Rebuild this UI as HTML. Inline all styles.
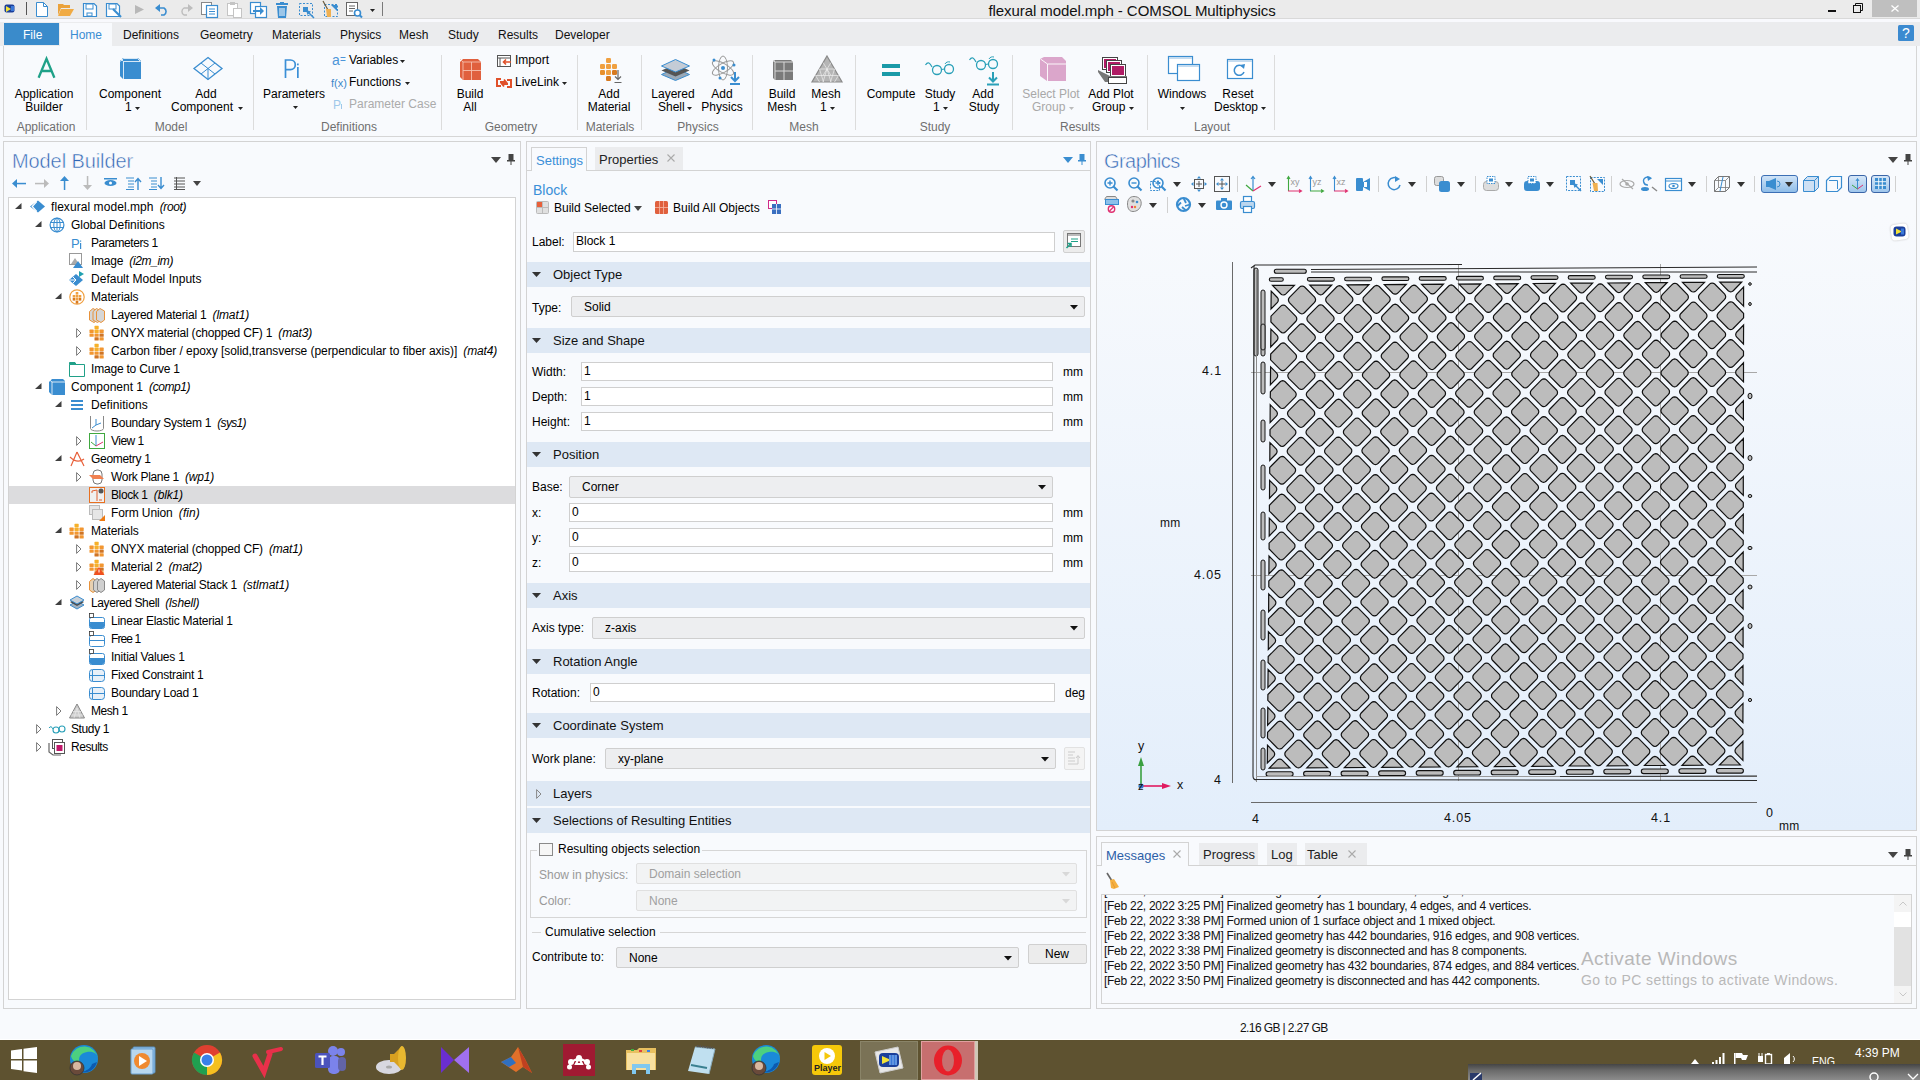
<!DOCTYPE html>
<html><head><meta charset="utf-8">
<style>
*{box-sizing:border-box;margin:0;padding:0}
html,body{width:1920px;height:1080px;overflow:hidden;background:#f8fafd;font-family:"Liberation Sans",sans-serif;font-size:12px;color:#000}
.a{position:absolute}
.t{position:absolute;white-space:nowrap}
.i{font-style:italic}
svg{position:absolute;overflow:visible}
</style></head><body>
<div class="a" style="left:0px;top:0px;width:1920px;height:18px;background:#ebebeb;"></div>
<div class="a" style="left:0px;top:18px;width:1920px;height:1px;background:#d9d9d9;"></div>
<div class="a" style="left:0px;top:19px;width:1920px;height:3px;background:#f8f9fd;"></div>
<div class="a" style="left:0px;top:22px;width:1920px;height:24px;background:#ebecee;"></div>
<div class="a" style="left:3px;top:46px;width:1914px;height:91px;background:#f8fafd;border-left:1px solid #d6d6d6;border-bottom:1px solid #d6d6d6;border-right:1px solid #d6d6d6"></div>
<div class="a" style="left:3px;top:141px;width:518px;height:868px;background:none;border:1px solid #d3d3d3"></div>
<div class="a" style="left:8px;top:197px;width:508px;height:803px;background:#fff;border:1px solid #d3d3d3"></div>
<div class="a" style="left:526px;top:141px;width:565px;height:868px;background:none;border:1px solid #d3d3d3"></div>
<div class="a" style="left:1096px;top:141px;width:821px;height:690px;background:none;border:1px solid #d3d3d3"></div>
<div class="a" style="left:1097px;top:215px;width:819px;height:615px;background:linear-gradient(#f8fafd,#e3eefb);"></div>
<div class="a" style="left:1096px;top:836px;width:821px;height:173px;background:none;border:1px solid #d3d3d3"></div>
<div class="a" style="left:0px;top:1039px;width:1920px;height:1px;background:#ffffff;"></div>
<div class="a" style="left:0px;top:1040px;width:1920px;height:40px;background:#5e5230;"></div>
<svg style="left:4px;top:3px" width="12" height="12" viewBox="0 0 12 12"><rect x="0.5" y="1.5" width="10" height="8" rx="2" fill="#1b3f9a"/><path d="M2 3 L7 6 L2 9Z" fill="#f2e23a"/><rect x="7" y="3" width="3" height="5" fill="#3a78d8"/></svg>
<div class="a" style="left:26px;top:2px;width:1px;height:13px;background:#555;"></div>
<svg style="left:36px;top:2px" width="12" height="15" viewBox="0 0 12 15"><path d="M0.5 0.5H7.5L11.5 4.5V14.5H0.5Z" fill="#fff" stroke="#3a8dd0"/><path d="M7.5 0.5V4.5H11.5" fill="none" stroke="#3a8dd0"/></svg>
<svg style="left:58px;top:4px" width="16" height="12" viewBox="0 0 16 12"><path d="M0 0H5L6 1H12V4H3L0 11Z" fill="#eba23a"/><path d="M3 5H16L12 12H0Z" fill="#f0ab44"/></svg>
<svg style="left:83px;top:3px" width="14" height="14" viewBox="0 0 14 14"><path d="M0.5 0.5H11L13.5 3V13.5H0.5Z" fill="#fff" stroke="#3a8dd0" stroke-width="1.2"/><rect x="3" y="1" width="7" height="5" fill="none" stroke="#3a8dd0"/><rect x="4" y="10" width="5" height="3" fill="none" stroke="#3a8dd0"/></svg>
<svg style="left:106px;top:3px" width="16" height="15" viewBox="0 0 16 15"><path d="M0.5 0.5H11L13.5 3V13.5H0.5Z" fill="#fff" stroke="#3a8dd0" stroke-width="1.2"/><rect x="3" y="1" width="7" height="5" fill="none" stroke="#3a8dd0"/><path d="M7 6L15 14" stroke="#3a8dd0" stroke-width="2.2"/></svg>
<svg style="left:135px;top:5px" width="9" height="9" viewBox="0 0 9 9"><path d="M0 0L9 4.5L0 9Z" fill="#b8b8b8"/></svg>
<svg style="left:155px;top:3px" width="14" height="13" viewBox="0 0 14 13"><path d="M3 5H9A4 4 0 0 1 9 12H6" fill="none" stroke="#3a8dd0" stroke-width="1.6"/><path d="M0 5L5 1V9Z" fill="#3a8dd0"/></svg>
<svg style="left:179px;top:3px" width="14" height="13" viewBox="0 0 14 13"><path d="M11 5H5A4 4 0 0 0 5 12H8" fill="none" stroke="#bdbdbd" stroke-width="1.4"/><path d="M14 5L9 1V9Z" fill="#bdbdbd"/></svg>
<svg style="left:201px;top:2px" width="17" height="16" viewBox="0 0 17 16"><rect x="0.5" y="0.5" width="10" height="12" fill="#fff" stroke="#888"/><rect x="5.5" y="3.5" width="11" height="12" fill="#fff" stroke="#3a8dd0" stroke-width="1.2"/><path d="M8 7H14M8 9.5H14M8 12H14" stroke="#3a8dd0"/></svg>
<svg style="left:227px;top:2px" width="15" height="16" viewBox="0 0 15 16"><rect x="0.5" y="1.5" width="10" height="12" fill="#fff" stroke="#c4c4c4"/><rect x="3" y="0" width="5" height="3" fill="#c4c4c4"/><rect x="6.5" y="6.5" width="8" height="9" fill="#fff" stroke="#c4c4c4"/></svg>
<svg style="left:250px;top:2px" width="17" height="16" viewBox="0 0 17 16"><rect x="0.5" y="0.5" width="10" height="11" fill="#fff" stroke="#3a8dd0" stroke-width="1.2"/><rect x="5.5" y="4.5" width="11" height="11" fill="#fff" stroke="#3a8dd0" stroke-width="1.2"/><path d="M3 8H10V5L14 9L10 13V10H3Z" fill="#3a8dd0"/></svg>
<svg style="left:276px;top:2px" width="12" height="16" viewBox="0 0 12 16"><rect x="0" y="1" width="12" height="2" fill="#3a8dd0"/><rect x="4" y="0" width="4" height="2" fill="#3a8dd0"/><path d="M1 4H11L10 16H2Z" fill="#3a8dd0"/><path d="M4 6V14M6 6V14M8 6V14" stroke="#fff" stroke-width="1"/></svg>
<svg style="left:299px;top:3px" width="16" height="15" viewBox="0 0 16 15"><rect x="0.5" y="0.5" width="13" height="12" fill="none" stroke="#3a8dd0" stroke-dasharray="2 1.5"/><rect x="4" y="4" width="5" height="5" fill="#3a8dd0"/><path d="M8 8L15 15" stroke="#3a8dd0" stroke-width="1.5"/><path d="M7 7L12 8.5L8.5 12Z" fill="#3a8dd0"/></svg>
<svg style="left:322px;top:1px" width="16" height="17" viewBox="0 0 16 17"><rect x="2.5" y="3.5" width="13" height="12" fill="none" stroke="#3a8dd0" stroke-dasharray="2 1.5"/><path d="M9 4L15 4L15 10Z" fill="#3a8dd0"/><path d="M1 0L6 9" stroke="#6b5a3a" stroke-width="1.2"/><path d="M4 8L9 8L9 16L5 16Z" fill="#f0b050"/></svg>
<svg style="left:346px;top:2px" width="17" height="17" viewBox="0 0 17 17"><rect x="0.5" y="0.5" width="11" height="13" fill="#fff" stroke="#666"/><path d="M3 4H9M3 6.5H9M3 9H7" stroke="#666"/><circle cx="11.5" cy="11" r="3" fill="#fff" stroke="#3a8dd0" stroke-width="1.6"/><path d="M13.5 13L16 15.5" stroke="#3a8dd0" stroke-width="2"/></svg>
<svg style="left:370px;top:9px" width="5" height="3" viewBox="0 0 5 3"><path d="M0 0H5L2.5 3Z" fill="#222"/></svg>
<div class="a" style="left:382px;top:2px;width:1px;height:14px;background:#7a7a7a;"></div>
<div class="t" style="left:988.5px;top:3.30px;font-size:15px;line-height:15px;color:#111;letter-spacing:-0.08px">flexural model.mph - COMSOL Multiphysics</div>
<div class="a" style="left:1828px;top:10px;width:8px;height:2px;background:#111;"></div>
<svg style="left:1853px;top:3px" width="10" height="11" viewBox="0 0 10 11"><rect x="0.5" y="2.5" width="7" height="7" fill="none" stroke="#111"/><path d="M2.5 2.5V0.5H9.5V7.5H7.5" fill="none" stroke="#111"/></svg>
<div class="a" style="left:1872px;top:0px;width:45px;height:17px;background:#bfbfbf;"></div>
<svg style="left:1891px;top:5px" width="8" height="7" viewBox="0 0 8 7"><path d="M0.5 0.5L7.5 6.5M7.5 0.5L0.5 6.5" stroke="#fff" stroke-width="1.3"/></svg>
<div class="a" style="left:4px;top:23px;width:55px;height:22px;background:#3a8bcb;"></div>
<div class="t" style="left:23px;top:28.84px;font-size:12px;line-height:12px;color:#fff;">File</div>
<div class="a" style="left:60px;top:23px;width:52px;height:23px;background:#f8fafd;"></div>
<div class="t" style="left:70px;top:28.84px;font-size:12px;line-height:12px;color:#3a8dd3;">Home</div>
<div class="t" style="left:123px;top:28.84px;font-size:12px;line-height:12px;color:#111;">Definitions</div>
<div class="t" style="left:200px;top:28.84px;font-size:12px;line-height:12px;color:#111;">Geometry</div>
<div class="t" style="left:272px;top:28.84px;font-size:12px;line-height:12px;color:#111;">Materials</div>
<div class="t" style="left:340px;top:28.84px;font-size:12px;line-height:12px;color:#111;">Physics</div>
<div class="t" style="left:399px;top:28.84px;font-size:12px;line-height:12px;color:#111;">Mesh</div>
<div class="t" style="left:448px;top:28.84px;font-size:12px;line-height:12px;color:#111;">Study</div>
<div class="t" style="left:498px;top:28.84px;font-size:12px;line-height:12px;color:#111;">Results</div>
<div class="t" style="left:555px;top:28.84px;font-size:12px;line-height:12px;color:#111;">Developer</div>
<div class="a" style="left:1898px;top:25px;width:16px;height:16px;background:#3b8ad0;border-radius:1.5px"></div>
<div class="t" style="left:1902px;top:26.15px;font-size:14px;line-height:14px;color:#fff;">?</div>
<div class="a" style="left:86px;top:55px;width:1px;height:75px;background:#dcdcdc;"></div>
<div class="a" style="left:253px;top:55px;width:1px;height:75px;background:#dcdcdc;"></div>
<div class="a" style="left:441px;top:55px;width:1px;height:75px;background:#dcdcdc;"></div>
<div class="a" style="left:577px;top:55px;width:1px;height:75px;background:#dcdcdc;"></div>
<div class="a" style="left:641px;top:55px;width:1px;height:75px;background:#dcdcdc;"></div>
<div class="a" style="left:752px;top:55px;width:1px;height:75px;background:#dcdcdc;"></div>
<div class="a" style="left:855px;top:55px;width:1px;height:75px;background:#dcdcdc;"></div>
<div class="a" style="left:1012px;top:55px;width:1px;height:75px;background:#dcdcdc;"></div>
<div class="a" style="left:1147px;top:55px;width:1px;height:75px;background:#dcdcdc;"></div>
<div class="a" style="left:1274px;top:55px;width:1px;height:75px;background:#dcdcdc;"></div>
<div class="t" style="left:-54.0px;width:200px;text-align:center;top:120.84px;font-size:12px;line-height:12px;color:#6f6f6f;">Application</div>
<div class="t" style="left:71.0px;width:200px;text-align:center;top:120.84px;font-size:12px;line-height:12px;color:#6f6f6f;">Model</div>
<div class="t" style="left:249.0px;width:200px;text-align:center;top:120.84px;font-size:12px;line-height:12px;color:#6f6f6f;">Definitions</div>
<div class="t" style="left:411.0px;width:200px;text-align:center;top:120.84px;font-size:12px;line-height:12px;color:#6f6f6f;">Geometry</div>
<div class="t" style="left:510.0px;width:200px;text-align:center;top:120.84px;font-size:12px;line-height:12px;color:#6f6f6f;">Materials</div>
<div class="t" style="left:598.0px;width:200px;text-align:center;top:120.84px;font-size:12px;line-height:12px;color:#6f6f6f;">Physics</div>
<div class="t" style="left:704.0px;width:200px;text-align:center;top:120.84px;font-size:12px;line-height:12px;color:#6f6f6f;">Mesh</div>
<div class="t" style="left:835.0px;width:200px;text-align:center;top:120.84px;font-size:12px;line-height:12px;color:#6f6f6f;">Study</div>
<div class="t" style="left:980.0px;width:200px;text-align:center;top:120.84px;font-size:12px;line-height:12px;color:#6f6f6f;">Results</div>
<div class="t" style="left:1112.0px;width:200px;text-align:center;top:120.84px;font-size:12px;line-height:12px;color:#6f6f6f;">Layout</div>
<svg style="left:36.5px;top:58px" width="20" height="21" viewBox="0 0 20 21"><path d="M1.6 19.8L9.5 0.8L17.4 19.8M4.6 13H14.4" fill="none" stroke="#1fa188" stroke-width="2.3"/></svg>
<div class="t" style="left:-56.0px;width:200px;text-align:center;top:87.84px;font-size:12px;line-height:12px;color:#000;">Application</div>
<div class="t" style="left:-56.0px;width:200px;text-align:center;top:100.84px;font-size:12px;line-height:12px;color:#000;">Builder</div>
<svg style="left:120px;top:58px" width="22" height="22" viewBox="0 0 22 22"><path d="M0 3L3 0H18L21 3V21H3L0 18Z" fill="#3a8dd0"/><path d="M0.5 3.5L3.5 0.5H17.5L20.5 3.5H3.5V21M3.5 3.5L0.5 0.5" fill="none" stroke="#fff" stroke-width="0.8"/></svg>
<div class="t" style="left:30.0px;width:200px;text-align:center;top:87.84px;font-size:12px;line-height:12px;color:#000;">Component</div>
<div class="t" style="left:125px;top:100.84px;font-size:12px;line-height:12px;color:#000;">1</div>
<svg style="left:135px;top:107px" width="5" height="3" viewBox="0 0 5 3"><path d="M0 0H5L2.5 3Z" fill="#222"/></svg>
<svg style="left:193px;top:57px" width="30" height="23" viewBox="0 0 30 23"><path d="M15 0.5L29 11.5L15 22.5L1 11.5Z" fill="none" stroke="#3a8dd0" stroke-width="1.3"/><path d="M8 6L15 11.5L22 6M15 11.5V22.5M8 17L15 11.5L22 17" fill="none" stroke="#3a8dd0" stroke-width="1"/></svg>
<div class="t" style="left:106.0px;width:200px;text-align:center;top:87.84px;font-size:12px;line-height:12px;color:#000;">Add</div>
<div class="t" style="left:171px;top:100.84px;font-size:12px;line-height:12px;color:#000;">Component</div>
<svg style="left:238px;top:107px" width="5" height="3" viewBox="0 0 5 3"><path d="M0 0H5L2.5 3Z" fill="#222"/></svg>
<svg style="left:284px;top:59px" width="18" height="19" viewBox="0 0 18 19"><path d="M1.5 19V1H6.5A4.8 4.8 0 0 1 6.5 10.6H1.5" fill="none" stroke="#3b8fd6" stroke-width="1.7"/><rect x="13" y="8" width="1.7" height="11" fill="#3b8fd6"/><rect x="13" y="4.5" width="1.7" height="1.8" fill="#3b8fd6"/></svg>
<div class="t" style="left:194.0px;width:200px;text-align:center;top:87.84px;font-size:12px;line-height:12px;color:#000;">Parameters</div>
<svg style="left:293px;top:106px" width="5" height="3" viewBox="0 0 5 3"><path d="M0 0H5L2.5 3Z" fill="#222"/></svg>
<div class="t" style="left:332px;top:53.15px;font-size:14px;line-height:14px;color:#4d96d9;">a</div>
<div class="t" style="left:340px;top:54.53px;font-size:10px;line-height:10px;color:#4d96d9;">=</div>
<div class="t" style="left:349px;top:53.84px;font-size:12px;line-height:12px;color:#000;">Variables</div>
<svg style="left:400px;top:60px" width="5" height="3" viewBox="0 0 5 3"><path d="M0 0H5L2.5 3Z" fill="#222"/></svg>
<div class="t" style="left:331px;top:77.69px;font-size:11px;line-height:11px;color:#3c86c9;">f(x)</div>
<div class="t" style="left:349px;top:75.84px;font-size:12px;line-height:12px;color:#000;">Functions</div>
<svg style="left:405px;top:82px" width="5" height="3" viewBox="0 0 5 3"><path d="M0 0H5L2.5 3Z" fill="#222"/></svg>
<div class="t" style="left:333px;top:98.84px;font-size:12px;line-height:12px;color:#9ec8ea;">P</div>
<div class="a" style="left:341px;top:104px;width:1px;height:5px;background:#9ec8ea;"></div>
<div class="t" style="left:349px;top:97.84px;font-size:12px;line-height:12px;color:#ababab;">Parameter Case</div>
<svg style="left:460px;top:59px" width="21" height="21" viewBox="0 0 21 21"><path d="M0 3L3 0H18L21 3V21H3L0 18Z" fill="#e0603e"/><path d="M3 3H21M3 11.5H21M11.5 3V21M3 3V21M3 3L0 0" stroke="#f6c0ae" stroke-width="0.9" fill="none"/></svg>
<div class="t" style="left:370.0px;width:200px;text-align:center;top:87.84px;font-size:12px;line-height:12px;color:#000;">Build</div>
<div class="t" style="left:370.0px;width:200px;text-align:center;top:100.84px;font-size:12px;line-height:12px;color:#000;">All</div>
<svg style="left:497px;top:55px" width="15" height="12" viewBox="0 0 15 12"><rect x="0.5" y="0.5" width="13" height="11" fill="#fff" stroke="#555"/><path d="M0.5 3H13.5M3 3V11.5" stroke="#555"/><path d="M14 7H7M9 4.5L6.5 7L9 9.5" fill="none" stroke="#e0502a" stroke-width="1.6"/></svg>
<div class="t" style="left:515px;top:53.84px;font-size:12px;line-height:12px;color:#000;">Import</div>
<svg style="left:496px;top:77px" width="16" height="12" viewBox="0 0 16 12"><path d="M5 2H1V9H5M11 3H15V10H11" fill="none" stroke="#e0502a" stroke-width="2"/><path d="M4 5L10 5L8 2.5M12 7L6 7L8 9.5" fill="none" stroke="#e0502a" stroke-width="1.8"/></svg>
<div class="t" style="left:515px;top:75.84px;font-size:12px;line-height:12px;color:#000;">LiveLink</div>
<svg style="left:562px;top:82px" width="5" height="3" viewBox="0 0 5 3"><path d="M0 0H5L2.5 3Z" fill="#222"/></svg>
<svg style="left:600px;top:58px" width="23" height="26" viewBox="0 0 23 26"><rect x="6" y="0" width="5" height="5" rx="1.2" fill="#f0a040"/><rect x="0" y="6" width="5" height="5" rx="1.2" fill="#f0a040"/><rect x="6" y="6" width="5" height="5" rx="1.2" fill="#f0a040"/><rect x="12" y="6" width="5" height="5" rx="1.2" fill="#f0a040"/><rect x="0" y="12" width="5" height="5" rx="1.2" fill="#e8902c"/><rect x="6" y="12" width="5" height="5" rx="1.2" fill="#f0a040"/><rect x="12" y="12" width="5" height="5" rx="1.2" fill="#d77a20"/><rect x="6" y="18" width="5" height="5" rx="1.2" fill="#d77a20"/><path d="M18 12V21M15 18.5L18 21.5L21 18.5M14.5 24.5H21.5" fill="none" stroke="#666" stroke-width="1.2"/></svg>
<div class="t" style="left:509.0px;width:200px;text-align:center;top:87.84px;font-size:12px;line-height:12px;color:#000;">Add</div>
<div class="t" style="left:509.0px;width:200px;text-align:center;top:100.84px;font-size:12px;line-height:12px;color:#000;">Material</div>
<svg style="left:661px;top:59px" width="29" height="22" viewBox="0 0 29 22"><path d="M14.5 9L28.5 15.5L14.5 21.5L0.5 15.5Z" fill="#9aa9b8" stroke="#3a8dd0"/><path d="M14.5 5L28.5 11.5L14.5 17.5L0.5 11.5Z" fill="#555"/><path d="M14.5 0.5L28.5 7L14.5 13L0.5 7Z" fill="#c4ccd6" stroke="#3a8dd0"/></svg>
<div class="t" style="left:573.0px;width:200px;text-align:center;top:87.84px;font-size:12px;line-height:12px;color:#000;">Layered</div>
<div class="t" style="left:658px;top:100.84px;font-size:12px;line-height:12px;color:#000;">Shell</div>
<svg style="left:687px;top:107px" width="5" height="3" viewBox="0 0 5 3"><path d="M0 0H5L2.5 3Z" fill="#222"/></svg>
<svg style="left:710px;top:54px" width="31" height="32" viewBox="0 0 31 32"><ellipse cx="13" cy="14" rx="12" ry="4.5" fill="none" stroke="#999" transform="rotate(30 13 14)"/><ellipse cx="13" cy="14" rx="12" ry="4.5" fill="none" stroke="#999" transform="rotate(-30 13 14)"/><ellipse cx="13" cy="14" rx="4.5" ry="12" fill="none" stroke="#999"/><circle cx="13" cy="14" r="2" fill="#3a8dd0"/><circle cx="4" cy="6" r="1.5" fill="#3a8dd0"/><circle cx="24" cy="11" r="1.5" fill="#3a8dd0"/><circle cx="10" cy="24" r="1.5" fill="#3a8dd0"/><path d="M25 18V26M21 23L25 27L29 23M20 30H30" fill="none" stroke="#3a8dd0" stroke-width="2"/></svg>
<div class="t" style="left:622.0px;width:200px;text-align:center;top:87.84px;font-size:12px;line-height:12px;color:#000;">Add</div>
<div class="t" style="left:622.0px;width:200px;text-align:center;top:100.84px;font-size:12px;line-height:12px;color:#000;">Physics</div>
<svg style="left:773px;top:60px" width="20" height="20" viewBox="0 0 20 20"><path d="M0 2L2 0H18L20 2V20H2L0 18Z" fill="#7a7a7a"/><path d="M2 2H20M2 11H20M11 2V20M2 2V20M2 2L0 0" stroke="#d8d8d8" stroke-width="1" fill="none"/></svg>
<div class="t" style="left:682.0px;width:200px;text-align:center;top:87.84px;font-size:12px;line-height:12px;color:#000;">Build</div>
<div class="t" style="left:682.0px;width:200px;text-align:center;top:100.84px;font-size:12px;line-height:12px;color:#000;">Mesh</div>
<svg style="left:811px;top:55px" width="32" height="28" viewBox="0 0 32 28"><path d="M16 1L31 27H1Z" fill="#b5b5b5" stroke="#8a8a8a" stroke-width="1.2"/><path d="M8.5 14H23.5M4.5 20.5H27.5M12 7.5L20 20.5M20 7.5L12 20.5M8.5 14L12.5 27M23.5 14L19.5 27M4.5 20.5L8.5 27M27.5 20.5L23.5 27M16 14L12 27M16 14L20 27" stroke="#eee" stroke-width="0.7"/></svg>
<div class="t" style="left:726.0px;width:200px;text-align:center;top:87.84px;font-size:12px;line-height:12px;color:#000;">Mesh</div>
<div class="t" style="left:820px;top:100.84px;font-size:12px;line-height:12px;color:#000;">1</div>
<svg style="left:830px;top:107px" width="5" height="3" viewBox="0 0 5 3"><path d="M0 0H5L2.5 3Z" fill="#222"/></svg>
<div class="a" style="left:882px;top:64px;width:18px;height:4px;background:#1a9aa8;"></div>
<div class="a" style="left:882px;top:72px;width:18px;height:4px;background:#1a9aa8;"></div>
<div class="t" style="left:791.0px;width:200px;text-align:center;top:87.84px;font-size:12px;line-height:12px;color:#000;">Compute</div>
<svg style="left:925px;top:61px" width="30" height="15" viewBox="0 0 30 15"><path d="M0.5 4C3 0 5 2 7 6" fill="none" stroke="#2aa0b8" stroke-width="1.2"/><circle cx="12" cy="9" r="4.5" fill="none" stroke="#2aa0b8" stroke-width="1.3"/><circle cx="24" cy="8" r="4.5" fill="none" stroke="#2aa0b8" stroke-width="1.3"/><path d="M16.5 8.5L19.5 8" stroke="#2aa0b8" stroke-width="1.2"/><path d="M20 3C21 1 23 0.5 25 1" fill="none" stroke="#2aa0b8"/></svg>
<div class="t" style="left:840.0px;width:200px;text-align:center;top:87.84px;font-size:12px;line-height:12px;color:#000;">Study</div>
<div class="t" style="left:933px;top:100.84px;font-size:12px;line-height:12px;color:#000;">1</div>
<svg style="left:943px;top:107px" width="5" height="3" viewBox="0 0 5 3"><path d="M0 0H5L2.5 3Z" fill="#222"/></svg>
<svg style="left:969px;top:56px" width="30" height="15" viewBox="0 0 30 15"><path d="M0.5 4C3 0 5 2 7 6" fill="none" stroke="#2aa0b8" stroke-width="1.2"/><circle cx="12" cy="9" r="4.5" fill="none" stroke="#2aa0b8" stroke-width="1.3"/><circle cx="24" cy="8" r="4.5" fill="none" stroke="#2aa0b8" stroke-width="1.3"/><path d="M16.5 8.5L19.5 8" stroke="#2aa0b8" stroke-width="1.2"/><path d="M20 3C21 1 23 0.5 25 1" fill="none" stroke="#2aa0b8"/></svg>
<svg style="left:985px;top:72px" width="16" height="14" viewBox="0 0 16 14"><path d="M8 0V9M4 5.5L8 9.5L12 5.5M2 12.5H14" fill="none" stroke="#2aa0b8" stroke-width="2"/></svg>
<div class="t" style="left:883.0px;width:200px;text-align:center;top:87.84px;font-size:12px;line-height:12px;color:#000;">Add</div>
<div class="t" style="left:884.0px;width:200px;text-align:center;top:100.84px;font-size:12px;line-height:12px;color:#000;">Study</div>
<svg style="left:1040px;top:57px" width="26" height="24" viewBox="0 0 26 24"><path d="M0 2L4 0H22L26 4V24H7L0 19Z" fill="#dba6cb"/><path d="M0.5 2L7.5 7V24M7.5 7H26" fill="none" stroke="#fff" stroke-width="0.9"/></svg>
<div class="t" style="left:951.0px;width:200px;text-align:center;top:87.84px;font-size:12px;line-height:12px;color:#a8a8a8;">Select Plot</div>
<div class="t" style="left:1032px;top:100.84px;font-size:12px;line-height:12px;color:#a8a8a8;">Group</div>
<svg style="left:1069px;top:107px" width="5" height="3" viewBox="0 0 5 3"><path d="M0 0H5L2.5 3Z" fill="#bbb"/></svg>
<svg style="left:1098px;top:57px" width="30" height="27" viewBox="0 0 30 27"><rect x="4.5" y="0.5" width="15" height="12" fill="#fff" stroke="#444"/><rect x="6" y="2" width="12" height="9" fill="#b01c65"/><rect x="8.5" y="3.5" width="15" height="12" fill="#fff" stroke="#444"/><rect x="10" y="5" width="12" height="9" fill="#b01c65"/><rect x="12.5" y="7.5" width="15" height="14" fill="#fff" stroke="#444"/><rect x="14" y="9" width="12" height="9" fill="#b01c65"/><path d="M0 15L7 25H29V19H12L0 13Z" fill="#777"/><rect x="10.5" y="20.5" width="18" height="6" fill="#fff" stroke="#444"/></svg>
<div class="t" style="left:1011.0px;width:200px;text-align:center;top:87.84px;font-size:12px;line-height:12px;color:#000;">Add Plot</div>
<div class="t" style="left:1092px;top:100.84px;font-size:12px;line-height:12px;color:#000;">Group</div>
<svg style="left:1129px;top:107px" width="5" height="3" viewBox="0 0 5 3"><path d="M0 0H5L2.5 3Z" fill="#222"/></svg>
<svg style="left:1168px;top:56px" width="32" height="25" viewBox="0 0 32 25"><rect x="0.5" y="0.5" width="24" height="17" fill="#fff" stroke="#3a8dd0" stroke-width="1.2"/><rect x="1" y="1" width="23" height="2" fill="#c5dcf0"/><rect x="9.5" y="8.5" width="22" height="16" fill="#fff" stroke="#3a8dd0" stroke-width="1.2"/><rect x="10" y="9" width="21" height="2" fill="#c5dcf0"/></svg>
<div class="t" style="left:1082.0px;width:200px;text-align:center;top:87.84px;font-size:12px;line-height:12px;color:#000;">Windows</div>
<svg style="left:1180px;top:107px" width="5" height="3" viewBox="0 0 5 3"><path d="M0 0H5L2.5 3Z" fill="#222"/></svg>
<svg style="left:1227px;top:59px" width="26" height="20" viewBox="0 0 26 20"><rect x="0.5" y="0.5" width="25" height="19" fill="#fff" stroke="#3a8dd0" stroke-width="1.2"/><rect x="1" y="1" width="24" height="2" fill="#c5dcf0"/><path d="M16 8A5 5 0 1 0 17 13" fill="none" stroke="#3a8dd0" stroke-width="1.5"/><path d="M13 6L18 5L17 10Z" fill="#3a8dd0"/></svg>
<div class="t" style="left:1138.0px;width:200px;text-align:center;top:87.84px;font-size:12px;line-height:12px;color:#000;">Reset</div>
<div class="t" style="left:1214px;top:100.84px;font-size:12px;line-height:12px;color:#000;">Desktop</div>
<svg style="left:1261px;top:107px" width="5" height="3" viewBox="0 0 5 3"><path d="M0 0H5L2.5 3Z" fill="#222"/></svg>
<div class="t" style="left:12px;top:151.07px;font-size:20px;line-height:20px;color:#3166b4;letter-spacing:-0.1px;-webkit-text-stroke:0.5px #f8fafd">Model Builder</div>
<svg style="left:491px;top:157px" width="10" height="6" viewBox="0 0 10 6"><path d="M0 0H10L5 6Z" fill="#444"/></svg>
<svg style="left:507px;top:154px" width="8" height="11" viewBox="0 0 8 11"><rect x="1.5" y="0" width="5" height="6" fill="#444"/><rect x="0" y="6" width="8" height="1.5" fill="#444"/><rect x="3.5" y="7" width="1" height="4" fill="#444"/></svg>
<svg style="left:12px;top:179px" width="14" height="9" viewBox="0 0 14 9"><path d="M0 4.5L5 0V9Z" fill="#3a8dd0"/><rect x="4" y="3.8" width="10" height="1.5" fill="#3a8dd0"/></svg>
<svg style="left:35px;top:179px" width="14" height="9" viewBox="0 0 14 9"><path d="M14 4.5L9 0V9Z" fill="#bbb"/><rect x="0" y="3.8" width="10" height="1.5" fill="#bbb"/></svg>
<svg style="left:60px;top:176px" width="9" height="14" viewBox="0 0 9 14"><path d="M4.5 0L0 5H9Z" fill="#3a8dd0"/><rect x="3.8" y="4" width="1.5" height="10" fill="#3a8dd0"/></svg>
<svg style="left:83px;top:176px" width="9" height="14" viewBox="0 0 9 14"><path d="M4.5 14L0 9H9Z" fill="#bbb"/><rect x="3.8" y="0" width="1.5" height="10" fill="#bbb"/></svg>
<svg style="left:104px;top:178px" width="13" height="9" viewBox="0 0 13 9"><rect x="0" y="0" width="13" height="1.5" fill="#3a8dd0"/><ellipse cx="6.5" cy="5" rx="6" ry="3" fill="#3a8dd0"/><circle cx="6.5" cy="5" r="1.5" fill="#fff"/></svg>
<svg style="left:126px;top:177px" width="15" height="13" viewBox="0 0 15 13"><path d="M0 1H8M2 4H8M2 7H8M2 10H8M0 12.5H8" stroke="#3a8dd0" stroke-width="1.2"/><path d="M12 13V2M9 5L12 1.5L15 5" fill="none" stroke="#3a8dd0" stroke-width="1.4"/></svg>
<svg style="left:149px;top:177px" width="15" height="13" viewBox="0 0 15 13"><path d="M0 1H8M2 4H8M2 7H8M2 10H8M0 12.5H8" stroke="#3a8dd0" stroke-width="1.2"/><path d="M12 0V11M9 8L12 11.5L15 8" fill="none" stroke="#3a8dd0" stroke-width="1.4"/></svg>
<svg style="left:174px;top:177px" width="11" height="13" viewBox="0 0 11 13"><path d="M0 1H11M0 4H11M0 7H11M0 10H11M0 12.5H11" stroke="#555" stroke-width="1.2"/><rect x="2" y="0" width="1" height="13" fill="#555"/></svg>
<svg style="left:193px;top:181px" width="8" height="5" viewBox="0 0 8 5"><path d="M0 0H8L4 5Z" fill="#444"/></svg>
<div class="a" style="left:9px;top:486px;width:506px;height:18px;background:#dcdcde;"></div>
<svg style="left:15px;top:203px" width="7" height="6" viewBox="0 0 7 6"><path d="M6.5 0V6H0Z" fill="#404040"/></svg>
<svg style="left:29px;top:199px" width="16" height="16" viewBox="0 0 16 16"><path d="M9 1.5L16 7.5L9 13.5L1 7.5Z" fill="#3a8dd0"/><path d="M7.8 2.5L3.2 7.5L7.8 12.5" stroke="#fff" stroke-width="1.2" fill="none"/></svg>
<div class="t" style="left:51px;top:200.84px;font-size:12px;line-height:12px;color:#000;letter-spacing:0.067px">flexural model.mph</div>
<div class="t" style="left:159.7px;top:200.84px;font-size:12px;line-height:12px;color:#000;font-style:italic;letter-spacing:-0.367px">(root)</div>
<svg style="left:35px;top:221px" width="7" height="6" viewBox="0 0 7 6"><path d="M6.5 0V6H0Z" fill="#404040"/></svg>
<svg style="left:49px;top:217px" width="16" height="16" viewBox="0 0 16 16"><circle cx="8" cy="8" r="6.9" fill="#fff" stroke="#3a8dd0" stroke-width="1.2"/><ellipse cx="8" cy="8" rx="3.2" ry="6.9" fill="none" stroke="#3a8dd0" stroke-width="1"/><path d="M1.2 5.5H14.8M1.2 10.5H14.8M8 1V15" stroke="#3a8dd0" stroke-width="1"/></svg>
<div class="t" style="left:71px;top:218.84px;font-size:12px;line-height:12px;color:#000;letter-spacing:-0.022px">Global Definitions</div>
<svg style="left:69px;top:235px" width="16" height="16" viewBox="0 0 16 16"><text x="2" y="13" font-size="13" fill="#3a8dd0" font-family="Liberation Sans">P</text><rect x="11" y="8" width="1.2" height="6" fill="#3a8dd0"/><rect x="11" y="5.5" width="1.2" height="1.2" fill="#3a8dd0"/></svg>
<div class="t" style="left:91px;top:236.84px;font-size:12px;line-height:12px;color:#000;letter-spacing:-0.450px">Parameters 1</div>
<svg style="left:69px;top:253px" width="16" height="16" viewBox="0 0 16 16"><rect x="0.5" y="0.5" width="12" height="11" fill="#fff" stroke="#999"/><path d="M2 11L6 5L10 11Z" fill="#aaa"/><path d="M4 15L9 8L14 15Z" fill="#3a8dd0"/></svg>
<div class="t" style="left:91px;top:254.84px;font-size:12px;line-height:12px;color:#000;letter-spacing:-0.240px">Image</div>
<div class="t" style="left:129.3px;top:254.84px;font-size:12px;line-height:12px;color:#000;font-style:italic;letter-spacing:-0.363px">(i2m_im)</div>
<svg style="left:69px;top:271px" width="16" height="16" viewBox="0 0 16 16"><path d="M7 3L14 9L7 15L0 9Z" fill="#3a8dd0"/><path d="M0.5 9H7L4 6M7 9L4 12" stroke="#fff" stroke-width="1" fill="none"/><path d="M10 0L15 3L10 6Z" fill="#20a0b0"/></svg>
<div class="t" style="left:91px;top:272.84px;font-size:12px;line-height:12px;color:#000;letter-spacing:0.020px">Default Model Inputs</div>
<svg style="left:55px;top:293px" width="7" height="6" viewBox="0 0 7 6"><path d="M6.5 0V6H0Z" fill="#404040"/></svg>
<svg style="left:69px;top:289px" width="16" height="16" viewBox="0 0 16 16"><circle cx="8" cy="8" r="7.2" fill="#fff" stroke="#f0a040" stroke-width="1.2"/><rect x="6.7" y="3" width="2.6" height="2.6" fill="#f0a040"/><rect x="3.7" y="6" width="2.6" height="2.6" fill="#f0a040"/><rect x="6.7" y="6" width="2.6" height="2.6" fill="#f0a040"/><rect x="9.7" y="6" width="2.6" height="2.6" fill="#f0a040"/><rect x="3.7" y="9" width="2.6" height="2.6" fill="#d97a20"/><rect x="6.7" y="9" width="2.6" height="2.6" fill="#f0a040"/><rect x="9.7" y="9" width="2.6" height="2.6" fill="#d97a20"/><rect x="6.7" y="12" width="2.6" height="2.6" fill="#d97a20"/></svg>
<div class="t" style="left:91px;top:290.84px;font-size:12px;line-height:12px;color:#000;letter-spacing:-0.144px">Materials</div>
<svg style="left:89px;top:307px" width="16" height="16" viewBox="0 0 16 16"><path d="M0.5 4.5L4 1.5L8.5 4V13L5 15.5L0.5 13Z" fill="#d6d6d6" stroke="#e8923a" stroke-width="1"/><path d="M4.0 4.5L7.5 1.5L12.0 4V13L8.5 15.5L4.0 13Z" fill="#d6d6d6" stroke="#e8923a" stroke-width="1"/><path d="M7.5 4.5L11 1.5L15.5 4V13L12 15.5L7.5 13Z" fill="#d6d6d6" stroke="#e8923a" stroke-width="1"/></svg>
<div class="t" style="left:111px;top:308.84px;font-size:12px;line-height:12px;color:#000;letter-spacing:-0.222px">Layered Material 1</div>
<div class="t" style="left:212.5px;top:308.84px;font-size:12px;line-height:12px;color:#000;font-style:italic;letter-spacing:-0.100px">(lmat1)</div>
<svg style="left:76px;top:328px" width="6" height="10" viewBox="0 0 6 10"><path d="M0.6 0.6L5 5L0.6 9.4Z" fill="#fff" stroke="#7a7a7a" stroke-width="1"/></svg>
<svg style="left:89px;top:325px" width="16" height="16" viewBox="0 0 16 16"><rect x="5.5" y="0.8" width="4.2" height="3.4" rx="0.6" fill="#f6b02a"/><rect x="0.5" y="4.6" width="4.2" height="3.4" rx="0.6" fill="#f29630"/><rect x="5.5" y="4.6" width="4.2" height="3.4" rx="0.6" fill="#f6b02a"/><rect x="10.5" y="4.6" width="4.2" height="3.4" rx="0.6" fill="#f29630"/><rect x="0.5" y="8.4" width="4.2" height="3.4" rx="0.6" fill="#f29630"/><rect x="5.5" y="8.4" width="4.2" height="3.4" rx="0.6" fill="#f29630"/><rect x="10.5" y="8.4" width="4.2" height="3.4" rx="0.6" fill="#cf7424"/><rect x="5.5" y="12.2" width="4.2" height="3.4" rx="0.6" fill="#cf7424"/><rect x="10.5" y="12.2" width="4.2" height="3.4" rx="0.6" fill="#f29630"/></svg>
<div class="t" style="left:111px;top:326.84px;font-size:12px;line-height:12px;color:#000;letter-spacing:-0.196px">ONYX material (chopped CF) 1</div>
<div class="t" style="left:278.3px;top:326.84px;font-size:12px;line-height:12px;color:#000;font-style:italic;letter-spacing:-0.133px">(mat3)</div>
<svg style="left:76px;top:346px" width="6" height="10" viewBox="0 0 6 10"><path d="M0.6 0.6L5 5L0.6 9.4Z" fill="#fff" stroke="#7a7a7a" stroke-width="1"/></svg>
<svg style="left:89px;top:343px" width="16" height="16" viewBox="0 0 16 16"><rect x="5.5" y="0.8" width="4.2" height="3.4" rx="0.6" fill="#f6b02a"/><rect x="0.5" y="4.6" width="4.2" height="3.4" rx="0.6" fill="#f29630"/><rect x="5.5" y="4.6" width="4.2" height="3.4" rx="0.6" fill="#f6b02a"/><rect x="10.5" y="4.6" width="4.2" height="3.4" rx="0.6" fill="#f29630"/><rect x="0.5" y="8.4" width="4.2" height="3.4" rx="0.6" fill="#f29630"/><rect x="5.5" y="8.4" width="4.2" height="3.4" rx="0.6" fill="#f29630"/><rect x="10.5" y="8.4" width="4.2" height="3.4" rx="0.6" fill="#cf7424"/><rect x="5.5" y="12.2" width="4.2" height="3.4" rx="0.6" fill="#cf7424"/><rect x="10.5" y="12.2" width="4.2" height="3.4" rx="0.6" fill="#f29630"/></svg>
<div class="t" style="left:111px;top:344.84px;font-size:12px;line-height:12px;color:#000;letter-spacing:-0.067px">Carbon fiber / epoxy [solid,transverse (perpendicular to fiber axis)]</div>
<div class="t" style="left:463.3px;top:344.84px;font-size:12px;line-height:12px;color:#000;font-style:italic;letter-spacing:-0.133px">(mat4)</div>
<svg style="left:69px;top:361px" width="16" height="16" viewBox="0 0 16 16"><path d="M0.5 3.5H15.5V15.5H0.5Z" fill="#fff" stroke="#20a088"/><path d="M0.5 3.5V1.5H6L7 3.5" fill="#20a088" stroke="#20a088"/></svg>
<div class="t" style="left:91px;top:362.84px;font-size:12px;line-height:12px;color:#000;letter-spacing:-0.200px">Image to Curve 1</div>
<svg style="left:35px;top:383px" width="7" height="6" viewBox="0 0 7 6"><path d="M6.5 0V6H0Z" fill="#404040"/></svg>
<svg style="left:49px;top:379px" width="16" height="16" viewBox="0 0 16 16"><path d="M0 3L3 0H14L16 2V16H3L0 13Z" fill="#3a8dd0"/><path d="M3 3H16M3 3V16M3 3L0 0.5" stroke="#fff" stroke-width="0.8" fill="none"/></svg>
<div class="t" style="left:71px;top:380.84px;font-size:12px;line-height:12px;color:#000;letter-spacing:0.000px">Component 1</div>
<div class="t" style="left:149.1px;top:380.84px;font-size:12px;line-height:12px;color:#000;font-style:italic;letter-spacing:-0.414px">(comp1)</div>
<svg style="left:55px;top:401px" width="7" height="6" viewBox="0 0 7 6"><path d="M6.5 0V6H0Z" fill="#404040"/></svg>
<svg style="left:69px;top:397px" width="16" height="16" viewBox="0 0 16 16"><rect x="2" y="3" width="12" height="2" fill="#3a8dd0"/><rect x="2" y="7" width="12" height="2" fill="#3a8dd0"/><rect x="2" y="11" width="12" height="2" fill="#3a8dd0"/></svg>
<div class="t" style="left:91px;top:398.84px;font-size:12px;line-height:12px;color:#000;letter-spacing:0.082px">Definitions</div>
<svg style="left:89px;top:415px" width="16" height="16" viewBox="0 0 16 16"><path d="M1.5 1V13.5A6.5 2.5 0 0 0 14.5 13.5V1" fill="#fff" stroke="#888"/><path d="M7 4V10L3 13M7 10L12 8" stroke="#3a8dd0" stroke-width="1" fill="none"/></svg>
<div class="t" style="left:111px;top:416.84px;font-size:12px;line-height:12px;color:#000;letter-spacing:-0.271px">Boundary System 1</div>
<div class="t" style="left:217.2px;top:416.84px;font-size:12px;line-height:12px;color:#000;font-style:italic;letter-spacing:-0.650px">(sys1)</div>
<svg style="left:76px;top:436px" width="6" height="10" viewBox="0 0 6 10"><path d="M0.6 0.6L5 5L0.6 9.4Z" fill="#fff" stroke="#7a7a7a" stroke-width="1"/></svg>
<svg style="left:89px;top:433px" width="16" height="16" viewBox="0 0 16 16"><rect x="0.5" y="0.5" width="15" height="15" fill="#fff" stroke="#40a840"/><path d="M7 2V13" stroke="#3a8dd0"/><path d="M7 13L2 9" stroke="#40a840"/><path d="M7 13L14 9" stroke="#e03070"/></svg>
<div class="t" style="left:111px;top:434.84px;font-size:12px;line-height:12px;color:#000;letter-spacing:-0.533px">View 1</div>
<svg style="left:55px;top:455px" width="7" height="6" viewBox="0 0 7 6"><path d="M6.5 0V6H0Z" fill="#404040"/></svg>
<svg style="left:69px;top:451px" width="16" height="16" viewBox="0 0 16 16"><path d="M8 1L2 15M8 1L15 15M1 6Q8 13 15 8" fill="none" stroke="#e8603a" stroke-width="1.2"/></svg>
<div class="t" style="left:91px;top:452.84px;font-size:12px;line-height:12px;color:#000;letter-spacing:-0.310px">Geometry 1</div>
<svg style="left:76px;top:472px" width="6" height="10" viewBox="0 0 6 10"><path d="M0.6 0.6L5 5L0.6 9.4Z" fill="#fff" stroke="#7a7a7a" stroke-width="1"/></svg>
<svg style="left:89px;top:469px" width="16" height="16" viewBox="0 0 16 16"><rect x="4" y="1" width="9" height="14" rx="4" fill="#fff" stroke="#777"/><path d="M0 6H11L15 10H4Z" fill="#f08050"/></svg>
<div class="t" style="left:111px;top:470.84px;font-size:12px;line-height:12px;color:#000;letter-spacing:-0.325px">Work Plane 1</div>
<div class="t" style="left:185.0px;top:470.84px;font-size:12px;line-height:12px;color:#000;font-style:italic;letter-spacing:-0.180px">(wp1)</div>
<svg style="left:89px;top:487px" width="16" height="16" viewBox="0 0 16 16"><rect x="0.5" y="0.5" width="15" height="15" fill="#f0f0f0" stroke="#e87020"/><path d="M3 4L8 3V14M3 4V6M13 13H10" stroke="#e06030" fill="none"/><circle cx="12" cy="4" r="2.5" fill="#555"/></svg>
<div class="t" style="left:111px;top:488.84px;font-size:12px;line-height:12px;color:#000;letter-spacing:-0.386px">Block 1</div>
<div class="t" style="left:153.79999999999998px;top:488.84px;font-size:12px;line-height:12px;color:#000;font-style:italic;letter-spacing:-0.150px">(blk1)</div>
<svg style="left:89px;top:505px" width="16" height="16" viewBox="0 0 16 16"><rect x="0.5" y="0.5" width="10" height="9" fill="#e6e6e6" stroke="#bbb"/><rect x="3.5" y="4.5" width="10" height="10" fill="#e6e6e6" stroke="#bbb"/><path d="M16 10V16H10Z" fill="#f07a10"/></svg>
<div class="t" style="left:111px;top:506.84px;font-size:12px;line-height:12px;color:#000;letter-spacing:-0.100px">Form Union</div>
<div class="t" style="left:178.79999999999998px;top:506.84px;font-size:12px;line-height:12px;color:#000;font-style:italic;letter-spacing:0.100px">(fin)</div>
<svg style="left:55px;top:527px" width="7" height="6" viewBox="0 0 7 6"><path d="M6.5 0V6H0Z" fill="#404040"/></svg>
<svg style="left:69px;top:523px" width="16" height="16" viewBox="0 0 16 16"><rect x="5.5" y="0.8" width="4.2" height="3.4" rx="0.6" fill="#f6b02a"/><rect x="0.5" y="4.6" width="4.2" height="3.4" rx="0.6" fill="#f29630"/><rect x="5.5" y="4.6" width="4.2" height="3.4" rx="0.6" fill="#f6b02a"/><rect x="10.5" y="4.6" width="4.2" height="3.4" rx="0.6" fill="#f29630"/><rect x="0.5" y="8.4" width="4.2" height="3.4" rx="0.6" fill="#f29630"/><rect x="5.5" y="8.4" width="4.2" height="3.4" rx="0.6" fill="#f29630"/><rect x="10.5" y="8.4" width="4.2" height="3.4" rx="0.6" fill="#cf7424"/><rect x="5.5" y="12.2" width="4.2" height="3.4" rx="0.6" fill="#cf7424"/><rect x="10.5" y="12.2" width="4.2" height="3.4" rx="0.6" fill="#f29630"/></svg>
<div class="t" style="left:91px;top:524.84px;font-size:12px;line-height:12px;color:#000;letter-spacing:-0.122px">Materials</div>
<svg style="left:76px;top:544px" width="6" height="10" viewBox="0 0 6 10"><path d="M0.6 0.6L5 5L0.6 9.4Z" fill="#fff" stroke="#7a7a7a" stroke-width="1"/></svg>
<svg style="left:89px;top:541px" width="16" height="16" viewBox="0 0 16 16"><rect x="5.5" y="0.8" width="4.2" height="3.4" rx="0.6" fill="#f6b02a"/><rect x="0.5" y="4.6" width="4.2" height="3.4" rx="0.6" fill="#f29630"/><rect x="5.5" y="4.6" width="4.2" height="3.4" rx="0.6" fill="#f6b02a"/><rect x="10.5" y="4.6" width="4.2" height="3.4" rx="0.6" fill="#f29630"/><rect x="0.5" y="8.4" width="4.2" height="3.4" rx="0.6" fill="#f29630"/><rect x="5.5" y="8.4" width="4.2" height="3.4" rx="0.6" fill="#f29630"/><rect x="10.5" y="8.4" width="4.2" height="3.4" rx="0.6" fill="#cf7424"/><rect x="5.5" y="12.2" width="4.2" height="3.4" rx="0.6" fill="#cf7424"/><rect x="10.5" y="12.2" width="4.2" height="3.4" rx="0.6" fill="#f29630"/></svg>
<div class="t" style="left:111px;top:542.84px;font-size:12px;line-height:12px;color:#000;letter-spacing:-0.188px">ONYX material (chopped CF)</div>
<div class="t" style="left:268.90000000000003px;top:542.84px;font-size:12px;line-height:12px;color:#000;font-style:italic;letter-spacing:-0.183px">(mat1)</div>
<svg style="left:76px;top:562px" width="6" height="10" viewBox="0 0 6 10"><path d="M0.6 0.6L5 5L0.6 9.4Z" fill="#fff" stroke="#7a7a7a" stroke-width="1"/></svg>
<svg style="left:89px;top:559px" width="16" height="16" viewBox="0 0 16 16"><rect x="5.5" y="0.8" width="4.2" height="3.4" rx="0.6" fill="#f6b02a"/><rect x="0.5" y="4.6" width="4.2" height="3.4" rx="0.6" fill="#f29630"/><rect x="5.5" y="4.6" width="4.2" height="3.4" rx="0.6" fill="#f6b02a"/><rect x="10.5" y="4.6" width="4.2" height="3.4" rx="0.6" fill="#f29630"/><rect x="0.5" y="8.4" width="4.2" height="3.4" rx="0.6" fill="#f29630"/><rect x="5.5" y="8.4" width="4.2" height="3.4" rx="0.6" fill="#f29630"/><rect x="10.5" y="8.4" width="4.2" height="3.4" rx="0.6" fill="#cf7424"/><rect x="5.5" y="12.2" width="4.2" height="3.4" rx="0.6" fill="#cf7424"/><rect x="10.5" y="12.2" width="4.2" height="3.4" rx="0.6" fill="#f29630"/><path d="M10 8L15.5 16H4.5Z" fill="#f05020"/><rect x="9.5" y="10.5" width="1" height="3" fill="#fff"/></svg>
<div class="t" style="left:111px;top:560.84px;font-size:12px;line-height:12px;color:#000;letter-spacing:-0.130px">Material 2</div>
<div class="t" style="left:168.5px;top:560.84px;font-size:12px;line-height:12px;color:#000;font-style:italic;letter-spacing:-0.183px">(mat2)</div>
<svg style="left:76px;top:580px" width="6" height="10" viewBox="0 0 6 10"><path d="M0.6 0.6L5 5L0.6 9.4Z" fill="#fff" stroke="#7a7a7a" stroke-width="1"/></svg>
<svg style="left:89px;top:577px" width="16" height="16" viewBox="0 0 16 16"><path d="M0.5 4.5L4 1.5L7.5 4V13L4 15.5L0.5 13Z" fill="#e8d0b0" stroke="#e8923a"/><path d="M4.5 4.5L8 1.5L11.5 4V13L8 15.5L4.5 13Z" fill="#d0d0d0" stroke="#8a8a8a"/><path d="M8.5 4.5L12 1.5L15.5 4V13L12 15.5L8.5 13Z" fill="#d0d0d0" stroke="#8a8a8a"/></svg>
<div class="t" style="left:111px;top:578.84px;font-size:12px;line-height:12px;color:#000;letter-spacing:-0.287px">Layered Material Stack 1</div>
<div class="t" style="left:242.9px;top:578.84px;font-size:12px;line-height:12px;color:#000;font-style:italic;letter-spacing:-0.044px">(stlmat1)</div>
<svg style="left:55px;top:599px" width="7" height="6" viewBox="0 0 7 6"><path d="M6.5 0V6H0Z" fill="#404040"/></svg>
<svg style="left:69px;top:595px" width="16" height="16" viewBox="0 0 16 16"><path d="M8 6L15 10L8 14L1 10Z" fill="#a0b0c0" stroke="#3a8dd0"/><path d="M8 3L15 7L8 11L1 7Z" fill="#4a4a4a"/><path d="M8 1L15 5L8 9L1 5Z" fill="#c8d0d8" stroke="#3a8dd0"/></svg>
<div class="t" style="left:91px;top:596.84px;font-size:12px;line-height:12px;color:#000;letter-spacing:-0.400px">Layered Shell</div>
<div class="t" style="left:165.29999999999998px;top:596.84px;font-size:12px;line-height:12px;color:#000;font-style:italic;letter-spacing:-0.175px">(lshell)</div>
<svg style="left:89px;top:613px" width="16" height="16" viewBox="0 0 16 16"><rect x="0.5" y="4.5" width="15" height="11" rx="2" fill="#fff" stroke="#3a8dd0"/><rect x="1" y="9" width="14" height="6" rx="1.5" fill="#3a8dd0"/><path d="M1 9.5H15" stroke="#3a8dd0"/><rect x="0.5" y="0.5" width="4" height="4" fill="#fff" stroke="#333" stroke-width="0.8"/></svg>
<div class="t" style="left:111px;top:614.84px;font-size:12px;line-height:12px;color:#000;letter-spacing:-0.256px">Linear Elastic Material 1</div>
<svg style="left:89px;top:631px" width="16" height="16" viewBox="0 0 16 16"><rect x="0.5" y="4.5" width="15" height="11" rx="2" fill="#fff" stroke="#3a8dd0"/><rect x="1" y="9" width="14" height="6" rx="1.5" fill="#fff"/><path d="M1 9.5H15" stroke="#3a8dd0"/><rect x="0.5" y="0.5" width="4" height="4" fill="#fff" stroke="#333" stroke-width="0.8"/></svg>
<div class="t" style="left:111px;top:632.84px;font-size:12px;line-height:12px;color:#000;letter-spacing:-0.917px">Free 1</div>
<svg style="left:89px;top:649px" width="16" height="16" viewBox="0 0 16 16"><rect x="0.5" y="4.5" width="15" height="11" rx="2" fill="#fff" stroke="#3a8dd0"/><rect x="1" y="9" width="14" height="6" rx="1.5" fill="#3a8dd0"/><path d="M1 9.5H15" stroke="#3a8dd0"/><rect x="0.5" y="0.5" width="4" height="4" fill="#fff" stroke="#333" stroke-width="0.8"/></svg>
<div class="t" style="left:111px;top:650.84px;font-size:12px;line-height:12px;color:#000;letter-spacing:-0.219px">Initial Values 1</div>
<svg style="left:89px;top:667px" width="16" height="16" viewBox="0 0 16 16"><rect x="0.5" y="2.5" width="15" height="12" rx="3" fill="#e8f0f8" stroke="#3a8dd0"/><path d="M1 8.5H15M3.5 3V14" stroke="#3a8dd0"/></svg>
<div class="t" style="left:111px;top:668.84px;font-size:12px;line-height:12px;color:#000;letter-spacing:-0.272px">Fixed Constraint 1</div>
<svg style="left:89px;top:685px" width="16" height="16" viewBox="0 0 16 16"><rect x="0.5" y="2.5" width="15" height="12" rx="3" fill="#e8f0f8" stroke="#3a8dd0"/><path d="M1 8.5H15M3.5 3V14" stroke="#3a8dd0"/></svg>
<div class="t" style="left:111px;top:686.84px;font-size:12px;line-height:12px;color:#000;letter-spacing:-0.267px">Boundary Load 1</div>
<svg style="left:56px;top:706px" width="6" height="10" viewBox="0 0 6 10"><path d="M0.6 0.6L5 5L0.6 9.4Z" fill="#fff" stroke="#7a7a7a" stroke-width="1"/></svg>
<svg style="left:69px;top:703px" width="16" height="16" viewBox="0 0 16 16"><path d="M8 1L15.5 15H0.5Z" fill="#ccc" stroke="#888"/><path d="M4 8.5H12M2 12H14M8 5L5 15M8 5L11 15" stroke="#eee" stroke-width="0.6"/></svg>
<div class="t" style="left:91px;top:704.84px;font-size:12px;line-height:12px;color:#000;letter-spacing:-0.450px">Mesh 1</div>
<svg style="left:36px;top:724px" width="6" height="10" viewBox="0 0 6 10"><path d="M0.6 0.6L5 5L0.6 9.4Z" fill="#fff" stroke="#7a7a7a" stroke-width="1"/></svg>
<svg style="left:49px;top:721px" width="16" height="16" viewBox="0 0 16 16"><path d="M0 7Q2 4 4 8" fill="none" stroke="#2aa0b8" stroke-width="1"/><circle cx="7" cy="9" r="3" fill="none" stroke="#2aa0b8" stroke-width="1.1"/><circle cx="13" cy="8" r="3" fill="none" stroke="#2aa0b8" stroke-width="1.1"/></svg>
<div class="t" style="left:71px;top:722.84px;font-size:12px;line-height:12px;color:#000;letter-spacing:-0.386px">Study 1</div>
<svg style="left:36px;top:742px" width="6" height="10" viewBox="0 0 6 10"><path d="M0.6 0.6L5 5L0.6 9.4Z" fill="#fff" stroke="#7a7a7a" stroke-width="1"/></svg>
<svg style="left:49px;top:739px" width="16" height="16" viewBox="0 0 16 16"><rect x="3.5" y="0.5" width="10" height="9" fill="#fff" stroke="#555"/><rect x="5.5" y="3.5" width="10" height="11" fill="#fff" stroke="#555"/><rect x="7.5" y="6" width="6" height="6" fill="#c0186a"/><path d="M0 4V13L4 16H12" fill="none" stroke="#666" stroke-width="1.2"/></svg>
<div class="t" style="left:71px;top:740.84px;font-size:12px;line-height:12px;color:#000;letter-spacing:-0.471px">Results</div>
<div class="a" style="left:527px;top:170px;width:563px;height:1px;background:#d3d3d3;"></div>
<div class="a" style="left:531px;top:147px;width:56px;height:24px;background:#f8fafd;border:1px solid #d3d3d3;border-bottom:none"></div>
<div class="t" style="left:536px;top:154.00px;font-size:13px;line-height:13px;color:#3a8fd8;">Settings</div>
<div class="a" style="left:595px;top:147px;width:88px;height:23px;background:#ebecee;"></div>
<div class="t" style="left:599px;top:153.00px;font-size:13px;line-height:13px;color:#222;">Properties</div>
<svg style="left:667px;top:154px" width="8" height="8" viewBox="0 0 8 8"><path d="M0.5 0.5L7.5 7.5M7.5 0.5L0.5 7.5" stroke="#aaa" stroke-width="1.1"/></svg>
<svg style="left:1063px;top:157px" width="10" height="6" viewBox="0 0 10 6"><path d="M0 0H10L5 6Z" fill="#3a8dd0"/></svg>
<svg style="left:1078px;top:154px" width="8" height="11" viewBox="0 0 8 11"><rect x="1.5" y="0" width="5" height="6" fill="#3a8dd0"/><rect x="0" y="6" width="8" height="1.5" fill="#3a8dd0"/><rect x="3.5" y="7" width="1" height="4" fill="#3a8dd0"/></svg>
<div class="t" style="left:533px;top:183.15px;font-size:14px;line-height:14px;color:#3a8fd8;">Block</div>
<svg style="left:536px;top:201px" width="13" height="13" viewBox="0 0 13 13"><rect x="0.5" y="0.5" width="12" height="12" rx="1" fill="#e0e0e0" stroke="#bbb"/><rect x="1" y="1" width="6" height="6" fill="#e8603a"/><path d="M6.5 1V12M1 6.5H12" stroke="#bbb"/></svg>
<div class="t" style="left:554px;top:201.84px;font-size:12px;line-height:12px;color:#000;">Build Selected</div>
<svg style="left:634px;top:206px" width="8" height="5" viewBox="0 0 8 5"><path d="M0 0H8L4 5Z" fill="#444"/></svg>
<svg style="left:655px;top:201px" width="13" height="13" viewBox="0 0 13 13"><rect x="0" y="0" width="13" height="13" rx="1.5" fill="#e0603e"/><path d="M4.5 0V13M8.5 0V13M0 6.5H13" stroke="#f6b8a4" stroke-width="0.8"/></svg>
<div class="t" style="left:673px;top:201.84px;font-size:12px;line-height:12px;color:#000;">Build All Objects</div>
<svg style="left:768px;top:200px" width="13" height="14" viewBox="0 0 13 14"><rect x="0.5" y="0.5" width="8" height="8" fill="#fff" stroke="#d02a8a"/><rect x="4" y="4" width="9" height="10" fill="#3a6fc0"/><path d="M8.5 4V14M4 9H13" stroke="#fff" stroke-width="0.8"/></svg>
<div class="t" style="left:532px;top:235.84px;font-size:12px;line-height:12px;color:#000;">Label:</div>
<div class="a" style="left:573px;top:232px;width:482px;height:20px;background:#fff;border:1px solid #cfcfcf"></div>
<div class="t" style="left:576px;top:234.84px;font-size:12px;line-height:12px;color:#000;">Block 1</div>
<div class="a" style="left:1063px;top:230px;width:22px;height:23px;background:#ececec;border:1px solid #d0d0d0;border-radius:2px"></div>
<svg style="left:1066px;top:233px" width="16" height="16" viewBox="0 0 16 16"><rect x="1.5" y="0.5" width="13" height="13" fill="#fff" stroke="#777"/><rect x="2" y="1" width="12" height="2" fill="#bbb"/><path d="M5 6H12M5 8.5H12" stroke="#1fa188" stroke-width="1"/><path d="M0.5 15L4.5 11M1.5 10.5H5V14" stroke="#1fa188" stroke-width="1.5" fill="none"/></svg>
<div class="a" style="left:527px;top:262px;width:563px;height:25px;background:#dee8f4;"></div><svg style="left:532px;top:272px" width="9" height="5" viewBox="0 0 9 5"><path d="M0 0H9L4.5 5Z" fill="#333"/></svg><div class="t" style="left:553px;top:268.00px;font-size:13px;line-height:13px;color:#111;">Object Type</div>
<div class="t" style="left:532px;top:301.84px;font-size:12px;line-height:12px;color:#000;">Type:</div>
<div class="a" style="left:571px;top:296px;width:514px;height:21px;background:#edeef0;border:1px solid #cfcfcf;border-radius:2px"></div><div class="t" style="left:584px;top:300.84px;font-size:12px;line-height:12px;color:#000;">Solid</div><svg style="left:1070px;top:305px" width="8" height="4" viewBox="0 0 8 4"><path d="M0 0H8L4 4.5Z" fill="#111"/></svg>
<div class="a" style="left:527px;top:328px;width:563px;height:25px;background:#dee8f4;"></div><svg style="left:532px;top:338px" width="9" height="5" viewBox="0 0 9 5"><path d="M0 0H9L4.5 5Z" fill="#333"/></svg><div class="t" style="left:553px;top:334.00px;font-size:13px;line-height:13px;color:#111;">Size and Shape</div>
<div class="t" style="left:532px;top:365.84px;font-size:12px;line-height:12px;color:#000;">Width:</div>
<div class="a" style="left:581px;top:362px;width:472px;height:19px;background:#fff;border:1px solid #cfcfcf"></div><div class="t" style="left:584px;top:364.84px;font-size:12px;line-height:12px;color:#000;">1</div>
<div class="t" style="left:1063px;top:365.84px;font-size:12px;line-height:12px;color:#000;">mm</div>
<div class="t" style="left:532px;top:390.84px;font-size:12px;line-height:12px;color:#000;">Depth:</div>
<div class="a" style="left:581px;top:387px;width:472px;height:19px;background:#fff;border:1px solid #cfcfcf"></div><div class="t" style="left:584px;top:389.84px;font-size:12px;line-height:12px;color:#000;">1</div>
<div class="t" style="left:1063px;top:390.84px;font-size:12px;line-height:12px;color:#000;">mm</div>
<div class="t" style="left:532px;top:415.84px;font-size:12px;line-height:12px;color:#000;">Height:</div>
<div class="a" style="left:581px;top:412px;width:472px;height:19px;background:#fff;border:1px solid #cfcfcf"></div><div class="t" style="left:584px;top:414.84px;font-size:12px;line-height:12px;color:#000;">1</div>
<div class="t" style="left:1063px;top:415.84px;font-size:12px;line-height:12px;color:#000;">mm</div>
<div class="a" style="left:527px;top:442px;width:563px;height:25px;background:#dee8f4;"></div><svg style="left:532px;top:452px" width="9" height="5" viewBox="0 0 9 5"><path d="M0 0H9L4.5 5Z" fill="#333"/></svg><div class="t" style="left:553px;top:448.00px;font-size:13px;line-height:13px;color:#111;">Position</div>
<div class="t" style="left:532px;top:480.84px;font-size:12px;line-height:12px;color:#000;">Base:</div>
<div class="a" style="left:569px;top:476px;width:484px;height:22px;background:#edeef0;border:1px solid #cfcfcf;border-radius:2px"></div><div class="t" style="left:582px;top:480.84px;font-size:12px;line-height:12px;color:#000;">Corner</div><svg style="left:1038px;top:485px" width="8" height="4" viewBox="0 0 8 4"><path d="M0 0H8L4 4.5Z" fill="#111"/></svg>
<div class="t" style="left:532px;top:506.84px;font-size:12px;line-height:12px;color:#000;">x:</div>
<div class="a" style="left:569px;top:503px;width:484px;height:19px;background:#fff;border:1px solid #cfcfcf"></div><div class="t" style="left:572px;top:505.84px;font-size:12px;line-height:12px;color:#000;">0</div>
<div class="t" style="left:1063px;top:506.84px;font-size:12px;line-height:12px;color:#000;">mm</div>
<div class="t" style="left:532px;top:531.84px;font-size:12px;line-height:12px;color:#000;">y:</div>
<div class="a" style="left:569px;top:528px;width:484px;height:19px;background:#fff;border:1px solid #cfcfcf"></div><div class="t" style="left:572px;top:530.84px;font-size:12px;line-height:12px;color:#000;">0</div>
<div class="t" style="left:1063px;top:531.84px;font-size:12px;line-height:12px;color:#000;">mm</div>
<div class="t" style="left:532px;top:556.84px;font-size:12px;line-height:12px;color:#000;">z:</div>
<div class="a" style="left:569px;top:553px;width:484px;height:19px;background:#fff;border:1px solid #cfcfcf"></div><div class="t" style="left:572px;top:555.84px;font-size:12px;line-height:12px;color:#000;">0</div>
<div class="t" style="left:1063px;top:556.84px;font-size:12px;line-height:12px;color:#000;">mm</div>
<div class="a" style="left:527px;top:583px;width:563px;height:25px;background:#dee8f4;"></div><svg style="left:532px;top:593px" width="9" height="5" viewBox="0 0 9 5"><path d="M0 0H9L4.5 5Z" fill="#333"/></svg><div class="t" style="left:553px;top:589.00px;font-size:13px;line-height:13px;color:#111;">Axis</div>
<div class="t" style="left:532px;top:621.84px;font-size:12px;line-height:12px;color:#000;">Axis type:</div>
<div class="a" style="left:592px;top:617px;width:493px;height:22px;background:#edeef0;border:1px solid #cfcfcf;border-radius:2px"></div><div class="t" style="left:605px;top:621.84px;font-size:12px;line-height:12px;color:#000;">z-axis</div><svg style="left:1070px;top:626px" width="8" height="4" viewBox="0 0 8 4"><path d="M0 0H8L4 4.5Z" fill="#111"/></svg>
<div class="a" style="left:527px;top:649px;width:563px;height:25px;background:#dee8f4;"></div><svg style="left:532px;top:659px" width="9" height="5" viewBox="0 0 9 5"><path d="M0 0H9L4.5 5Z" fill="#333"/></svg><div class="t" style="left:553px;top:655.00px;font-size:13px;line-height:13px;color:#111;">Rotation Angle</div>
<div class="t" style="left:532px;top:686.84px;font-size:12px;line-height:12px;color:#000;">Rotation:</div>
<div class="a" style="left:590px;top:683px;width:465px;height:19px;background:#fff;border:1px solid #cfcfcf"></div><div class="t" style="left:593px;top:685.84px;font-size:12px;line-height:12px;color:#000;">0</div>
<div class="t" style="left:1065px;top:686.84px;font-size:12px;line-height:12px;color:#000;">deg</div>
<div class="a" style="left:527px;top:713px;width:563px;height:25px;background:#dee8f4;"></div><svg style="left:532px;top:723px" width="9" height="5" viewBox="0 0 9 5"><path d="M0 0H9L4.5 5Z" fill="#333"/></svg><div class="t" style="left:553px;top:719.00px;font-size:13px;line-height:13px;color:#111;">Coordinate System</div>
<div class="t" style="left:532px;top:752.84px;font-size:12px;line-height:12px;color:#000;">Work plane:</div>
<div class="a" style="left:605px;top:748px;width:451px;height:21px;background:#edeef0;border:1px solid #cfcfcf;border-radius:2px"></div><div class="t" style="left:618px;top:752.84px;font-size:12px;line-height:12px;color:#000;">xy-plane</div><svg style="left:1041px;top:757px" width="8" height="4" viewBox="0 0 8 4"><path d="M0 0H8L4 4.5Z" fill="#111"/></svg>
<div class="a" style="left:1064px;top:747px;width:21px;height:23px;background:#f4f4f4;border:1px solid #e2e2e2;border-radius:2px"></div>
<svg style="left:1068px;top:751px" width="13" height="14" viewBox="0 0 13 14"><path d="M0 1H7M0 4H5M0 7H7M0 10H7M0 13H10M10 13V5M8 7L10 4.5L12 7" stroke="#ccc" fill="none"/></svg>
<div class="a" style="left:527px;top:781px;width:563px;height:25px;background:#dee8f4;"></div><svg style="left:536px;top:789px" width="6" height="10" viewBox="0 0 6 10"><path d="M0.6 0.6L5 5L0.6 9.4Z" fill="none" stroke="#888" stroke-width="1"/></svg><div class="t" style="left:553px;top:787.00px;font-size:13px;line-height:13px;color:#111;">Layers</div>
<div class="a" style="left:527px;top:808px;width:563px;height:25px;background:#dee8f4;"></div><svg style="left:532px;top:818px" width="9" height="5" viewBox="0 0 9 5"><path d="M0 0H9L4.5 5Z" fill="#333"/></svg><div class="t" style="left:553px;top:814.00px;font-size:13px;line-height:13px;color:#111;">Selections of Resulting Entities</div>
<div class="a" style="left:530px;top:850px;width:557px;height:68px;background:none;border:1px solid #d6d6d6"></div>
<div class="a" style="left:537px;top:842px;width:165px;height:14px;background:#f8fafd;"></div>
<div class="a" style="left:539px;top:843px;width:14px;height:13px;background:#f6f6f6;border:1px solid #8a8a8a"></div>
<div class="t" style="left:558px;top:842.84px;font-size:12px;line-height:12px;color:#000;">Resulting objects selection</div>
<div class="t" style="left:539px;top:868.84px;font-size:12px;line-height:12px;color:#999;">Show in physics:</div>
<div class="a" style="left:636px;top:863px;width:441px;height:21px;background:#f2f3f4;border:1px solid #e0e0e0;border-radius:2px"></div><div class="t" style="left:649px;top:867.84px;font-size:12px;line-height:12px;color:#a0a0a0;">Domain selection</div><svg style="left:1062px;top:872px" width="8" height="4" viewBox="0 0 8 4"><path d="M0 0H8L4 4.5Z" fill="#d8d8d8"/></svg>
<div class="t" style="left:539px;top:894.84px;font-size:12px;line-height:12px;color:#999;">Color:</div>
<div class="a" style="left:636px;top:890px;width:441px;height:21px;background:#f2f3f4;border:1px solid #e0e0e0;border-radius:2px"></div><div class="t" style="left:649px;top:894.84px;font-size:12px;line-height:12px;color:#a0a0a0;">None</div><svg style="left:1062px;top:899px" width="8" height="4" viewBox="0 0 8 4"><path d="M0 0H8L4 4.5Z" fill="#d8d8d8"/></svg>
<div class="a" style="left:532px;top:932px;width:9px;height:1px;background:#d6d6d6;"></div>
<div class="t" style="left:545px;top:925.84px;font-size:12px;line-height:12px;color:#000;">Cumulative selection</div>
<div class="a" style="left:660px;top:932px;width:426px;height:1px;background:#d6d6d6;"></div>
<div class="t" style="left:532px;top:950.84px;font-size:12px;line-height:12px;color:#000;">Contribute to:</div>
<div class="a" style="left:616px;top:947px;width:403px;height:21px;background:#edeef0;border:1px solid #cfcfcf;border-radius:2px"></div><div class="t" style="left:629px;top:951.84px;font-size:12px;line-height:12px;color:#000;">None</div><svg style="left:1004px;top:956px" width="8" height="4" viewBox="0 0 8 4"><path d="M0 0H8L4 4.5Z" fill="#111"/></svg>
<div class="a" style="left:1028px;top:944px;width:59px;height:20px;background:#ececec;border:1px solid #d0d0d0;border-radius:2px"></div>
<div class="t" style="left:1045px;top:947.84px;font-size:12px;line-height:12px;color:#000;">New</div>
<div class="t" style="left:1104px;top:151.07px;font-size:20px;line-height:20px;color:#3166b4;letter-spacing:-0.55px;-webkit-text-stroke:0.5px #f8fafd">Graphics</div>
<svg style="left:1888px;top:157px" width="10" height="6" viewBox="0 0 10 6"><path d="M0 0H10L5 6Z" fill="#444"/></svg>
<svg style="left:1904px;top:154px" width="8" height="11" viewBox="0 0 8 11"><rect x="1.5" y="0" width="5" height="6" fill="#444"/><rect x="0" y="6" width="8" height="1.5" fill="#444"/><rect x="3.5" y="7" width="1" height="4" fill="#444"/></svg>
<svg style="left:1104px;top:177px" width="14" height="14" viewBox="0 0 14 14"><circle cx="6" cy="6" r="5" fill="none" stroke="#3a8dd0" stroke-width="1.6"/><path d="M9.5 9.5L13.5 13.5" stroke="#3a8dd0" stroke-width="2.2"/><path d="M3.5 6H8.5M6 3.5V8.5" stroke="#3a8dd0" stroke-width="1.4"/></svg>
<svg style="left:1128px;top:177px" width="14" height="14" viewBox="0 0 14 14"><circle cx="6" cy="6" r="5" fill="none" stroke="#3a8dd0" stroke-width="1.6"/><path d="M9.5 9.5L13.5 13.5" stroke="#3a8dd0" stroke-width="2.2"/><path d="M3.5 6H8.5" stroke="#3a8dd0" stroke-width="1.4"/></svg>
<svg style="left:1150px;top:177px" width="16" height="14" viewBox="0 0 16 14"><rect x="0.5" y="4.5" width="9" height="9" fill="none" stroke="#3a8dd0" stroke-dasharray="2 1.2"/><g transform="translate(2,0)"><circle cx="6" cy="6" r="5" fill="none" stroke="#3a8dd0" stroke-width="1.6"/><path d="M9.5 9.5L13.5 13.5" stroke="#3a8dd0" stroke-width="2.2"/><path d="M3.5 6H8.5M6 3.5V8.5" stroke="#3a8dd0" stroke-width="1.4"/></g></svg>
<svg style="left:1173px;top:182px" width="8" height="5" viewBox="0 0 8 5"><path d="M0 0H8L4 5Z" fill="#333"/></svg>
<svg style="left:1191px;top:176px" width="16" height="16" viewBox="0 0 16 16"><rect x="3.5" y="3.5" width="9" height="9" fill="none" stroke="#555"/><path d="M8 5V11M5 8H11" stroke="#555"/><path d="M8 0L6 2.5H10ZM8 16L6 13.5H10ZM0 8L2.5 6V10ZM16 8L13.5 6V10Z" fill="#3a8dd0"/></svg>
<svg style="left:1214px;top:176px" width="16" height="16" viewBox="0 0 16 16"><rect x="0.5" y="0.5" width="15" height="15" fill="none" stroke="#555"/><path d="M8 4.5V11.5M4.5 8H11.5" stroke="#555"/><path d="M8 2L6 4.5H10ZM8 14L6 11.5H10ZM2 8L4.5 6V10ZM14 8L11.5 6V10Z" fill="#3a8dd0"/></svg>
<div class="a" style="left:1237px;top:176px;width:1px;height:16px;background:#d0d0d0;"></div>
<svg style="left:1245px;top:176px" width="17" height="16" viewBox="0 0 17 16"><path d="M8 15V1M6 3L8 0.5L10 3" fill="none" stroke="#3a8dd0" stroke-width="1.2"/><path d="M8 15L1 9" stroke="#40a840" stroke-width="1.2"/><path d="M8 15L16 10" stroke="#e03070" stroke-width="1.2"/></svg>
<svg style="left:1268px;top:182px" width="8" height="5" viewBox="0 0 8 5"><path d="M0 0H8L4 5Z" fill="#333"/></svg>
<svg style="left:1287px;top:176px" width="15" height="16" viewBox="0 0 15 16"><path d="M1.5 15V1M0 3L1.5 0.5L3 3" fill="none" stroke="#40a840" stroke-width="1.1"/><path d="M1 15H14M12 13.5L14.5 15L12 16.5" fill="none" stroke="#e03070" stroke-width="1.1"/><text x="3.5" y="9" font-size="9" fill="#999" font-family="Liberation Sans">xy</text></svg>
<svg style="left:1309px;top:176px" width="15" height="16" viewBox="0 0 15 16"><path d="M1.5 15V1M0 3L1.5 0.5L3 3" fill="none" stroke="#3a8dd0" stroke-width="1.1"/><path d="M1 15H14M12 13.5L14.5 15L12 16.5" fill="none" stroke="#40a840" stroke-width="1.1"/><text x="3.5" y="9" font-size="9" fill="#999" font-family="Liberation Sans">yz</text></svg>
<svg style="left:1333px;top:176px" width="15" height="16" viewBox="0 0 15 16"><path d="M1.5 15V1M0 3L1.5 0.5L3 3" fill="none" stroke="#3a8dd0" stroke-width="1.1"/><path d="M1 15H14M12 13.5L14.5 15L12 16.5" fill="none" stroke="#e03070" stroke-width="1.1"/><text x="3.5" y="9" font-size="9" fill="#999" font-family="Liberation Sans">xz</text></svg>
<svg style="left:1356px;top:178px" width="15" height="13" viewBox="0 0 15 13"><rect x="0" y="0" width="7" height="13" rx="1" fill="#3a8dd0"/><path d="M7 4L14 0V13L7 9Z" fill="#3a8dd0"/><rect x="8" y="4" width="3" height="5" fill="#fff"/></svg>
<div class="a" style="left:1378px;top:176px;width:1px;height:16px;background:#d0d0d0;"></div>
<svg style="left:1387px;top:176px" width="15" height="15" viewBox="0 0 15 15"><path d="M11 3A6 6 0 1 0 13 9" fill="none" stroke="#3a8dd0" stroke-width="1.5"/><path d="M8 0L13 3L8 6Z" fill="#3a8dd0"/></svg>
<svg style="left:1408px;top:182px" width="8" height="5" viewBox="0 0 8 5"><path d="M0 0H8L4 5Z" fill="#333"/></svg>
<div class="a" style="left:1426px;top:176px;width:1px;height:16px;background:#d0d0d0;"></div>
<svg style="left:1434px;top:176px" width="16" height="16" viewBox="0 0 16 16"><rect x="0.5" y="0.5" width="9" height="9" rx="2" fill="#ddd" stroke="#999"/><rect x="5" y="5" width="11" height="11" rx="2.5" fill="#3a8dd0"/></svg>
<svg style="left:1457px;top:182px" width="8" height="5" viewBox="0 0 8 5"><path d="M0 0H8L4 5Z" fill="#333"/></svg>
<div class="a" style="left:1475px;top:176px;width:1px;height:16px;background:#d0d0d0;"></div>
<svg style="left:1483px;top:176px" width="16" height="15" viewBox="0 0 16 15"><rect x="0.5" y="5.5" width="15" height="9" rx="3" fill="#ddd" stroke="#aaa"/><rect x="4" y="0.5" width="8" height="7" fill="#fff" stroke="#3a8dd0" stroke-dasharray="1.5 1"/><rect x="6" y="2.5" width="4" height="3" fill="#3a8dd0"/></svg>
<svg style="left:1505px;top:182px" width="8" height="5" viewBox="0 0 8 5"><path d="M0 0H8L4 5Z" fill="#333"/></svg>
<svg style="left:1524px;top:176px" width="16" height="15" viewBox="0 0 16 15"><rect x="0" y="5" width="16" height="10" rx="3" fill="#3a8dd0"/><rect x="4" y="0.5" width="8" height="7" fill="#fff" stroke="#3a8dd0" stroke-dasharray="1.5 1"/><rect x="6" y="2.5" width="4" height="3" fill="#3a8dd0"/></svg>
<svg style="left:1546px;top:182px" width="8" height="5" viewBox="0 0 8 5"><path d="M0 0H8L4 5Z" fill="#333"/></svg>
<svg style="left:1566px;top:176px" width="16" height="16" viewBox="0 0 16 16"><rect x="0.5" y="0.5" width="14" height="14" fill="none" stroke="#3a8dd0" stroke-dasharray="2 1.2"/><rect x="4" y="4" width="5" height="5" fill="#3a8dd0"/><path d="M8 8L15 15" stroke="#3a8dd0" stroke-width="1.4"/><path d="M7 7L12 8.5L8.5 12Z" fill="#3a8dd0"/></svg>
<svg style="left:1589px;top:176px" width="16" height="16" viewBox="0 0 16 16"><rect x="1.5" y="1.5" width="14" height="14" fill="none" stroke="#3a8dd0" stroke-dasharray="2 1.2"/><path d="M8 3H14V9Z" fill="#3a8dd0"/><path d="M1 0L6 8" stroke="#6b5a3a" stroke-width="1.2"/><path d="M3.5 7L8.5 7L9 15L5 15Z" fill="#f0b050"/></svg>
<div class="a" style="left:1611px;top:176px;width:1px;height:16px;background:#d0d0d0;"></div>
<svg style="left:1620px;top:179px" width="15" height="10" viewBox="0 0 15 10"><ellipse cx="7" cy="5" rx="7" ry="3.5" fill="none" stroke="#aaa" stroke-width="1.2"/><circle cx="7" cy="5" r="1.8" fill="#aaa"/><path d="M2 0L13 10" stroke="#aaa" stroke-width="1.2"/></svg>
<svg style="left:1641px;top:176px" width="17" height="16" viewBox="0 0 17 16"><path d="M10 3A4 4 0 1 0 7 9" fill="none" stroke="#3a8dd0" stroke-width="1.4"/><path d="M6 0L11 2L7 5Z" fill="#3a8dd0"/><ellipse cx="4" cy="13" rx="4" ry="2" fill="#3a8dd0"/><path d="M11 11L16 15" stroke="#888" stroke-width="1.5"/></svg>
<svg style="left:1665px;top:178px" width="17" height="13" viewBox="0 0 17 13"><rect x="0.5" y="0.5" width="16" height="12" fill="#fff" stroke="#3a8dd0" stroke-width="1.2"/><path d="M0.5 3H16.5" stroke="#3a8dd0"/><ellipse cx="8.5" cy="8" rx="4.5" ry="2.5" fill="none" stroke="#3a8dd0" stroke-width="1.2"/><circle cx="8.5" cy="8" r="1.3" fill="#3a8dd0"/></svg>
<svg style="left:1688px;top:182px" width="8" height="5" viewBox="0 0 8 5"><path d="M0 0H8L4 5Z" fill="#333"/></svg>
<div class="a" style="left:1706px;top:176px;width:1px;height:16px;background:#d0d0d0;"></div>
<svg style="left:1714px;top:176px" width="16" height="16" viewBox="0 0 16 16"><path d="M0.5 4.5L4.5 0.5H15.5V11.5L11.5 15.5H0.5Z" fill="none" stroke="#777"/><path d="M0.5 4.5H11.5V15.5M11.5 4.5L15.5 0.5M4.5 0.5V11.5H15.5M4.5 11.5L0.5 15.5" fill="none" stroke="#777" stroke-width="0.8"/><path d="M9 1L6 15" stroke="#3a8dd0"/></svg>
<svg style="left:1737px;top:182px" width="8" height="5" viewBox="0 0 8 5"><path d="M0 0H8L4 5Z" fill="#333"/></svg>
<div class="a" style="left:1754px;top:176px;width:1px;height:16px;background:#d0d0d0;"></div>
<div class="a" style="left:1761px;top:175px;width:37px;height:18px;background:linear-gradient(#cfe3f7,#8fbde8);border:1px solid #3c6fb5;border-radius:3px"></div>
<svg style="left:1766px;top:178px" width="13" height="12" viewBox="0 0 13 12"><rect x="0" y="3" width="4" height="6" fill="#3a8dd0"/><path d="M3 3L10 0V12L3 9Z" fill="#3a8dd0"/><path d="M11 3A3 3 0 0 1 11 9" fill="none" stroke="#3a8dd0"/></svg>
<svg style="left:1785px;top:182px" width="8" height="5" viewBox="0 0 8 5"><path d="M0 0H8L4 5Z" fill="#333"/></svg>
<svg style="left:1803px;top:176px" width="16" height="16" viewBox="0 0 16 16"><path d="M0.5 4.5L4.5 0.5H15.5V11.5L11.5 15.5H0.5Z" fill="#cde0f4" stroke="#3a8dd0"/><path d="M0.5 4.5H11.5V15.5M11.5 4.5L15.5 0.5" fill="none" stroke="#3a8dd0"/></svg>
<svg style="left:1826px;top:176px" width="16" height="16" viewBox="0 0 16 16"><path d="M0.5 4.5L4.5 0.5H15.5V11.5L11.5 15.5H0.5Z" fill="none" stroke="#3a8dd0" stroke-width="1.2"/><path d="M3 4.5H11.5V13" fill="none" stroke="#3a8dd0"/></svg>
<div class="a" style="left:1848px;top:175px;width:19px;height:18px;background:linear-gradient(#d5e6f7,#9fc6ec);border:1.5px solid #3a65a8;border-radius:3px"></div>
<svg style="left:1851px;top:178px" width="13" height="12" viewBox="0 0 13 12"><path d="M6.5 11V1M5 3L6.5 0.5L8 3" fill="none" stroke="#3a8dd0"/><path d="M6.5 11L1 7" stroke="#40a840"/><path d="M6.5 11L12 7" stroke="#e03070"/></svg>
<div class="a" style="left:1871px;top:175px;width:19px;height:18px;background:linear-gradient(#d5e6f7,#9fc6ec);border:1.5px solid #3a65a8;border-radius:3px"></div>
<svg style="left:1875px;top:178px" width="11" height="11" viewBox="0 0 11 11"><rect x="0" y="0" width="11" height="11" fill="#3a8dd0"/><path d="M3.7 0V11M7.3 0V11M0 3.7H11M0 7.3H11" stroke="#fff" stroke-width="0.9"/></svg>
<div class="a" style="left:1895px;top:176px;width:1px;height:16px;background:#d0d0d0;"></div>
<svg style="left:1104px;top:196px" width="15" height="17" viewBox="0 0 15 17"><path d="M0.5 3.5L2.5 0.5H11.5L13.5 3.5" fill="#ddd" stroke="#888"/><rect x="1.5" y="3.5" width="13" height="5" fill="#8bc0ea" stroke="#3a8dd0"/><circle cx="7.5" cy="13" r="3.2" fill="none" stroke="#e03070" stroke-width="1.4"/><path d="M5.5 15L9.5 11" stroke="#e03070" stroke-width="1.3"/></svg>
<svg style="left:1127px;top:196px" width="15" height="16" viewBox="0 0 15 16"><path d="M7 0.5C12 0.5 15 4 14 9C13 13 10 15.5 6 15.5C2 15.5 0.5 12 0.5 8C0.5 3 3 0.5 7 0.5Z" fill="#e0e0e0" stroke="#888"/><circle cx="6" cy="5" r="1.6" fill="#888"/><circle cx="10" cy="6" r="1.3" fill="#3a8dd0"/><circle cx="5" cy="11" r="1.2" fill="#e03070"/><circle cx="8" cy="11" r="1.2" fill="#f08030"/></svg>
<svg style="left:1149px;top:203px" width="8" height="5" viewBox="0 0 8 5"><path d="M0 0H8L4 5Z" fill="#333"/></svg>
<div class="a" style="left:1167px;top:197px;width:1px;height:16px;background:#d0d0d0;"></div>
<svg style="left:1176px;top:197px" width="15" height="15" viewBox="0 0 15 15"><circle cx="7.5" cy="7.5" r="6.5" fill="none" stroke="#3a8dd0" stroke-width="2.2"/><path d="M7.5 1L10 6M14 7.5L9 9M10 13.5L6 10M1.5 9L5 5.5" stroke="#3a8dd0" stroke-width="1.8"/></svg>
<svg style="left:1198px;top:203px" width="8" height="5" viewBox="0 0 8 5"><path d="M0 0H8L4 5Z" fill="#333"/></svg>
<svg style="left:1216px;top:198px" width="16" height="12" viewBox="0 0 16 12"><rect x="0" y="2.5" width="16" height="9.5" rx="1" fill="#3a8dd0"/><rect x="5" y="0" width="6" height="3" fill="#3a8dd0"/><circle cx="8" cy="7" r="3" fill="none" stroke="#fff" stroke-width="1.4"/></svg>
<svg style="left:1240px;top:196px" width="15" height="17" viewBox="0 0 15 17"><rect x="3.5" y="0.5" width="8" height="5" fill="#fff" stroke="#3a8dd0" stroke-width="1.2"/><rect x="0.5" y="5.5" width="14" height="7" rx="1.5" fill="#bcd6ee" stroke="#3a8dd0" stroke-width="1.2"/><rect x="3.5" y="10.5" width="8" height="6" fill="#fff" stroke="#3a8dd0" stroke-width="1.2"/></svg>
<div class="a" style="left:1891px;top:224px;width:17px;height:16px;background:#fff;border-radius:4px;box-shadow:0 0 2px #bbb;transform:rotate(-8deg)"></div>
<svg style="left:1893px;top:226px" width="13" height="11" viewBox="0 0 13 11"><rect x="0.5" y="0.5" width="12" height="10" rx="3" fill="#1b3f9a"/><path d="M3 2.5L9 5.5L3 8.5Z" fill="#f2e23a"/><rect x="8" y="2.5" width="3" height="6" fill="#3a78d8"/></svg>
<svg style="left:1097px;top:215px" width="819" height="615" viewBox="0 0 819 615"><path d="M361.5 49V566" stroke="#a8a8a8" stroke-width="1"/><path d="M563.5 49V566" stroke="#a8a8a8" stroke-width="1"/><path d="M154 157.5H660" stroke="#a8a8a8" stroke-width="1"/><path d="M154 360.5H660" stroke="#a8a8a8" stroke-width="1"/><path d="M197.4 70.3L188.9 78.9L187.8 79.7L186.4 80.0L185.0 79.8L183.9 79.0L175.5 70.4ZM234.7 70.0L226.2 78.7L225.1 79.5L223.7 79.8L222.3 79.5L221.1 78.7L212.8 70.1ZM272.0 69.7L263.5 78.4L262.3 79.2L261.0 79.5L259.6 79.2L258.4 78.4L250.1 69.9ZM309.3 69.4L300.8 78.1L299.6 78.9L298.2 79.2L296.9 78.9L295.7 78.2L287.3 69.6ZM346.5 69.2L338.1 77.8L336.9 78.7L335.5 78.9L334.1 78.7L333.0 77.9L324.6 69.3ZM383.8 68.9L375.3 77.6L374.2 78.4L372.8 78.7L371.4 78.4L370.3 77.6L361.9 69.1ZM421.1 68.6L412.6 77.3L411.4 78.1L410.1 78.4L408.7 78.1L407.5 77.3L399.2 68.8ZM458.4 68.3L449.9 77.0L448.7 77.8L447.4 78.1L446.0 77.9L444.8 77.1L436.4 68.5ZM495.6 68.1L487.2 76.8L486.0 77.6L484.6 77.8L483.3 77.6L482.1 76.8L473.7 68.2ZM532.9 67.8L524.5 76.5L523.3 77.3L521.9 77.6L520.5 77.3L519.4 76.5L511.0 68.0ZM570.2 67.5L561.7 76.2L560.6 77.0L559.2 77.3L557.8 77.0L556.7 76.2L548.3 67.7ZM607.5 67.3L599.0 75.9L597.8 76.7L596.5 77.0L595.1 76.8L593.9 76.0L585.5 67.4ZM644.7 67.0L636.3 75.7L635.1 76.5L633.7 76.8L632.4 76.5L631.2 75.7L622.8 67.1ZM174.0 94.0L174.2 76.2L180.3 82.5L181.1 83.7L181.3 85.1L181.0 86.5L180.2 87.7ZM207.4 97.7L206.3 98.5L204.9 98.8L203.5 98.5L202.4 97.8L192.4 87.6L191.7 86.4L191.4 85.0L191.7 83.6L192.5 82.4L202.6 72.1L203.7 71.3L205.1 71.0L206.5 71.3L207.6 72.0L217.6 82.2L218.3 83.4L218.6 84.8L218.3 86.2L217.5 87.4ZM188.6 116.8L187.5 117.6L186.1 117.9L184.7 117.6L183.6 116.8L173.9 106.9L174.0 101.2L183.8 91.1L184.9 90.3L186.3 90.0L187.7 90.3L188.8 91.1L198.8 101.3L199.5 102.5L199.8 103.9L199.5 105.3L198.7 106.5ZM244.7 97.4L243.6 98.3L242.2 98.5L240.8 98.3L239.7 97.5L229.7 87.3L228.9 86.1L228.7 84.7L229.0 83.3L229.8 82.1L239.8 71.8L241.0 71.0L242.4 70.7L243.8 71.0L244.9 71.8L254.8 81.9L255.6 83.1L255.9 84.5L255.6 85.9L254.8 87.1ZM225.9 116.5L224.8 117.3L223.4 117.6L222.0 117.3L220.9 116.5L210.9 106.4L210.2 105.2L209.9 103.8L210.2 102.4L211.0 101.2L221.1 90.9L222.2 90.1L223.6 89.8L225.0 90.0L226.1 90.8L236.1 101.0L236.8 102.2L237.1 103.6L236.8 105.0L236.0 106.2ZM282.0 97.2L280.8 98.0L279.5 98.3L278.1 98.0L276.9 97.2L267.0 87.0L266.2 85.9L266.0 84.5L266.2 83.0L267.0 81.9L277.1 71.5L278.3 70.7L279.7 70.4L281.0 70.7L282.2 71.5L292.1 81.7L292.9 82.9L293.2 84.3L292.9 85.7L292.1 86.9ZM263.2 116.2L262.1 117.0L260.7 117.3L259.3 117.1L258.2 116.3L248.2 106.1L247.5 104.9L247.2 103.5L247.5 102.1L248.3 100.9L258.3 90.6L259.5 89.8L260.9 89.5L262.3 89.8L263.4 90.6L273.4 100.7L274.1 101.9L274.4 103.3L274.1 104.7L273.3 105.9ZM319.3 96.9L318.1 97.7L316.8 98.0L315.4 97.7L314.2 96.9L304.3 86.8L303.5 85.6L303.2 84.2L303.5 82.8L304.3 81.6L314.4 71.3L315.6 70.5L316.9 70.2L318.3 70.4L319.5 71.2L329.4 81.4L330.2 82.6L330.4 84.0L330.2 85.4L329.4 86.6ZM300.5 116.0L299.4 116.8L298.0 117.0L296.6 116.8L295.5 116.0L285.5 105.8L284.7 104.6L284.5 103.2L284.8 101.8L285.6 100.6L295.6 90.3L296.8 89.5L298.2 89.2L299.5 89.5L300.7 90.3L310.6 100.4L311.4 101.6L311.7 103.0L311.4 104.4L310.6 105.6ZM356.6 96.6L355.4 97.4L354.0 97.7L352.7 97.5L351.5 96.7L341.6 86.5L340.8 85.3L340.5 83.9L340.8 82.5L341.6 81.3L351.7 71.0L352.8 70.2L354.2 69.9L355.6 70.2L356.7 71.0L366.7 81.1L367.5 82.3L367.7 83.7L367.4 85.1L366.7 86.3ZM337.8 115.7L336.7 116.5L335.3 116.8L333.9 116.5L332.8 115.7L322.8 105.6L322.0 104.4L321.8 103.0L322.1 101.6L322.8 100.4L332.9 90.0L334.1 89.2L335.5 89.0L336.8 89.2L338.0 90.0L347.9 100.2L348.7 101.4L349.0 102.8L348.7 104.2L347.9 105.4ZM393.9 96.4L392.7 97.2L391.3 97.4L390.0 97.2L388.8 96.4L378.8 86.2L378.1 85.0L377.8 83.6L378.1 82.2L378.9 81.0L388.9 70.7L390.1 69.9L391.5 69.6L392.9 69.9L394.0 70.7L404.0 80.8L404.7 82.0L405.0 83.4L404.7 84.8L403.9 86.0ZM375.1 115.4L374.0 116.2L372.6 116.5L371.2 116.2L370.1 115.4L360.1 105.3L359.3 104.1L359.1 102.7L359.3 101.3L360.1 100.1L370.2 89.8L371.4 89.0L372.7 88.7L374.1 88.9L375.3 89.7L385.2 99.9L386.0 101.1L386.3 102.5L386.0 103.9L385.2 105.1ZM431.2 96.1L430.0 96.9L428.6 97.2L427.3 96.9L426.1 96.1L416.1 86.0L415.4 84.8L415.1 83.4L415.4 82.0L416.2 80.8L426.2 70.4L427.4 69.6L428.8 69.3L430.1 69.6L431.3 70.4L441.2 80.6L442.0 81.8L442.3 83.2L442.0 84.6L441.2 85.8ZM412.4 115.1L411.3 115.9L409.9 116.2L408.5 116.0L407.4 115.2L397.4 105.0L396.6 103.8L396.4 102.4L396.6 101.0L397.4 99.8L407.5 89.5L408.7 88.7L410.0 88.4L411.4 88.7L412.6 89.5L422.5 99.6L423.3 100.8L423.6 102.2L423.3 103.6L422.5 104.8ZM468.5 95.8L467.3 96.6L465.9 96.9L464.5 96.6L463.4 95.8L453.4 85.7L452.6 84.5L452.4 83.1L452.7 81.7L453.4 80.5L463.5 70.2L464.7 69.4L466.0 69.1L467.4 69.3L468.6 70.1L478.5 80.3L479.3 81.5L479.6 82.9L479.3 84.3L478.5 85.5ZM449.7 114.9L448.6 115.7L447.2 116.0L445.8 115.7L444.7 114.9L434.7 104.7L433.9 103.5L433.6 102.1L433.9 100.7L434.7 99.5L444.8 89.2L445.9 88.4L447.3 88.1L448.7 88.4L449.8 89.2L459.8 99.4L460.6 100.5L460.9 101.9L460.6 103.4L459.8 104.6ZM505.7 95.5L504.6 96.3L503.2 96.6L501.8 96.4L500.7 95.6L490.7 85.4L489.9 84.2L489.7 82.8L489.9 81.4L490.7 80.2L500.8 69.9L501.9 69.1L503.3 68.8L504.7 69.1L505.8 69.9L515.8 80.0L516.6 81.2L516.9 82.6L516.6 84.0L515.8 85.2ZM487.0 114.6L485.9 115.4L484.5 115.7L483.1 115.4L482.0 114.6L472.0 104.5L471.2 103.3L470.9 101.9L471.2 100.5L472.0 99.3L482.1 89.0L483.2 88.1L484.6 87.9L486.0 88.1L487.1 88.9L497.1 99.1L497.9 100.3L498.1 101.7L497.9 103.1L497.1 104.3ZM543.0 95.3L541.9 96.1L540.5 96.4L539.1 96.1L538.0 95.3L528.0 85.1L527.2 83.9L526.9 82.5L527.2 81.1L528.0 79.9L538.0 69.6L539.2 68.8L540.6 68.5L542.0 68.8L543.1 69.6L553.1 79.8L553.9 80.9L554.1 82.3L553.9 83.8L553.1 85.0ZM524.3 114.3L523.2 115.1L521.8 115.4L520.4 115.1L519.3 114.4L509.3 104.2L508.5 103.0L508.2 101.6L508.5 100.2L509.3 99.0L519.3 88.7L520.5 87.9L521.9 87.6L523.3 87.9L524.4 88.6L534.4 98.8L535.2 100.0L535.4 101.4L535.2 102.8L534.4 104.0ZM580.3 95.0L579.2 95.8L577.8 96.1L576.4 95.8L575.2 95.0L565.3 84.9L564.5 83.7L564.2 82.3L564.5 80.9L565.3 79.7L575.3 69.4L576.5 68.5L577.9 68.3L579.2 68.5L580.4 69.3L590.4 79.5L591.1 80.7L591.4 82.1L591.1 83.5L590.4 84.7ZM561.6 114.1L560.5 114.9L559.1 115.1L557.7 114.9L556.6 114.1L546.6 103.9L545.8 102.7L545.5 101.3L545.8 99.9L546.6 98.7L556.6 88.4L557.8 87.6L559.2 87.3L560.5 87.6L561.7 88.4L571.7 98.5L572.5 99.7L572.7 101.1L572.4 102.5L571.7 103.7ZM617.6 94.7L616.4 95.5L615.1 95.8L613.7 95.5L612.5 94.8L602.5 84.6L601.8 83.4L601.5 82.0L601.8 80.6L602.6 79.4L612.6 69.1L613.8 68.3L615.1 68.0L616.5 68.3L617.7 69.0L627.7 79.2L628.4 80.4L628.7 81.8L628.4 83.2L627.6 84.4ZM598.9 113.8L597.8 114.6L596.4 114.9L595.0 114.6L593.8 113.8L583.9 103.6L583.1 102.5L582.8 101.1L583.1 99.6L583.9 98.5L593.9 88.1L595.1 87.3L596.4 87.0L597.8 87.3L599.0 88.1L609.0 98.3L609.7 99.5L610.0 100.9L609.7 102.3L609.0 103.5ZM646.6 91.2L639.8 84.3L639.1 83.1L638.8 81.7L639.1 80.3L639.8 79.1L646.6 72.1ZM636.2 113.5L635.1 114.3L633.7 114.6L632.3 114.3L631.1 113.5L621.2 103.4L620.4 102.2L620.1 100.8L620.4 99.4L621.2 98.2L631.2 87.9L632.4 87.1L633.7 86.8L635.1 87.0L636.3 87.8L646.3 98.0L646.6 98.5L646.6 102.7L646.3 103.2ZM173.7 131.9L173.9 114.1L180.0 120.3L180.7 121.5L181.0 122.9L180.7 124.3L179.9 125.5ZM207.1 135.6L206.0 136.4L204.6 136.6L203.2 136.4L202.1 135.6L192.1 125.4L191.4 124.2L191.1 122.8L191.4 121.4L192.2 120.2L202.3 109.9L203.4 109.1L204.8 108.8L206.2 109.1L207.3 109.9L217.3 120.0L218.1 121.2L218.3 122.6L218.0 124.0L217.2 125.2ZM188.3 154.6L187.2 155.4L185.8 155.7L184.4 155.4L183.3 154.6L173.6 144.8L173.7 139.0L183.5 129.0L184.6 128.2L186.0 127.9L187.4 128.1L188.5 128.9L198.5 139.1L199.3 140.3L199.5 141.7L199.2 143.1L198.4 144.3ZM244.5 135.3L243.3 136.1L241.9 136.4L240.5 136.1L239.4 135.3L229.4 125.1L228.7 124.0L228.4 122.6L228.7 121.2L229.5 120.0L239.6 109.6L240.7 108.8L242.1 108.5L243.5 108.8L244.6 109.6L254.6 119.8L255.4 121.0L255.6 122.4L255.3 123.8L254.5 125.0ZM225.7 154.3L224.5 155.1L223.1 155.4L221.7 155.2L220.6 154.4L210.6 144.2L209.9 143.0L209.6 141.6L209.9 140.2L210.7 139.0L220.8 128.7L221.9 127.9L223.3 127.6L224.7 127.9L225.9 128.7L235.8 138.8L236.6 140.0L236.8 141.4L236.5 142.8L235.8 144.0ZM281.8 135.0L280.6 135.8L279.2 136.1L277.8 135.8L276.7 135.0L266.7 124.9L266.0 123.7L265.7 122.3L266.0 120.9L266.8 119.7L276.9 109.4L278.0 108.6L279.4 108.3L280.8 108.5L281.9 109.3L291.9 119.5L292.7 120.7L292.9 122.1L292.6 123.5L291.8 124.7ZM263.0 154.1L261.8 154.9L260.4 155.2L259.1 154.9L257.9 154.1L248.0 143.9L247.2 142.7L246.9 141.3L247.2 139.9L248.0 138.7L258.1 128.4L259.2 127.6L260.6 127.3L262.0 127.6L263.2 128.4L273.1 138.6L273.9 139.7L274.1 141.1L273.9 142.6L273.1 143.7ZM319.1 134.7L317.9 135.5L316.5 135.8L315.2 135.6L314.0 134.8L304.0 124.6L303.3 123.4L303.0 122.0L303.3 120.6L304.1 119.4L314.2 109.1L315.3 108.3L316.7 108.0L318.1 108.3L319.2 109.1L329.2 119.2L330.0 120.4L330.2 121.8L329.9 123.2L329.2 124.4ZM300.3 153.8L299.1 154.6L297.8 154.9L296.4 154.6L295.2 153.8L285.3 143.7L284.5 142.5L284.2 141.1L284.5 139.7L285.3 138.5L295.4 128.2L296.6 127.3L297.9 127.1L299.3 127.3L300.5 128.1L310.4 138.3L311.2 139.5L311.4 140.9L311.2 142.3L310.4 143.5ZM356.4 134.5L355.2 135.3L353.8 135.6L352.5 135.3L351.3 134.5L341.3 124.3L340.6 123.1L340.3 121.7L340.6 120.3L341.4 119.1L351.4 108.8L352.6 108.0L354.0 107.7L355.4 108.0L356.5 108.8L366.5 119.0L367.3 120.1L367.5 121.5L367.2 123.0L366.5 124.2ZM337.6 153.5L336.4 154.3L335.1 154.6L333.7 154.3L332.5 153.6L322.6 143.4L321.8 142.2L321.5 140.8L321.8 139.4L322.6 138.2L332.7 127.9L333.9 127.1L335.2 126.8L336.6 127.1L337.8 127.8L347.7 138.0L348.5 139.2L348.8 140.6L348.5 142.0L347.7 143.2ZM393.7 134.2L392.5 135.0L391.1 135.3L389.8 135.0L388.6 134.2L378.6 124.1L377.9 122.9L377.6 121.5L377.9 120.1L378.7 118.9L388.7 108.6L389.9 107.7L391.3 107.5L392.7 107.7L393.8 108.5L403.8 118.7L404.6 119.9L404.8 121.3L404.5 122.7L403.8 123.9ZM374.9 153.2L373.8 154.1L372.4 154.3L371.0 154.1L369.9 153.3L359.9 143.1L359.1 141.9L358.9 140.5L359.1 139.1L359.9 137.9L370.0 127.6L371.2 126.8L372.5 126.5L373.9 126.8L375.1 127.6L385.0 137.7L385.8 138.9L386.1 140.3L385.8 141.7L385.0 142.9ZM431.0 133.9L429.8 134.7L428.5 135.0L427.1 134.7L425.9 134.0L416.0 123.8L415.2 122.6L414.9 121.2L415.2 119.8L416.0 118.6L426.0 108.3L427.2 107.5L428.6 107.2L430.0 107.5L431.1 108.2L441.1 118.4L441.9 119.6L442.1 121.0L441.8 122.4L441.1 123.6ZM412.3 153.0L411.1 153.8L409.7 154.1L408.3 153.8L407.2 153.0L397.2 142.8L396.4 141.7L396.2 140.3L396.4 138.8L397.2 137.7L407.3 127.3L408.5 126.5L409.8 126.2L411.2 126.5L412.4 127.3L422.3 137.5L423.1 138.7L423.4 140.1L423.1 141.5L422.3 142.7ZM468.3 133.6L467.1 134.5L465.8 134.7L464.4 134.5L463.2 133.7L453.3 123.5L452.5 122.3L452.2 120.9L452.5 119.5L453.3 118.3L463.3 108.0L464.5 107.2L465.9 106.9L467.2 107.2L468.4 108.0L478.4 118.1L479.2 119.3L479.4 120.7L479.1 122.1L478.4 123.3ZM449.6 152.7L448.4 153.5L447.0 153.8L445.7 153.5L444.5 152.7L434.5 142.6L433.7 141.4L433.5 140.0L433.8 138.6L434.5 137.4L444.6 127.1L445.8 126.3L447.1 126.0L448.5 126.2L449.7 127.0L459.7 137.2L460.4 138.4L460.7 139.8L460.4 141.2L459.6 142.4ZM505.6 133.4L504.4 134.2L503.1 134.5L501.7 134.2L500.5 133.4L490.6 123.2L489.8 122.1L489.5 120.7L489.8 119.2L490.6 118.1L500.6 107.7L501.8 106.9L503.2 106.6L504.5 106.9L505.7 107.7L515.7 117.9L516.5 119.1L516.7 120.5L516.4 121.9L515.7 123.1ZM486.9 152.4L485.7 153.2L484.3 153.5L483.0 153.3L481.8 152.5L471.8 142.3L471.1 141.1L470.8 139.7L471.1 138.3L471.9 137.1L481.9 126.8L483.1 126.0L484.5 125.7L485.8 126.0L487.0 126.8L497.0 136.9L497.7 138.1L498.0 139.5L497.7 140.9L496.9 142.1ZM542.9 133.1L541.8 133.9L540.4 134.2L539.0 133.9L537.8 133.1L527.9 123.0L527.1 121.8L526.8 120.4L527.1 119.0L527.9 117.8L537.9 107.5L539.1 106.7L540.5 106.4L541.8 106.6L543.0 107.4L553.0 117.6L553.8 118.8L554.0 120.2L553.7 121.6L553.0 122.8ZM524.2 152.2L523.0 153.0L521.7 153.3L520.3 153.0L519.1 152.2L509.1 142.0L508.4 140.8L508.1 139.4L508.4 138.0L509.2 136.8L519.2 126.5L520.4 125.7L521.8 125.4L523.1 125.7L524.3 126.5L534.3 136.7L535.0 137.8L535.3 139.2L535.0 140.6L534.3 141.8ZM580.2 132.8L579.1 133.6L577.7 133.9L576.3 133.7L575.2 132.9L565.2 122.7L564.4 121.5L564.1 120.1L564.4 118.7L565.2 117.5L575.2 107.2L576.4 106.4L577.8 106.1L579.1 106.4L580.3 107.2L590.3 117.3L591.1 118.5L591.3 119.9L591.1 121.3L590.3 122.5ZM561.5 151.9L560.4 152.7L559.0 153.0L557.6 152.7L556.4 151.9L546.5 141.8L545.7 140.6L545.4 139.2L545.7 137.8L546.5 136.6L556.5 126.2L557.7 125.4L559.1 125.2L560.4 125.4L561.6 126.2L571.6 136.4L572.4 137.6L572.6 139.0L572.4 140.4L571.6 141.6ZM617.5 132.6L616.4 133.4L615.0 133.7L613.6 133.4L612.5 132.6L602.5 122.4L601.7 121.2L601.4 119.8L601.7 118.4L602.5 117.2L612.5 106.9L613.7 106.1L615.1 105.8L616.4 106.1L617.6 106.9L627.6 117.1L628.4 118.2L628.6 119.6L628.4 121.0L627.6 122.2ZM598.8 151.6L597.7 152.4L596.3 152.7L594.9 152.4L593.8 151.7L583.8 141.5L583.0 140.3L582.7 138.9L583.0 137.5L583.8 136.3L593.8 126.0L595.0 125.2L596.4 124.9L597.7 125.2L598.9 125.9L608.9 136.1L609.7 137.3L609.9 138.7L609.7 140.1L608.9 141.3ZM646.5 129.0L639.8 122.2L639.0 121.0L638.7 119.6L639.0 118.2L639.8 117.0L646.6 110.0ZM636.2 151.3L635.0 152.2L633.6 152.4L632.2 152.2L631.1 151.4L621.1 141.2L620.3 140.0L620.0 138.6L620.3 137.2L621.1 136.0L631.1 125.7L632.3 124.9L633.7 124.6L635.0 124.9L636.2 125.7L646.2 135.8L646.5 136.3L646.5 140.6L646.2 141.0ZM173.4 169.7L173.6 151.9L179.7 158.2L180.4 159.3L180.7 160.7L180.4 162.1L179.6 163.3ZM206.9 173.4L205.7 174.2L204.3 174.5L202.9 174.2L201.8 173.4L191.8 163.3L191.1 162.1L190.8 160.7L191.1 159.3L191.9 158.1L202.0 147.7L203.1 146.9L204.5 146.7L205.9 146.9L207.1 147.7L217.0 157.9L217.8 159.1L218.0 160.5L217.7 161.9L217.0 163.1ZM188.0 192.4L186.9 193.2L185.5 193.5L184.1 193.3L183.0 192.5L173.3 182.6L173.4 176.8L183.2 166.8L184.3 166.0L185.7 165.7L187.1 166.0L188.2 166.8L198.2 176.9L199.0 178.1L199.2 179.5L198.9 180.9L198.1 182.1ZM244.2 173.1L243.0 173.9L241.6 174.2L240.3 173.9L239.1 173.2L229.2 163.0L228.4 161.8L228.1 160.4L228.4 159.0L229.2 157.8L239.3 147.5L240.5 146.7L241.8 146.4L243.2 146.7L244.4 147.4L254.3 157.6L255.1 158.8L255.4 160.2L255.1 161.6L254.3 162.8ZM225.4 192.2L224.2 193.0L222.8 193.3L221.5 193.0L220.3 192.2L210.4 182.0L209.6 180.8L209.3 179.4L209.6 178.0L210.4 176.8L220.5 166.5L221.7 165.7L223.0 165.4L224.4 165.7L225.6 166.5L235.5 176.7L236.3 177.8L236.6 179.2L236.3 180.7L235.5 181.9ZM281.5 172.8L280.3 173.6L279.0 173.9L277.6 173.7L276.4 172.9L266.5 162.7L265.7 161.5L265.4 160.1L265.7 158.7L266.5 157.5L276.6 147.2L277.8 146.4L279.2 146.1L280.5 146.4L281.7 147.2L291.6 157.3L292.4 158.5L292.7 159.9L292.4 161.3L291.6 162.5ZM262.7 191.9L261.5 192.7L260.2 193.0L258.8 192.7L257.6 191.9L247.7 181.8L246.9 180.6L246.7 179.2L246.9 177.8L247.7 176.6L257.8 166.3L259.0 165.5L260.4 165.2L261.7 165.4L262.9 166.2L272.8 176.4L273.6 177.6L273.9 179.0L273.6 180.4L272.8 181.6ZM318.8 172.6L317.7 173.4L316.3 173.7L314.9 173.4L313.8 172.6L303.8 162.4L303.0 161.3L302.8 159.9L303.1 158.4L303.8 157.2L313.9 146.9L315.1 146.1L316.5 145.8L317.8 146.1L319.0 146.9L329.0 157.1L329.7 158.3L330.0 159.7L329.7 161.1L328.9 162.3ZM300.1 191.6L298.9 192.4L297.5 192.7L296.1 192.4L295.0 191.7L285.0 181.5L284.2 180.3L284.0 178.9L284.3 177.5L285.1 176.3L295.1 166.0L296.3 165.2L297.7 164.9L299.1 165.2L300.2 166.0L310.2 176.1L310.9 177.3L311.2 178.7L310.9 180.1L310.1 181.3ZM356.2 172.3L355.0 173.1L353.6 173.4L352.2 173.1L351.1 172.3L341.1 162.2L340.4 161.0L340.1 159.6L340.4 158.2L341.2 157.0L351.2 146.7L352.4 145.9L353.8 145.6L355.2 145.8L356.3 146.6L366.3 156.8L367.0 158.0L367.3 159.4L367.0 160.8L366.2 162.0ZM337.4 191.4L336.2 192.2L334.8 192.4L333.5 192.2L332.3 191.4L322.4 181.2L321.6 180.0L321.3 178.6L321.6 177.2L322.4 176.0L332.5 165.7L333.6 164.9L335.0 164.6L336.4 164.9L337.5 165.7L347.5 175.8L348.3 177.0L348.5 178.4L348.3 179.8L347.5 181.0ZM393.5 172.0L392.3 172.8L391.0 173.1L389.6 172.9L388.4 172.1L378.4 161.9L377.7 160.7L377.4 159.3L377.7 157.9L378.5 156.7L388.5 146.4L389.7 145.6L391.1 145.3L392.5 145.6L393.6 146.4L403.6 156.5L404.4 157.7L404.6 159.1L404.4 160.5L403.6 161.7ZM374.7 191.1L373.6 191.9L372.2 192.2L370.8 191.9L369.7 191.1L359.7 181.0L358.9 179.8L358.6 178.4L358.9 177.0L359.7 175.8L369.8 165.4L371.0 164.6L372.3 164.4L373.7 164.6L374.9 165.4L384.8 175.6L385.6 176.8L385.9 178.2L385.6 179.6L384.8 180.8ZM430.8 171.8L429.7 172.6L428.3 172.9L426.9 172.6L425.7 171.8L415.8 161.6L415.0 160.4L414.7 159.0L415.0 157.6L415.8 156.4L425.9 146.1L427.0 145.3L428.4 145.0L429.8 145.3L430.9 146.1L440.9 156.3L441.7 157.4L442.0 158.8L441.7 160.2L440.9 161.4ZM412.1 190.8L410.9 191.6L409.5 191.9L408.2 191.6L407.0 190.9L397.0 180.7L396.2 179.5L396.0 178.1L396.3 176.7L397.0 175.5L407.1 165.2L408.3 164.4L409.7 164.1L411.0 164.3L412.2 165.1L422.2 175.3L422.9 176.5L423.2 177.9L422.9 179.3L422.1 180.5ZM468.2 171.5L467.0 172.3L465.6 172.6L464.2 172.3L463.1 171.5L453.1 161.4L452.3 160.2L452.1 158.8L452.3 157.4L453.1 156.2L463.2 145.8L464.3 145.0L465.7 144.8L467.1 145.0L468.3 145.8L478.2 156.0L479.0 157.2L479.3 158.6L479.0 160.0L478.2 161.2ZM449.4 190.5L448.2 191.3L446.9 191.6L445.5 191.4L444.3 190.6L434.3 180.4L433.6 179.2L433.3 177.8L433.6 176.4L434.4 175.2L444.4 164.9L445.6 164.1L447.0 163.8L448.4 164.1L449.5 164.9L459.5 175.0L460.3 176.2L460.5 177.6L460.3 179.0L459.5 180.2ZM505.5 171.2L504.3 172.0L502.9 172.3L501.6 172.0L500.4 171.3L490.4 161.1L489.6 159.9L489.4 158.5L489.7 157.1L490.4 155.9L500.5 145.6L501.7 144.8L503.0 144.5L504.4 144.8L505.6 145.5L515.6 155.7L516.3 156.9L516.6 158.3L516.3 159.7L515.5 160.9ZM486.7 190.3L485.6 191.1L484.2 191.4L482.8 191.1L481.7 190.3L471.7 180.1L470.9 179.0L470.6 177.6L470.9 176.1L471.7 174.9L481.8 164.6L482.9 163.8L484.3 163.5L485.7 163.8L486.8 164.6L496.8 174.8L497.6 176.0L497.9 177.4L497.6 178.8L496.8 180.0ZM542.8 170.9L541.6 171.8L540.3 172.0L538.9 171.8L537.7 171.0L527.7 160.8L527.0 159.6L526.7 158.2L527.0 156.8L527.8 155.6L537.8 145.3L539.0 144.5L540.3 144.2L541.7 144.5L542.9 145.3L552.9 155.4L553.7 156.6L553.9 158.0L553.6 159.4L552.9 160.6ZM524.1 190.0L522.9 190.8L521.5 191.1L520.2 190.8L519.0 190.0L509.0 179.9L508.2 178.7L508.0 177.3L508.2 175.9L509.0 174.7L519.1 164.4L520.3 163.6L521.6 163.3L523.0 163.5L524.2 164.3L534.2 174.5L534.9 175.7L535.2 177.1L534.9 178.5L534.1 179.7ZM580.1 170.7L579.0 171.5L577.6 171.8L576.2 171.5L575.1 170.7L565.1 160.5L564.3 159.4L564.0 158.0L564.3 156.5L565.1 155.3L575.1 145.0L576.3 144.2L577.7 143.9L579.0 144.2L580.2 145.0L590.2 155.2L591.0 156.4L591.2 157.8L591.0 159.2L590.2 160.4ZM561.4 189.7L560.3 190.5L558.9 190.8L557.5 190.6L556.3 189.8L546.3 179.6L545.6 178.4L545.3 177.0L545.6 175.6L546.4 174.4L556.4 164.1L557.6 163.3L559.0 163.0L560.3 163.3L561.5 164.1L571.5 174.2L572.3 175.4L572.5 176.8L572.3 178.2L571.5 179.4ZM617.5 170.4L616.3 171.2L614.9 171.5L613.5 171.2L612.4 170.4L602.4 160.3L601.6 159.1L601.3 157.7L601.6 156.3L602.4 155.1L612.4 144.8L613.6 144.0L615.0 143.7L616.4 143.9L617.5 144.7L627.5 154.9L628.3 156.1L628.6 157.5L628.3 158.9L627.5 160.1ZM598.8 189.5L597.6 190.3L596.2 190.6L594.8 190.3L593.7 189.5L583.7 179.3L582.9 178.1L582.6 176.7L582.9 175.3L583.7 174.1L593.7 163.8L594.9 163.0L596.3 162.7L597.7 163.0L598.8 163.8L608.8 174.0L609.6 175.1L609.9 176.5L609.6 177.9L608.8 179.1ZM646.5 166.9L639.7 160.0L638.9 158.8L638.7 157.4L638.9 156.0L639.7 154.8L646.5 147.8ZM636.1 189.2L634.9 190.0L633.6 190.3L632.2 190.0L631.0 189.2L621.0 179.1L620.2 177.9L620.0 176.5L620.2 175.1L621.0 173.9L631.1 163.5L632.2 162.7L633.6 162.5L635.0 162.7L636.1 163.5L646.1 173.7L646.5 174.2L646.5 178.4L646.1 178.9ZM173.1 207.5L173.2 189.7L179.4 196.0L180.1 197.2L180.4 198.6L180.1 200.0L179.3 201.2ZM206.6 211.2L205.4 212.0L204.0 212.3L202.6 212.0L201.5 211.3L191.5 201.1L190.8 199.9L190.5 198.5L190.8 197.1L191.6 195.9L201.7 185.6L202.9 184.8L204.2 184.5L205.6 184.8L206.8 185.5L216.7 195.7L217.5 196.9L217.7 198.3L217.5 199.7L216.7 200.9ZM187.7 230.3L186.6 231.1L185.2 231.4L183.8 231.1L182.7 230.3L173.0 220.4L173.0 214.7L182.9 204.6L184.0 203.8L185.4 203.5L186.8 203.8L187.9 204.6L197.9 214.8L198.7 216.0L198.9 217.4L198.6 218.8L197.9 220.0ZM243.9 210.9L242.7 211.8L241.4 212.0L240.0 211.8L238.8 211.0L228.9 200.8L228.1 199.6L227.8 198.2L228.1 196.8L228.9 195.6L239.0 185.3L240.2 184.5L241.6 184.2L242.9 184.5L244.1 185.3L254.1 195.4L254.8 196.6L255.1 198.0L254.8 199.4L254.0 200.6ZM225.1 230.0L223.9 230.8L222.6 231.1L221.2 230.8L220.0 230.0L210.1 219.9L209.3 218.7L209.0 217.3L209.3 215.9L210.1 214.7L220.2 204.4L221.4 203.6L222.8 203.3L224.1 203.5L225.3 204.3L235.2 214.5L236.0 215.7L236.3 217.1L236.0 218.5L235.2 219.7ZM281.3 210.7L280.1 211.5L278.7 211.8L277.3 211.5L276.2 210.7L266.2 200.5L265.5 199.4L265.2 198.0L265.5 196.6L266.3 195.4L276.4 185.0L277.5 184.2L278.9 183.9L280.3 184.2L281.4 185.0L291.4 195.2L292.2 196.4L292.4 197.8L292.1 199.2L291.4 200.4ZM262.5 229.7L261.3 230.5L259.9 230.8L258.5 230.6L257.4 229.8L247.4 219.6L246.6 218.4L246.4 217.0L246.7 215.6L247.5 214.4L257.6 204.1L258.7 203.3L260.1 203.0L261.5 203.3L262.6 204.1L272.6 214.2L273.4 215.4L273.6 216.8L273.3 218.2L272.6 219.4ZM318.6 210.4L317.4 211.2L316.1 211.5L314.7 211.2L313.5 210.4L303.6 200.3L302.8 199.1L302.5 197.7L302.8 196.3L303.6 195.1L313.7 184.8L314.9 184.0L316.2 183.7L317.6 183.9L318.8 184.7L328.7 194.9L329.5 196.1L329.8 197.5L329.5 198.9L328.7 200.1ZM299.8 229.5L298.6 230.3L297.3 230.6L295.9 230.3L294.7 229.5L284.8 219.3L284.0 218.1L283.7 216.7L284.0 215.3L284.8 214.1L294.9 203.8L296.1 203.0L297.4 202.7L298.8 203.0L300.0 203.8L309.9 214.0L310.7 215.1L311.0 216.5L310.7 218.0L309.9 219.1ZM356.0 210.1L354.8 210.9L353.4 211.2L352.0 211.0L350.9 210.2L340.9 200.0L340.1 198.8L339.9 197.4L340.2 196.0L340.9 194.8L351.0 184.5L352.2 183.7L353.6 183.4L354.9 183.7L356.1 184.5L366.1 194.6L366.8 195.8L367.1 197.2L366.8 198.6L366.0 199.8ZM337.2 229.2L336.0 230.0L334.6 230.3L333.3 230.0L332.1 229.2L322.1 219.1L321.3 217.9L321.1 216.5L321.4 215.1L322.2 213.9L332.2 203.6L333.4 202.7L334.8 202.5L336.2 202.7L337.3 203.5L347.3 213.7L348.1 214.9L348.3 216.3L348.0 217.7L347.3 218.9ZM393.3 209.9L392.1 210.7L390.8 211.0L389.4 210.7L388.2 209.9L378.2 199.7L377.5 198.5L377.2 197.1L377.5 195.7L378.3 194.5L388.4 184.2L389.5 183.4L390.9 183.1L392.3 183.4L393.4 184.2L403.4 194.4L404.2 195.5L404.4 196.9L404.2 198.4L403.4 199.6ZM374.5 228.9L373.4 229.7L372.0 230.0L370.6 229.7L369.4 229.0L359.5 218.8L358.7 217.6L358.4 216.2L358.7 214.8L359.5 213.6L369.6 203.3L370.8 202.5L372.1 202.2L373.5 202.5L374.7 203.2L384.6 213.4L385.4 214.6L385.7 216.0L385.4 217.4L384.6 218.6ZM430.7 209.6L429.5 210.4L428.1 210.7L426.7 210.4L425.6 209.6L415.6 199.5L414.8 198.3L414.6 196.9L414.8 195.5L415.6 194.3L425.7 184.0L426.9 183.2L428.2 182.9L429.6 183.1L430.8 183.9L440.7 194.1L441.5 195.3L441.8 196.7L441.5 198.1L440.7 199.3ZM411.9 228.7L410.7 229.5L409.3 229.7L408.0 229.5L406.8 228.7L396.8 218.5L396.1 217.3L395.8 215.9L396.1 214.5L396.9 213.3L406.9 203.0L408.1 202.2L409.5 201.9L410.8 202.2L412.0 203.0L422.0 213.1L422.8 214.3L423.0 215.7L422.8 217.1L422.0 218.3ZM468.0 209.3L466.8 210.1L465.5 210.4L464.1 210.2L462.9 209.4L452.9 199.2L452.2 198.0L451.9 196.6L452.2 195.2L453.0 194.0L463.0 183.7L464.2 182.9L465.6 182.6L466.9 182.9L468.1 183.6L478.1 193.8L478.9 195.0L479.1 196.4L478.9 197.8L478.1 199.0ZM449.2 228.4L448.1 229.2L446.7 229.5L445.3 229.2L444.2 228.4L434.2 218.2L433.4 217.1L433.1 215.7L433.4 214.3L434.2 213.1L444.3 202.7L445.4 201.9L446.8 201.6L448.2 201.9L449.4 202.7L459.3 212.9L460.1 214.1L460.4 215.5L460.1 216.9L459.3 218.1ZM505.3 209.1L504.2 209.9L502.8 210.2L501.4 209.9L500.3 209.1L490.3 198.9L489.5 197.7L489.2 196.3L489.5 194.9L490.3 193.7L500.4 183.4L501.5 182.6L502.9 182.3L504.3 182.6L505.4 183.4L515.4 193.5L516.2 194.7L516.5 196.1L516.2 197.5L515.4 198.7ZM486.6 228.1L485.4 228.9L484.1 229.2L482.7 228.9L481.5 228.1L471.5 218.0L470.8 216.8L470.5 215.4L470.8 214.0L471.6 212.8L481.6 202.5L482.8 201.7L484.2 201.4L485.5 201.6L486.7 202.4L496.7 212.6L497.5 213.8L497.7 215.2L497.5 216.6L496.7 217.8ZM542.7 208.8L541.5 209.6L540.2 209.9L538.8 209.6L537.6 208.8L527.6 198.7L526.8 197.5L526.6 196.1L526.9 194.7L527.6 193.5L537.7 183.1L538.9 182.3L540.2 182.1L541.6 182.3L542.8 183.1L552.8 193.3L553.5 194.5L553.8 195.9L553.5 197.3L552.8 198.5ZM524.0 227.8L522.8 228.6L521.4 228.9L520.0 228.7L518.9 227.9L508.9 217.7L508.1 216.5L507.8 215.1L508.1 213.7L508.9 212.5L519.0 202.2L520.1 201.4L521.5 201.1L522.9 201.4L524.0 202.2L534.0 212.3L534.8 213.5L535.1 214.9L534.8 216.3L534.0 217.5ZM580.0 208.5L578.9 209.3L577.5 209.6L576.1 209.3L575.0 208.6L565.0 198.4L564.2 197.2L563.9 195.8L564.2 194.4L565.0 193.2L575.0 182.9L576.2 182.1L577.6 181.8L578.9 182.1L580.1 182.8L590.1 193.0L590.9 194.2L591.2 195.6L590.9 197.0L590.1 198.2ZM561.3 227.6L560.1 228.4L558.8 228.7L557.4 228.4L556.2 227.6L546.2 217.4L545.5 216.3L545.2 214.8L545.5 213.4L546.2 212.2L556.3 201.9L557.5 201.1L558.8 200.8L560.2 201.1L561.4 201.9L571.4 212.1L572.2 213.2L572.4 214.7L572.2 216.1L571.4 217.3ZM617.4 208.2L616.2 209.1L614.8 209.3L613.5 209.1L612.3 208.3L602.3 198.1L601.5 196.9L601.3 195.5L601.5 194.1L602.3 192.9L612.4 182.6L613.5 181.8L614.9 181.5L616.3 181.8L617.4 182.6L627.4 192.7L628.2 193.9L628.5 195.3L628.2 196.7L627.4 197.9ZM598.7 227.3L597.5 228.1L596.1 228.4L594.8 228.1L593.6 227.3L583.6 217.2L582.8 216.0L582.5 214.6L582.8 213.2L583.6 212.0L593.6 201.7L594.8 200.9L596.2 200.6L597.6 200.8L598.7 201.6L608.7 211.8L609.5 213.0L609.8 214.4L609.5 215.8L608.7 217.0ZM646.4 204.7L639.6 197.8L638.9 196.7L638.6 195.3L638.9 193.8L639.7 192.6L646.4 185.7ZM636.0 227.0L634.9 227.8L633.5 228.1L632.1 227.9L630.9 227.1L620.9 216.9L620.2 215.7L619.9 214.3L620.2 212.9L620.9 211.7L631.0 201.4L632.2 200.6L633.5 200.3L634.9 200.6L636.1 201.4L646.1 211.5L646.4 212.0L646.4 216.2L646.1 216.7ZM172.8 245.4L172.9 227.6L179.1 233.8L179.8 235.0L180.1 236.4L179.8 237.8L179.0 239.0ZM206.3 249.1L205.1 249.9L203.7 250.1L202.4 249.9L201.2 249.1L191.2 238.9L190.5 237.7L190.2 236.3L190.5 234.9L191.3 233.7L201.4 223.4L202.6 222.6L203.9 222.3L205.3 222.6L206.5 223.4L216.4 233.5L217.2 234.7L217.5 236.1L217.2 237.5L216.4 238.7ZM187.4 268.1L186.3 268.9L184.9 269.2L183.5 268.9L182.4 268.1L172.7 258.3L172.7 252.5L182.6 242.5L183.7 241.7L185.1 241.4L186.5 241.6L187.6 242.4L197.6 252.6L198.4 253.8L198.6 255.2L198.3 256.6L197.6 257.8ZM243.6 248.8L242.5 249.6L241.1 249.9L239.7 249.6L238.6 248.8L228.6 238.7L227.8 237.5L227.6 236.1L227.9 234.7L228.6 233.5L238.7 223.1L239.9 222.3L241.3 222.1L242.7 222.3L243.8 223.1L253.8 233.3L254.6 234.5L254.8 235.9L254.5 237.3L253.7 238.5ZM224.8 267.8L223.6 268.6L222.3 268.9L220.9 268.7L219.7 267.9L209.8 257.7L209.0 256.5L208.7 255.1L209.0 253.7L209.8 252.5L219.9 242.2L221.1 241.4L222.5 241.1L223.9 241.4L225.0 242.2L235.0 252.3L235.7 253.5L236.0 254.9L235.7 256.3L234.9 257.5ZM281.0 248.5L279.8 249.3L278.5 249.6L277.1 249.3L275.9 248.5L266.0 238.4L265.2 237.2L264.9 235.8L265.2 234.4L266.0 233.2L276.1 222.9L277.3 222.1L278.6 221.8L280.0 222.1L281.2 222.8L291.1 233.0L291.9 234.2L292.2 235.6L291.9 237.0L291.1 238.2ZM262.2 267.6L261.0 268.4L259.6 268.7L258.3 268.4L257.1 267.6L247.1 257.4L246.4 256.2L246.1 254.8L246.4 253.4L247.2 252.2L257.3 241.9L258.5 241.1L259.8 240.8L261.2 241.1L262.4 241.9L272.3 252.1L273.1 253.2L273.4 254.6L273.1 256.1L272.3 257.3ZM318.4 248.2L317.2 249.0L315.8 249.3L314.5 249.1L313.3 248.3L303.3 238.1L302.6 236.9L302.3 235.5L302.6 234.1L303.4 232.9L313.5 222.6L314.6 221.8L316.0 221.5L317.4 221.8L318.5 222.6L328.5 232.7L329.3 233.9L329.5 235.3L329.3 236.7L328.5 237.9ZM299.6 267.3L298.4 268.1L297.0 268.4L295.6 268.1L294.5 267.3L284.5 257.2L283.7 256.0L283.5 254.6L283.8 253.2L284.6 252.0L294.7 241.7L295.8 240.9L297.2 240.6L298.6 240.8L299.7 241.6L309.7 251.8L310.5 253.0L310.7 254.4L310.5 255.8L309.7 257.0ZM355.7 248.0L354.6 248.8L353.2 249.1L351.8 248.8L350.7 248.0L340.7 237.8L339.9 236.7L339.6 235.3L339.9 233.8L340.7 232.6L350.8 222.3L352.0 221.5L353.4 221.2L354.7 221.5L355.9 222.3L365.9 232.5L366.6 233.7L366.9 235.1L366.6 236.5L365.8 237.7ZM337.0 267.0L335.8 267.8L334.4 268.1L333.0 267.9L331.9 267.1L321.9 256.9L321.1 255.7L320.9 254.3L321.1 252.9L321.9 251.7L332.0 241.4L333.2 240.6L334.6 240.3L335.9 240.6L337.1 241.4L347.1 251.5L347.8 252.7L348.1 254.1L347.8 255.5L347.0 256.7ZM393.1 247.7L391.9 248.5L390.6 248.8L389.2 248.5L388.0 247.7L378.0 237.6L377.3 236.4L377.0 235.0L377.3 233.6L378.1 232.4L388.2 222.1L389.3 221.3L390.7 221.0L392.1 221.2L393.2 222.0L403.2 232.2L404.0 233.4L404.3 234.8L404.0 236.2L403.2 237.4ZM374.3 266.8L373.2 267.6L371.8 267.9L370.4 267.6L369.2 266.8L359.3 256.6L358.5 255.4L358.2 254.0L358.5 252.6L359.3 251.4L369.4 241.1L370.6 240.3L371.9 240.0L373.3 240.3L374.5 241.1L384.4 251.3L385.2 252.4L385.5 253.8L385.2 255.2L384.4 256.4ZM430.5 247.4L429.3 248.2L427.9 248.5L426.6 248.3L425.4 247.5L415.4 237.3L414.6 236.1L414.4 234.7L414.7 233.3L415.4 232.1L425.5 221.8L426.7 221.0L428.1 220.7L429.4 221.0L430.6 221.8L440.6 231.9L441.4 233.1L441.6 234.5L441.3 235.9L440.6 237.1ZM411.7 266.5L410.5 267.3L409.2 267.6L407.8 267.3L406.6 266.5L396.6 256.4L395.9 255.2L395.6 253.8L395.9 252.4L396.7 251.2L406.7 240.8L407.9 240.0L409.3 239.8L410.7 240.0L411.8 240.8L421.8 251.0L422.6 252.2L422.9 253.6L422.6 255.0L421.8 256.2ZM467.8 247.2L466.7 248.0L465.3 248.3L463.9 248.0L462.8 247.2L452.8 237.0L452.0 235.8L451.7 234.4L452.0 233.0L452.8 231.8L462.9 221.5L464.0 220.7L465.4 220.4L466.8 220.7L468.0 221.5L477.9 231.7L478.7 232.8L479.0 234.2L478.7 235.7L477.9 236.9ZM449.1 266.2L447.9 267.0L446.5 267.3L445.2 267.0L444.0 266.3L434.0 256.1L433.2 254.9L433.0 253.5L433.2 252.1L434.0 250.9L444.1 240.6L445.3 239.8L446.7 239.5L448.0 239.8L449.2 240.5L459.2 250.7L460.0 251.9L460.2 253.3L459.9 254.7L459.2 255.9ZM505.2 246.9L504.0 247.7L502.7 248.0L501.3 247.7L500.1 246.9L490.1 236.8L489.4 235.6L489.1 234.2L489.4 232.8L490.2 231.6L500.2 221.3L501.4 220.5L502.8 220.2L504.1 220.4L505.3 221.2L515.3 231.4L516.1 232.6L516.3 234.0L516.1 235.4L515.3 236.6ZM486.5 266.0L485.3 266.8L483.9 267.0L482.5 266.8L481.4 266.0L471.4 255.8L470.6 254.6L470.3 253.2L470.6 251.8L471.4 250.6L481.5 240.3L482.6 239.5L484.0 239.2L485.4 239.5L486.6 240.3L496.6 250.4L497.3 251.6L497.6 253.0L497.3 254.4L496.5 255.6ZM542.6 246.6L541.4 247.4L540.0 247.7L538.7 247.5L537.5 246.7L527.5 236.5L526.7 235.3L526.5 233.9L526.7 232.5L527.5 231.3L537.6 221.0L538.7 220.2L540.1 219.9L541.5 220.2L542.7 220.9L552.7 231.1L553.4 232.3L553.7 233.7L553.4 235.1L552.6 236.3ZM523.8 265.7L522.7 266.5L521.3 266.8L519.9 266.5L518.8 265.7L508.8 255.5L508.0 254.4L507.7 253.0L508.0 251.6L508.8 250.4L518.8 240.0L520.0 239.2L521.4 238.9L522.8 239.2L523.9 240.0L533.9 250.2L534.7 251.4L535.0 252.8L534.7 254.2L533.9 255.4ZM580.0 246.4L578.8 247.2L577.4 247.5L576.0 247.2L574.9 246.4L564.9 236.2L564.1 235.0L563.8 233.6L564.1 232.2L564.9 231.0L574.9 220.7L576.1 219.9L577.5 219.6L578.8 219.9L580.0 220.7L590.0 230.8L590.8 232.0L591.1 233.4L590.8 234.8L590.0 236.0ZM561.2 265.4L560.0 266.2L558.7 266.5L557.3 266.2L556.1 265.4L546.1 255.3L545.3 254.1L545.1 252.7L545.4 251.3L546.1 250.1L556.2 239.8L557.4 239.0L558.7 238.7L560.1 238.9L561.3 239.7L571.3 249.9L572.1 251.1L572.3 252.5L572.1 253.9L571.3 255.1ZM617.3 246.1L616.1 246.9L614.8 247.2L613.4 246.9L612.2 246.1L602.2 236.0L601.4 234.8L601.2 233.4L601.5 232.0L602.2 230.8L612.3 220.4L613.5 219.6L614.8 219.4L616.2 219.6L617.4 220.4L627.4 230.6L628.2 231.8L628.4 233.2L628.2 234.6L627.4 235.8ZM598.6 265.1L597.4 265.9L596.0 266.2L594.7 266.0L593.5 265.2L583.5 255.0L582.7 253.8L582.4 252.4L582.7 251.0L583.5 249.8L593.6 239.5L594.7 238.7L596.1 238.4L597.5 238.7L598.6 239.5L608.7 249.6L609.4 250.8L609.7 252.2L609.4 253.6L608.6 254.8ZM646.4 242.6L639.6 235.7L638.8 234.5L638.5 233.1L638.8 231.7L639.6 230.5L646.4 223.5ZM636.0 264.9L634.8 265.7L633.4 266.0L632.0 265.7L630.9 264.9L620.9 254.7L620.1 253.6L619.8 252.2L620.1 250.7L620.9 249.5L630.9 239.2L632.1 238.4L633.5 238.1L634.8 238.4L636.0 239.2L646.0 249.4L646.3 249.8L646.3 254.1L646.0 254.6ZM172.5 283.2L172.6 265.4L178.8 271.6L179.5 272.8L179.8 274.2L179.5 275.6L178.7 276.8ZM206.0 286.9L204.8 287.7L203.4 288.0L202.1 287.7L200.9 286.9L190.9 276.8L190.2 275.6L189.9 274.2L190.2 272.8L191.0 271.6L201.1 261.2L202.3 260.4L203.6 260.2L205.0 260.4L206.2 261.2L216.1 271.4L216.9 272.6L217.2 274.0L216.9 275.4L216.1 276.6ZM187.1 305.9L186.0 306.7L184.6 307.0L183.2 306.8L182.1 306.0L172.4 296.1L172.4 290.3L182.3 280.3L183.4 279.5L184.8 279.2L186.2 279.5L187.3 280.3L197.3 290.4L198.1 291.6L198.3 293.0L198.1 294.4L197.3 295.6ZM243.4 286.6L242.2 287.4L240.8 287.7L239.4 287.4L238.3 286.7L228.3 276.5L227.6 275.3L227.3 273.9L227.6 272.5L228.4 271.3L238.5 261.0L239.6 260.2L241.0 259.9L242.4 260.2L243.6 260.9L253.5 271.1L254.3 272.3L254.6 273.7L254.3 275.1L253.5 276.3ZM224.5 305.7L223.4 306.5L222.0 306.8L220.6 306.5L219.4 305.7L209.5 295.5L208.7 294.4L208.5 292.9L208.7 291.5L209.5 290.3L219.6 280.0L220.8 279.2L222.2 278.9L223.6 279.2L224.7 280.0L234.7 290.2L235.5 291.3L235.7 292.8L235.4 294.2L234.7 295.4ZM280.8 286.3L279.6 287.2L278.2 287.4L276.8 287.2L275.7 286.4L265.7 276.2L264.9 275.0L264.7 273.6L265.0 272.2L265.7 271.0L275.8 260.7L277.0 259.9L278.4 259.6L279.8 259.9L280.9 260.7L290.9 270.8L291.7 272.0L291.9 273.4L291.7 274.8L290.9 276.0ZM261.9 305.4L260.8 306.2L259.4 306.5L258.0 306.2L256.8 305.4L246.9 295.3L246.1 294.1L245.8 292.7L246.1 291.3L246.9 290.1L257.0 279.8L258.2 279.0L259.6 278.7L261.0 278.9L262.1 279.7L272.1 289.9L272.9 291.1L273.1 292.5L272.8 293.9L272.0 295.1ZM318.1 286.1L317.0 286.9L315.6 287.2L314.2 286.9L313.1 286.1L303.1 275.9L302.3 274.8L302.0 273.4L302.3 272.0L303.1 270.8L313.2 260.4L314.4 259.6L315.8 259.3L317.1 259.6L318.3 260.4L328.3 270.6L329.1 271.8L329.3 273.2L329.0 274.6L328.2 275.8ZM299.3 305.1L298.2 305.9L296.8 306.2L295.4 306.0L294.2 305.2L284.3 295.0L283.5 293.8L283.2 292.4L283.5 291.0L284.3 289.8L294.4 279.5L295.6 278.7L297.0 278.4L298.3 278.7L299.5 279.5L309.5 289.6L310.2 290.8L310.5 292.2L310.2 293.6L309.4 294.8ZM355.5 285.8L354.4 286.6L353.0 286.9L351.6 286.6L350.4 285.8L340.5 275.7L339.7 274.5L339.4 273.1L339.7 271.7L340.5 270.5L350.6 260.2L351.8 259.4L353.1 259.1L354.5 259.3L355.7 260.1L365.7 270.3L366.4 271.5L366.7 272.9L366.4 274.3L365.6 275.5ZM336.7 304.9L335.6 305.7L334.2 306.0L332.8 305.7L331.6 304.9L321.7 294.7L320.9 293.5L320.6 292.1L320.9 290.7L321.7 289.5L331.8 279.2L333.0 278.4L334.3 278.1L335.7 278.4L336.9 279.2L346.9 289.4L347.6 290.5L347.9 291.9L347.6 293.4L346.8 294.5ZM392.9 285.5L391.8 286.3L390.4 286.6L389.0 286.4L387.8 285.6L377.8 275.4L377.1 274.2L376.8 272.8L377.1 271.4L377.9 270.2L388.0 259.9L389.1 259.1L390.5 258.8L391.9 259.1L393.1 259.9L403.0 270.0L403.8 271.2L404.1 272.6L403.8 274.0L403.0 275.2ZM374.1 304.6L373.0 305.4L371.6 305.7L370.2 305.4L369.0 304.6L359.1 294.5L358.3 293.3L358.0 291.9L358.3 290.5L359.1 289.3L369.2 279.0L370.3 278.2L371.7 277.9L373.1 278.1L374.3 278.9L384.2 289.1L385.0 290.3L385.3 291.7L385.0 293.1L384.2 294.3ZM430.3 285.3L429.1 286.1L427.8 286.4L426.4 286.1L425.2 285.3L415.2 275.1L414.5 274.0L414.2 272.6L414.5 271.1L415.3 269.9L425.3 259.6L426.5 258.8L427.9 258.5L429.3 258.8L430.4 259.6L440.4 269.8L441.2 271.0L441.5 272.4L441.2 273.8L440.4 275.0ZM411.5 304.3L410.4 305.1L409.0 305.4L407.6 305.2L406.4 304.4L396.4 294.2L395.7 293.0L395.4 291.6L395.7 290.2L396.5 289.0L406.6 278.7L407.7 277.9L409.1 277.6L410.5 277.9L411.6 278.6L421.6 288.8L422.4 290.0L422.7 291.4L422.4 292.8L421.6 294.0ZM467.7 285.0L466.5 285.8L465.1 286.1L463.8 285.8L462.6 285.0L452.6 274.9L451.8 273.7L451.6 272.3L451.8 270.9L452.6 269.7L462.7 259.4L463.9 258.6L465.3 258.3L466.6 258.5L467.8 259.3L477.8 269.5L478.6 270.7L478.8 272.1L478.6 273.5L477.8 274.7ZM448.9 304.1L447.8 304.9L446.4 305.2L445.0 304.9L443.8 304.1L433.8 293.9L433.1 292.7L432.8 291.3L433.1 289.9L433.9 288.7L443.9 278.4L445.1 277.6L446.5 277.3L447.9 277.6L449.0 278.4L459.0 288.6L459.8 289.7L460.1 291.1L459.8 292.5L459.0 293.7ZM505.1 284.7L503.9 285.5L502.5 285.8L501.2 285.6L500.0 284.8L490.0 274.6L489.2 273.4L489.0 272.0L489.2 270.6L490.0 269.4L500.1 259.1L501.3 258.3L502.6 258.0L504.0 258.3L505.2 259.1L515.2 269.2L515.9 270.4L516.2 271.8L515.9 273.2L515.2 274.4ZM486.3 303.8L485.1 304.6L483.8 304.9L482.4 304.6L481.2 303.8L471.2 293.7L470.5 292.5L470.2 291.1L470.5 289.7L471.2 288.5L481.3 278.1L482.5 277.3L483.9 277.1L485.3 277.3L486.4 278.1L496.4 288.3L497.2 289.5L497.5 290.9L497.2 292.3L496.4 293.5ZM542.5 284.5L541.3 285.3L539.9 285.6L538.5 285.3L537.4 284.5L527.4 274.3L526.6 273.1L526.3 271.7L526.6 270.3L527.4 269.1L537.5 258.8L538.6 258.0L540.0 257.7L541.4 258.0L542.5 258.8L552.6 269.0L553.3 270.1L553.6 271.5L553.3 273.0L552.5 274.2ZM523.7 303.5L522.5 304.3L521.2 304.6L519.8 304.3L518.6 303.6L508.6 293.4L507.8 292.2L507.6 290.8L507.9 289.4L508.6 288.2L518.7 277.9L519.9 277.1L521.3 276.8L522.6 277.1L523.8 277.8L533.8 288.0L534.6 289.2L534.8 290.6L534.6 292.0L533.8 293.2ZM579.9 284.2L578.7 285.0L577.3 285.3L575.9 285.0L574.8 284.2L564.8 274.1L564.0 272.9L563.7 271.5L564.0 270.1L564.8 268.9L574.8 258.6L576.0 257.8L577.4 257.5L578.8 257.7L579.9 258.5L589.9 268.7L590.7 269.9L591.0 271.3L590.7 272.7L589.9 273.9ZM561.1 303.3L559.9 304.1L558.6 304.3L557.2 304.1L556.0 303.3L546.0 293.1L545.2 291.9L545.0 290.5L545.2 289.1L546.0 287.9L556.1 277.6L557.3 276.8L558.6 276.5L560.0 276.8L561.2 277.6L571.2 287.7L572.0 288.9L572.2 290.3L572.0 291.7L571.2 292.9ZM617.2 283.9L616.1 284.7L614.7 285.0L613.3 284.8L612.2 284.0L602.1 273.8L601.4 272.6L601.1 271.2L601.4 269.8L602.2 268.6L612.2 258.3L613.4 257.5L614.8 257.2L616.1 257.5L617.3 258.3L627.3 268.4L628.1 269.6L628.4 271.0L628.1 272.4L627.3 273.6ZM598.5 303.0L597.3 303.8L596.0 304.1L594.6 303.8L593.4 303.0L583.4 292.9L582.6 291.7L582.4 290.3L582.6 288.9L583.4 287.7L593.5 277.3L594.6 276.5L596.0 276.2L597.4 276.5L598.6 277.3L608.6 287.5L609.4 288.7L609.6 290.1L609.4 291.5L608.6 292.7ZM646.3 280.4L639.5 273.5L638.7 272.3L638.5 270.9L638.7 269.5L639.5 268.3L646.3 261.4ZM635.9 302.7L634.7 303.5L633.4 303.8L632.0 303.5L630.8 302.8L620.8 292.6L620.0 291.4L619.7 290.0L620.0 288.6L620.8 287.4L630.9 277.1L632.0 276.3L633.4 276.0L634.8 276.2L635.9 277.0L646.0 287.2L646.3 287.7L646.3 291.9L646.0 292.4ZM172.2 321.0L172.3 303.2L178.5 309.5L179.2 310.7L179.5 312.1L179.2 313.5L178.4 314.7ZM205.7 324.7L204.5 325.5L203.1 325.8L201.8 325.5L200.6 324.8L190.6 314.6L189.9 313.4L189.6 312.0L189.9 310.6L190.7 309.4L200.8 299.1L202.0 298.3L203.4 298.0L204.7 298.3L205.9 299.0L215.9 309.2L216.6 310.4L216.9 311.8L216.6 313.2L215.8 314.4ZM186.8 343.8L185.7 344.6L184.3 344.9L182.9 344.6L181.8 343.8L172.1 333.9L172.1 328.2L182.0 318.1L183.1 317.3L184.5 317.0L185.9 317.3L187.0 318.1L197.0 328.3L197.8 329.4L198.0 330.9L197.8 332.3L197.0 333.5ZM243.1 324.5L241.9 325.3L240.5 325.5L239.2 325.3L238.0 324.5L228.0 314.3L227.3 313.1L227.0 311.7L227.3 310.3L228.1 309.1L238.2 298.8L239.4 298.0L240.8 297.7L242.1 298.0L243.3 298.8L253.3 308.9L254.0 310.1L254.3 311.5L254.0 312.9L253.2 314.1ZM224.3 343.5L223.1 344.3L221.7 344.6L220.3 344.3L219.2 343.5L209.2 333.4L208.4 332.2L208.2 330.8L208.4 329.4L209.2 328.2L219.4 317.9L220.5 317.1L221.9 316.8L223.3 317.0L224.5 317.8L234.4 328.0L235.2 329.2L235.5 330.6L235.2 332.0L234.4 333.2ZM280.5 324.2L279.3 325.0L278.0 325.3L276.6 325.0L275.4 324.2L265.4 314.1L264.7 312.9L264.4 311.5L264.7 310.1L265.5 308.9L275.6 298.5L276.8 297.7L278.1 297.5L279.5 297.7L280.7 298.5L290.7 308.7L291.4 309.9L291.7 311.3L291.4 312.7L290.6 313.9ZM261.7 343.2L260.5 344.0L259.1 344.3L257.7 344.1L256.6 343.3L246.6 333.1L245.8 331.9L245.6 330.5L245.9 329.1L246.6 327.9L256.8 317.6L257.9 316.8L259.3 316.5L260.7 316.8L261.9 317.6L271.8 327.7L272.6 328.9L272.9 330.3L272.6 331.7L271.8 332.9ZM317.9 323.9L316.7 324.7L315.4 325.0L314.0 324.7L312.8 324.0L302.8 313.8L302.1 312.6L301.8 311.2L302.1 309.8L302.9 308.6L313.0 298.3L314.2 297.5L315.5 297.2L316.9 297.5L318.1 298.2L328.1 308.4L328.8 309.6L329.1 311.0L328.8 312.4L328.0 313.6ZM299.1 343.0L297.9 343.8L296.5 344.1L295.2 343.8L294.0 343.0L284.0 332.8L283.2 331.6L283.0 330.2L283.3 328.8L284.1 327.6L294.2 317.3L295.3 316.5L296.7 316.2L298.1 316.5L299.3 317.3L309.2 327.5L310.0 328.6L310.3 330.0L310.0 331.5L309.2 332.7ZM355.3 323.6L354.2 324.5L352.8 324.7L351.4 324.5L350.2 323.7L340.2 313.5L339.5 312.3L339.2 310.9L339.5 309.5L340.3 308.3L350.4 298.0L351.5 297.2L352.9 296.9L354.3 297.2L355.5 298.0L365.5 308.1L366.2 309.3L366.5 310.7L366.2 312.1L365.4 313.3ZM336.5 342.7L335.3 343.5L334.0 343.8L332.6 343.5L331.4 342.7L321.4 332.6L320.7 331.4L320.4 330.0L320.7 328.6L321.5 327.4L331.6 317.1L332.7 316.3L334.1 316.0L335.5 316.2L336.7 317.0L346.6 327.2L347.4 328.4L347.7 329.8L347.4 331.2L346.6 332.4ZM392.7 323.4L391.6 324.2L390.2 324.5L388.8 324.2L387.6 323.4L377.6 313.2L376.9 312.1L376.6 310.7L376.9 309.2L377.7 308.1L387.8 297.7L388.9 296.9L390.3 296.6L391.7 296.9L392.9 297.7L402.8 307.9L403.6 309.1L403.9 310.5L403.6 311.9L402.8 313.1ZM373.9 342.4L372.8 343.2L371.4 343.5L370.0 343.3L368.8 342.5L358.8 332.3L358.1 331.1L357.8 329.7L358.1 328.3L358.9 327.1L369.0 316.8L370.1 316.0L371.5 315.7L372.9 316.0L374.1 316.8L384.1 326.9L384.8 328.1L385.1 329.5L384.8 330.9L384.0 332.1ZM430.1 323.1L429.0 323.9L427.6 324.2L426.2 323.9L425.0 323.1L415.1 313.0L414.3 311.8L414.0 310.4L414.3 309.0L415.1 307.8L425.2 297.5L426.3 296.7L427.7 296.4L429.1 296.6L430.3 297.4L440.2 307.6L441.0 308.8L441.3 310.2L441.0 311.6L440.2 312.8ZM411.3 342.2L410.2 343.0L408.8 343.3L407.4 343.0L406.2 342.2L396.3 332.0L395.5 330.8L395.2 329.4L395.5 328.0L396.3 326.8L406.4 316.5L407.5 315.7L408.9 315.4L410.3 315.7L411.5 316.5L421.5 326.7L422.2 327.8L422.5 329.2L422.2 330.7L421.4 331.9ZM467.5 322.8L466.4 323.6L465.0 323.9L463.6 323.7L462.5 322.9L452.5 312.7L451.7 311.5L451.4 310.1L451.7 308.7L452.5 307.5L462.6 297.2L463.7 296.4L465.1 296.1L466.5 296.4L467.6 297.2L477.6 307.3L478.4 308.5L478.7 309.9L478.4 311.3L477.6 312.5ZM448.8 341.9L447.6 342.7L446.2 343.0L444.8 342.7L443.7 341.9L433.7 331.8L432.9 330.6L432.6 329.2L432.9 327.8L433.7 326.6L443.8 316.3L444.9 315.5L446.3 315.2L447.7 315.4L448.9 316.2L458.9 326.4L459.6 327.6L459.9 329.0L459.6 330.4L458.8 331.6ZM505.0 322.6L503.8 323.4L502.4 323.7L501.0 323.4L499.9 322.6L489.9 312.4L489.1 311.3L488.8 309.9L489.1 308.4L489.9 307.2L500.0 296.9L501.1 296.1L502.5 295.8L503.9 296.1L505.0 296.9L515.0 307.1L515.8 308.3L516.1 309.7L515.8 311.1L515.0 312.3ZM486.2 341.6L485.0 342.4L483.6 342.7L482.2 342.5L481.1 341.7L471.1 331.5L470.3 330.3L470.0 328.9L470.3 327.5L471.1 326.3L481.2 316.0L482.4 315.2L483.7 314.9L485.1 315.2L486.3 316.0L496.3 326.1L497.1 327.3L497.3 328.7L497.0 330.1L496.3 331.3ZM542.4 322.3L541.2 323.1L539.8 323.4L538.4 323.1L537.3 322.3L527.3 312.2L526.5 311.0L526.2 309.6L526.5 308.2L527.3 307.0L537.3 296.7L538.5 295.9L539.9 295.6L541.3 295.8L542.4 296.6L552.4 306.8L553.2 308.0L553.5 309.4L553.2 310.8L552.4 312.0ZM523.6 341.4L522.4 342.2L521.0 342.5L519.7 342.2L518.5 341.4L508.5 331.2L507.7 330.0L507.4 328.6L507.7 327.2L508.5 326.0L518.6 315.7L519.8 314.9L521.1 314.6L522.5 314.9L523.7 315.7L533.7 325.9L534.5 327.0L534.7 328.4L534.5 329.8L533.7 331.0ZM579.8 322.0L578.6 322.8L577.2 323.1L575.8 322.9L574.7 322.1L564.7 311.9L563.9 310.7L563.6 309.3L563.9 307.9L564.7 306.7L574.7 296.4L575.9 295.6L577.3 295.3L578.7 295.6L579.8 296.4L589.8 306.5L590.6 307.7L590.9 309.1L590.6 310.5L589.8 311.7ZM561.0 341.1L559.8 341.9L558.5 342.2L557.1 341.9L555.9 341.1L545.9 331.0L545.1 329.8L544.9 328.4L545.1 327.0L545.9 325.8L556.0 315.5L557.2 314.6L558.5 314.4L559.9 314.6L561.1 315.4L571.1 325.6L571.9 326.8L572.1 328.2L571.9 329.6L571.1 330.8ZM617.2 321.8L616.0 322.6L614.6 322.9L613.2 322.6L612.1 321.8L602.1 311.6L601.3 310.5L601.0 309.0L601.3 307.6L602.1 306.4L612.1 296.1L613.3 295.3L614.7 295.0L616.1 295.3L617.2 296.1L627.2 306.3L628.0 307.4L628.3 308.9L628.0 310.3L627.2 311.5ZM598.4 340.8L597.3 341.6L595.9 341.9L594.5 341.7L593.3 340.9L583.3 330.7L582.5 329.5L582.3 328.1L582.5 326.7L583.3 325.5L593.4 315.2L594.6 314.4L595.9 314.1L597.3 314.4L598.5 315.1L608.5 325.3L609.3 326.5L609.6 327.9L609.3 329.3L608.5 330.5ZM646.2 318.2L639.5 311.4L638.7 310.2L638.4 308.8L638.7 307.4L639.5 306.2L646.3 299.2ZM635.8 340.6L634.7 341.4L633.3 341.7L631.9 341.4L630.7 340.6L620.7 330.4L619.9 329.2L619.7 327.8L619.9 326.4L620.7 325.2L630.8 314.9L632.0 314.1L633.3 313.8L634.7 314.1L635.9 314.9L645.9 325.0L646.2 325.5L646.2 329.8L645.9 330.2ZM171.9 358.9L172.0 341.0L178.2 347.3L178.9 348.5L179.2 349.9L178.9 351.3L178.1 352.5ZM205.4 362.6L204.2 363.4L202.9 363.6L201.5 363.4L200.3 362.6L190.3 352.4L189.6 351.2L189.3 349.8L189.6 348.4L190.4 347.2L200.5 336.9L201.7 336.1L203.1 335.8L204.4 336.1L205.6 336.9L215.6 347.0L216.3 348.2L216.6 349.6L216.3 351.0L215.5 352.2ZM186.5 381.6L185.4 382.4L184.0 382.7L182.6 382.4L181.4 381.6L171.8 371.8L171.8 366.0L181.7 356.0L182.8 355.2L184.2 354.9L185.6 355.1L186.7 355.9L196.7 366.1L197.5 367.3L197.7 368.7L197.5 370.1L196.7 371.3ZM242.8 362.3L241.7 363.1L240.3 363.4L238.9 363.1L237.7 362.3L227.8 352.2L227.0 351.0L226.7 349.6L227.0 348.2L227.8 347.0L237.9 336.6L239.1 335.8L240.5 335.6L241.9 335.8L243.0 336.6L253.0 346.8L253.8 348.0L254.0 349.4L253.7 350.8L253.0 352.0ZM224.0 381.3L222.8 382.1L221.4 382.4L220.0 382.2L218.9 381.4L208.9 371.2L208.1 370.0L207.9 368.6L208.2 367.2L209.0 366.0L219.1 355.7L220.3 354.9L221.6 354.6L223.0 354.9L224.2 355.7L234.1 365.8L234.9 367.0L235.2 368.4L234.9 369.8L234.1 371.0ZM280.3 362.0L279.1 362.8L277.7 363.1L276.3 362.8L275.2 362.1L265.2 351.9L264.4 350.7L264.1 349.3L264.4 347.9L265.2 346.7L275.3 336.4L276.5 335.6L277.9 335.3L279.3 335.6L280.4 336.3L290.4 346.5L291.2 347.7L291.4 349.1L291.2 350.5L290.4 351.7ZM261.4 381.1L260.2 381.9L258.9 382.2L257.5 381.9L256.3 381.1L246.3 370.9L245.6 369.7L245.3 368.3L245.6 366.9L246.4 365.7L256.5 355.4L257.7 354.6L259.1 354.3L260.4 354.6L261.6 355.4L271.6 365.6L272.3 366.7L272.6 368.2L272.3 369.6L271.5 370.8ZM317.7 361.8L316.5 362.6L315.1 362.8L313.8 362.6L312.6 361.8L302.6 351.6L301.8 350.4L301.6 349.0L301.9 347.6L302.6 346.4L312.7 336.1L313.9 335.3L315.3 335.0L316.7 335.3L317.8 336.1L327.8 346.2L328.6 347.4L328.9 348.8L328.6 350.2L327.8 351.4ZM298.9 380.8L297.7 381.6L296.3 381.9L294.9 381.6L293.8 380.8L283.8 370.7L283.0 369.5L282.7 368.1L283.0 366.7L283.8 365.5L293.9 355.2L295.1 354.4L296.5 354.1L297.9 354.3L299.0 355.1L309.0 365.3L309.8 366.5L310.0 367.9L309.8 369.3L309.0 370.5ZM355.1 361.5L353.9 362.3L352.6 362.6L351.2 362.3L350.0 361.5L340.0 351.4L339.3 350.2L339.0 348.8L339.3 347.4L340.1 346.2L350.2 335.8L351.3 335.0L352.7 334.8L354.1 335.0L355.3 335.8L365.2 346.0L366.0 347.2L366.3 348.6L366.0 350.0L365.2 351.2ZM336.3 380.5L335.1 381.3L333.7 381.6L332.4 381.4L331.2 380.6L321.2 370.4L320.4 369.2L320.2 367.8L320.4 366.4L321.2 365.2L331.3 354.9L332.5 354.1L333.9 353.8L335.3 354.1L336.4 354.9L346.4 365.0L347.2 366.2L347.5 367.6L347.2 369.0L346.4 370.2ZM392.5 361.2L391.4 362.0L390.0 362.3L388.6 362.0L387.4 361.3L377.4 351.1L376.7 349.9L376.4 348.5L376.7 347.1L377.5 345.9L387.6 335.6L388.7 334.8L390.1 334.5L391.5 334.8L392.7 335.5L402.7 345.7L403.4 346.9L403.7 348.3L403.4 349.7L402.6 350.9ZM373.7 380.3L372.6 381.1L371.2 381.4L369.8 381.1L368.6 380.3L358.6 370.1L357.9 368.9L357.6 367.5L357.9 366.1L358.7 364.9L368.8 354.6L369.9 353.8L371.3 353.5L372.7 353.8L373.9 354.6L383.9 364.8L384.6 365.9L384.9 367.4L384.6 368.8L383.8 370.0ZM430.0 360.9L428.8 361.8L427.4 362.0L426.0 361.8L424.9 361.0L414.9 350.8L414.1 349.6L413.8 348.2L414.1 346.8L414.9 345.6L425.0 335.3L426.2 334.5L427.5 334.2L428.9 334.5L430.1 335.3L440.1 345.4L440.9 346.6L441.1 348.0L440.8 349.4L440.1 350.6ZM411.2 380.0L410.0 380.8L408.6 381.1L407.2 380.8L406.1 380.0L396.1 369.9L395.3 368.7L395.0 367.3L395.3 365.9L396.1 364.7L406.2 354.4L407.4 353.6L408.7 353.3L410.1 353.5L411.3 354.3L421.3 364.5L422.1 365.7L422.3 367.1L422.0 368.5L421.3 369.7ZM467.4 360.7L466.2 361.5L464.8 361.8L463.5 361.5L462.3 360.7L452.3 350.5L451.5 349.4L451.2 348.0L451.5 346.6L452.3 345.4L462.4 335.0L463.6 334.2L465.0 333.9L466.3 334.2L467.5 335.0L477.5 345.2L478.3 346.4L478.5 347.8L478.3 349.2L477.5 350.4ZM448.6 379.7L447.4 380.5L446.0 380.8L444.7 380.6L443.5 379.8L433.5 369.6L432.7 368.4L432.5 367.0L432.7 365.6L433.5 364.4L443.6 354.1L444.8 353.3L446.2 353.0L447.5 353.3L448.7 354.1L458.7 364.2L459.5 365.4L459.8 366.8L459.5 368.2L458.7 369.4ZM504.8 360.4L503.6 361.2L502.3 361.5L500.9 361.2L499.7 360.5L489.7 350.3L488.9 349.1L488.7 347.7L488.9 346.3L489.7 345.1L499.8 334.8L501.0 334.0L502.4 333.7L503.7 333.9L504.9 334.7L514.9 344.9L515.7 346.1L516.0 347.5L515.7 348.9L514.9 350.1ZM486.0 379.5L484.9 380.3L483.5 380.6L482.1 380.3L480.9 379.5L470.9 369.3L470.2 368.1L469.9 366.7L470.2 365.3L470.9 364.1L481.0 353.8L482.2 353.0L483.6 352.7L485.0 353.0L486.1 353.8L496.1 364.0L496.9 365.1L497.2 366.5L496.9 368.0L496.1 369.2ZM542.2 360.1L541.1 361.0L539.7 361.2L538.3 361.0L537.1 360.2L527.1 350.0L526.4 348.8L526.1 347.4L526.4 346.0L527.2 344.8L537.2 334.5L538.4 333.7L539.8 333.4L541.2 333.7L542.3 334.5L552.3 344.6L553.1 345.8L553.4 347.2L553.1 348.6L552.3 349.8ZM523.5 379.2L522.3 380.0L520.9 380.3L519.5 380.0L518.4 379.2L508.4 369.1L507.6 367.9L507.3 366.5L507.6 365.1L508.4 363.9L518.5 353.6L519.6 352.8L521.0 352.5L522.4 352.7L523.6 353.5L533.6 363.7L534.3 364.9L534.6 366.3L534.3 367.7L533.6 368.9ZM579.7 359.9L578.5 360.7L577.1 361.0L575.7 360.7L574.6 359.9L564.6 349.7L563.8 348.6L563.5 347.2L563.8 345.7L564.6 344.6L574.6 334.2L575.8 333.4L577.2 333.1L578.6 333.4L579.7 334.2L589.8 344.4L590.5 345.6L590.8 347.0L590.5 348.4L589.7 349.6ZM560.9 378.9L559.7 379.7L558.4 380.0L557.0 379.8L555.8 379.0L545.8 368.8L545.0 367.6L544.7 366.2L545.0 364.8L545.8 363.6L555.9 353.3L557.1 352.5L558.4 352.2L559.8 352.5L561.0 353.3L571.0 363.4L571.8 364.6L572.0 366.0L571.8 367.4L571.0 368.6ZM617.1 359.6L615.9 360.4L614.5 360.7L613.2 360.4L612.0 359.6L602.0 349.5L601.2 348.3L600.9 346.9L601.2 345.5L602.0 344.3L612.1 334.0L613.2 333.2L614.6 332.9L616.0 333.1L617.1 333.9L627.2 344.1L628.0 345.3L628.2 346.7L627.9 348.1L627.2 349.3ZM598.3 378.7L597.2 379.5L595.8 379.8L594.4 379.5L593.2 378.7L583.2 368.5L582.4 367.3L582.2 365.9L582.4 364.5L583.2 363.3L593.3 353.0L594.5 352.2L595.9 351.9L597.2 352.2L598.4 353.0L608.4 363.2L609.2 364.3L609.5 365.7L609.2 367.2L608.4 368.4ZM646.2 356.1L639.4 349.2L638.6 348.0L638.3 346.6L638.6 345.2L639.4 344.0L646.2 337.0ZM635.8 378.4L634.6 379.2L633.2 379.5L631.8 379.2L630.7 378.4L620.7 368.3L619.9 367.1L619.6 365.7L619.9 364.3L620.7 363.1L630.7 352.8L631.9 352.0L633.3 351.7L634.7 351.9L635.8 352.7L645.9 362.9L646.2 363.4L646.2 367.6L645.8 368.1ZM171.6 396.7L171.7 378.9L177.8 385.1L178.6 386.3L178.9 387.7L178.6 389.1L177.8 390.3ZM205.1 400.4L203.9 401.2L202.6 401.5L201.2 401.2L200.0 400.4L190.0 390.3L189.3 389.1L189.0 387.7L189.3 386.3L190.1 385.1L200.2 374.7L201.4 373.9L202.8 373.7L204.2 373.9L205.3 374.7L215.3 384.9L216.1 386.1L216.3 387.5L216.0 388.9L215.2 390.1ZM186.2 419.4L185.1 420.2L183.7 420.5L182.3 420.3L181.1 419.5L171.5 409.6L171.5 403.8L181.4 393.8L182.5 393.0L183.9 392.7L185.3 393.0L186.4 393.8L196.4 403.9L197.2 405.1L197.5 406.5L197.2 407.9L196.4 409.1ZM242.6 400.1L241.4 400.9L240.0 401.2L238.6 400.9L237.5 400.2L227.5 390.0L226.7 388.8L226.5 387.4L226.7 386.0L227.5 384.8L237.7 374.5L238.8 373.7L240.2 373.4L241.6 373.7L242.7 374.4L252.7 384.6L253.5 385.8L253.8 387.2L253.5 388.6L252.7 389.8ZM223.7 419.2L222.5 420.0L221.1 420.3L219.8 420.0L218.6 419.2L208.6 409.0L207.9 407.9L207.6 406.4L207.9 405.0L208.7 403.8L218.8 393.5L220.0 392.7L221.3 392.4L222.7 392.7L223.9 393.5L233.9 403.7L234.6 404.8L234.9 406.3L234.6 407.7L233.8 408.9ZM280.0 399.9L278.8 400.7L277.5 400.9L276.1 400.7L274.9 399.9L264.9 389.7L264.2 388.5L263.9 387.1L264.2 385.7L265.0 384.5L275.1 374.2L276.3 373.4L277.6 373.1L279.0 373.4L280.2 374.2L290.2 384.3L290.9 385.5L291.2 386.9L290.9 388.3L290.1 389.5ZM261.2 418.9L260.0 419.7L258.6 420.0L257.2 419.7L256.1 418.9L246.1 408.8L245.3 407.6L245.0 406.2L245.3 404.8L246.1 403.6L256.2 393.3L257.4 392.5L258.8 392.2L260.2 392.4L261.3 393.2L271.3 403.4L272.1 404.6L272.4 406.0L272.1 407.4L271.3 408.6ZM317.5 399.6L316.3 400.4L314.9 400.7L313.5 400.4L312.4 399.6L302.4 389.5L301.6 388.3L301.3 386.9L301.6 385.5L302.4 384.3L312.5 373.9L313.7 373.1L315.1 372.9L316.4 373.1L317.6 373.9L327.6 384.1L328.4 385.3L328.6 386.7L328.4 388.1L327.6 389.3ZM298.6 418.6L297.4 419.4L296.1 419.7L294.7 419.5L293.5 418.7L283.5 408.5L282.8 407.3L282.5 405.9L282.8 404.5L283.6 403.3L293.7 393.0L294.9 392.2L296.2 391.9L297.6 392.2L298.8 393.0L308.8 403.1L309.5 404.3L309.8 405.7L309.5 407.1L308.7 408.3ZM354.9 399.3L353.7 400.1L352.3 400.4L351.0 400.1L349.8 399.4L339.8 389.2L339.0 388.0L338.8 386.6L339.1 385.2L339.8 384.0L349.9 373.7L351.1 372.9L352.5 372.6L353.9 372.9L355.0 373.6L365.0 383.8L365.8 385.0L366.1 386.4L365.8 387.8L365.0 389.0ZM336.1 418.4L334.9 419.2L333.5 419.5L332.1 419.2L331.0 418.4L321.0 408.2L320.2 407.1L319.9 405.6L320.2 404.2L321.0 403.0L331.1 392.7L332.3 391.9L333.7 391.6L335.1 391.9L336.2 392.7L346.2 402.9L347.0 404.1L347.3 405.5L347.0 406.9L346.2 408.1ZM392.3 399.1L391.2 399.9L389.8 400.1L388.4 399.9L387.2 399.1L377.3 388.9L376.5 387.7L376.2 386.3L376.5 384.9L377.3 383.7L387.4 373.4L388.6 372.6L389.9 372.3L391.3 372.6L392.5 373.4L402.5 383.5L403.3 384.7L403.5 386.1L403.2 387.5L402.5 388.7ZM373.5 418.1L372.3 418.9L371.0 419.2L369.6 418.9L368.4 418.1L358.4 408.0L357.7 406.8L357.4 405.4L357.7 404.0L358.5 402.8L368.6 392.5L369.7 391.7L371.1 391.4L372.5 391.6L373.7 392.4L383.7 402.6L384.4 403.8L384.7 405.2L384.4 406.6L383.6 407.8ZM429.8 398.8L428.6 399.6L427.2 399.9L425.9 399.6L424.7 398.8L414.7 388.7L413.9 387.5L413.6 386.1L413.9 384.7L414.7 383.5L424.8 373.1L426.0 372.3L427.4 372.1L428.7 372.3L429.9 373.1L439.9 383.3L440.7 384.5L441.0 385.9L440.7 387.3L439.9 388.5ZM411.0 417.8L409.8 418.6L408.4 418.9L407.0 418.7L405.9 417.9L395.9 407.7L395.1 406.5L394.8 405.1L395.1 403.7L395.9 402.5L406.0 392.2L407.2 391.4L408.6 391.1L409.9 391.4L411.1 392.2L421.1 402.3L421.9 403.5L422.2 404.9L421.9 406.3L421.1 407.5ZM467.2 398.5L466.1 399.3L464.7 399.6L463.3 399.3L462.1 398.6L452.1 388.4L451.4 387.2L451.1 385.8L451.4 384.4L452.2 383.2L462.2 372.9L463.4 372.1L464.8 371.8L466.2 372.1L467.3 372.8L477.4 383.0L478.1 384.2L478.4 385.6L478.1 387.0L477.3 388.2ZM448.4 417.6L447.3 418.4L445.9 418.7L444.5 418.4L443.3 417.6L433.3 407.4L432.6 406.3L432.3 404.8L432.6 403.4L433.3 402.2L443.4 391.9L444.6 391.1L446.0 390.8L447.4 391.1L448.5 391.9L458.6 402.1L459.3 403.3L459.6 404.7L459.3 406.1L458.5 407.3ZM504.7 398.3L503.5 399.1L502.1 399.3L500.8 399.1L499.6 398.3L489.6 388.1L488.8 386.9L488.5 385.5L488.8 384.1L489.6 382.9L499.7 372.6L500.9 371.8L502.2 371.5L503.6 371.8L504.8 372.6L514.8 382.7L515.6 383.9L515.8 385.3L515.6 386.7L514.8 387.9ZM485.9 417.3L484.7 418.1L483.3 418.4L482.0 418.1L480.8 417.3L470.8 407.2L470.0 406.0L469.7 404.6L470.0 403.2L470.8 402.0L480.9 391.7L482.1 390.9L483.4 390.6L484.8 390.8L486.0 391.6L496.0 401.8L496.8 403.0L497.0 404.4L496.8 405.8L496.0 407.0ZM542.1 398.0L541.0 398.8L539.6 399.1L538.2 398.8L537.0 398.0L527.0 387.9L526.2 386.7L526.0 385.3L526.2 383.9L527.0 382.7L537.1 372.3L538.3 371.5L539.7 371.3L541.0 371.5L542.2 372.3L552.2 382.5L553.0 383.7L553.3 385.1L553.0 386.5L552.2 387.7ZM523.3 417.0L522.2 417.8L520.8 418.1L519.4 417.9L518.2 417.1L508.2 406.9L507.5 405.7L507.2 404.3L507.5 402.9L508.2 401.7L518.3 391.4L519.5 390.6L520.9 390.3L522.3 390.6L523.4 391.4L533.5 401.5L534.2 402.7L534.5 404.1L534.2 405.5L533.4 406.7ZM579.6 397.7L578.4 398.5L577.0 398.8L575.6 398.5L574.5 397.8L564.5 387.6L563.7 386.4L563.4 385.0L563.7 383.6L564.5 382.4L574.5 372.1L575.7 371.3L577.1 371.0L578.5 371.3L579.6 372.0L589.7 382.2L590.4 383.4L590.7 384.8L590.4 386.2L589.7 387.4ZM560.8 416.8L559.6 417.6L558.3 417.9L556.9 417.6L555.7 416.8L545.7 406.6L544.9 405.5L544.6 404.1L544.9 402.6L545.7 401.4L555.8 391.1L556.9 390.3L558.3 390.0L559.7 390.3L560.9 391.1L570.9 401.3L571.7 402.5L571.9 403.9L571.7 405.3L570.9 406.5ZM617.0 397.5L615.9 398.3L614.5 398.5L613.1 398.3L611.9 397.5L601.9 387.3L601.1 386.1L600.8 384.7L601.1 383.3L601.9 382.1L612.0 371.8L613.1 371.0L614.5 370.7L615.9 371.0L617.1 371.8L627.1 381.9L627.9 383.1L628.2 384.5L627.9 385.9L627.1 387.1ZM598.3 416.5L597.1 417.3L595.7 417.6L594.3 417.3L593.2 416.5L583.1 406.4L582.3 405.2L582.1 403.8L582.4 402.4L583.1 401.2L593.2 390.9L594.4 390.1L595.8 389.8L597.1 390.0L598.3 390.8L608.3 401.0L609.1 402.2L609.4 403.6L609.1 405.0L608.3 406.2ZM646.1 393.9L639.3 387.1L638.6 385.9L638.3 384.5L638.6 383.1L639.3 381.9L646.1 374.9ZM635.7 416.2L634.5 417.0L633.2 417.3L631.8 417.1L630.6 416.3L620.6 406.1L619.8 404.9L619.5 403.5L619.8 402.1L620.6 400.9L630.7 390.6L631.8 389.8L633.2 389.5L634.6 389.8L635.8 390.6L645.8 400.7L646.1 401.2L646.1 405.4L645.8 405.9ZM171.3 434.5L171.4 416.7L177.5 423.0L178.3 424.2L178.6 425.6L178.3 427.0L177.5 428.2ZM204.8 438.2L203.7 439.0L202.3 439.3L200.9 439.0L199.7 438.3L189.7 428.1L189.0 426.9L188.7 425.5L189.0 424.1L189.8 422.9L199.9 412.6L201.1 411.8L202.5 411.5L203.9 411.8L205.0 412.5L215.0 422.7L215.8 423.9L216.0 425.3L215.8 426.7L215.0 427.9ZM185.9 457.3L184.8 458.1L183.4 458.4L182.0 458.1L180.8 457.3L171.1 447.4L171.2 441.6L181.0 431.6L182.2 430.8L183.6 430.5L185.0 430.8L186.1 431.6L196.1 441.8L196.9 442.9L197.2 444.4L196.9 445.8L196.1 447.0ZM242.3 438.0L241.1 438.8L239.7 439.0L238.4 438.8L237.2 438.0L227.2 427.8L226.4 426.6L226.2 425.2L226.5 423.8L227.2 422.6L237.4 412.3L238.6 411.5L239.9 411.2L241.3 411.5L242.5 412.3L252.5 422.4L253.2 423.6L253.5 425.0L253.2 426.4L252.4 427.6ZM223.4 457.0L222.2 457.8L220.9 458.1L219.5 457.8L218.3 457.0L208.3 446.9L207.6 445.7L207.3 444.3L207.6 442.9L208.4 441.7L218.5 431.4L219.7 430.6L221.1 430.3L222.4 430.5L223.6 431.3L233.6 441.5L234.4 442.7L234.6 444.1L234.3 445.5L233.6 446.7ZM279.8 437.7L278.6 438.5L277.2 438.8L275.8 438.5L274.7 437.7L264.7 427.6L263.9 426.4L263.6 425.0L263.9 423.6L264.7 422.4L274.8 412.0L276.0 411.2L277.4 411.0L278.8 411.2L279.9 412.0L289.9 422.2L290.7 423.4L291.0 424.8L290.7 426.2L289.9 427.4ZM260.9 456.7L259.7 457.5L258.3 457.8L257.0 457.6L255.8 456.8L245.8 446.6L245.0 445.4L244.8 444.0L245.1 442.6L245.8 441.4L256.0 431.1L257.1 430.3L258.5 430.0L259.9 430.3L261.1 431.1L271.1 441.2L271.8 442.4L272.1 443.8L271.8 445.2L271.0 446.4ZM317.2 437.4L316.0 438.2L314.7 438.5L313.3 438.2L312.1 437.5L302.1 427.3L301.4 426.1L301.1 424.7L301.4 423.3L302.2 422.1L312.3 411.8L313.5 411.0L314.8 410.7L316.2 411.0L317.4 411.7L327.4 421.9L328.1 423.1L328.4 424.5L328.1 425.9L327.3 427.1ZM298.4 456.5L297.2 457.3L295.8 457.6L294.4 457.3L293.3 456.5L283.3 446.3L282.5 445.2L282.2 443.7L282.5 442.3L283.3 441.1L293.4 430.8L294.6 430.0L296.0 429.7L297.4 430.0L298.5 430.8L308.5 441.0L309.3 442.2L309.6 443.6L309.3 445.0L308.5 446.2ZM354.7 437.2L353.5 438.0L352.1 438.2L350.8 438.0L349.6 437.2L339.6 427.0L338.8 425.8L338.5 424.4L338.8 423.0L339.6 421.8L349.7 411.5L350.9 410.7L352.3 410.4L353.7 410.7L354.8 411.5L364.8 421.7L365.6 422.8L365.9 424.2L365.6 425.6L364.8 426.8ZM335.8 456.2L334.7 457.0L333.3 457.3L331.9 457.0L330.7 456.2L320.7 446.1L320.0 444.9L319.7 443.5L320.0 442.1L320.8 440.9L330.9 430.6L332.1 429.8L333.5 429.5L334.8 429.7L336.0 430.5L346.0 440.7L346.8 441.9L347.0 443.3L346.8 444.7L346.0 445.9ZM392.2 436.9L391.0 437.7L389.6 438.0L388.2 437.7L387.1 436.9L377.1 426.8L376.3 425.6L376.0 424.2L376.3 422.8L377.1 421.6L387.2 411.3L388.4 410.4L389.7 410.2L391.1 410.4L392.3 411.2L402.3 421.4L403.1 422.6L403.3 424.0L403.1 425.4L402.3 426.6ZM373.3 455.9L372.1 456.7L370.8 457.0L369.4 456.8L368.2 456.0L358.2 445.8L357.4 444.6L357.2 443.2L357.5 441.8L358.2 440.6L368.4 430.3L369.5 429.5L370.9 429.2L372.3 429.5L373.5 430.3L383.5 440.4L384.2 441.6L384.5 443.0L384.2 444.4L383.4 445.6ZM429.6 436.6L428.4 437.4L427.1 437.7L425.7 437.4L424.5 436.7L414.5 426.5L413.7 425.3L413.5 423.9L413.7 422.5L414.5 421.3L424.6 411.0L425.8 410.2L427.2 409.9L428.6 410.2L429.7 410.9L439.7 421.1L440.5 422.3L440.8 423.7L440.5 425.1L439.7 426.3ZM410.8 455.7L409.6 456.5L408.2 456.8L406.9 456.5L405.7 455.7L395.7 445.5L394.9 444.4L394.6 443.0L394.9 441.5L395.7 440.3L405.8 430.0L407.0 429.2L408.4 428.9L409.8 429.2L410.9 430.0L420.9 440.2L421.7 441.4L422.0 442.8L421.7 444.2L420.9 445.4ZM467.1 436.4L465.9 437.2L464.5 437.5L463.2 437.2L462.0 436.4L452.0 426.2L451.2 425.0L450.9 423.6L451.2 422.2L452.0 421.0L462.1 410.7L463.3 409.9L464.6 409.6L466.0 409.9L467.2 410.7L477.2 420.9L478.0 422.0L478.3 423.4L478.0 424.8L477.2 426.0ZM448.3 455.4L447.1 456.2L445.7 456.5L444.3 456.2L443.2 455.4L433.2 445.3L432.4 444.1L432.1 442.7L432.4 441.3L433.2 440.1L443.3 429.8L444.5 429.0L445.8 428.7L447.2 428.9L448.4 429.7L458.4 439.9L459.2 441.1L459.4 442.5L459.2 443.9L458.4 445.1ZM504.6 436.1L503.4 436.9L502.0 437.2L500.6 436.9L499.5 436.1L489.4 426.0L488.7 424.8L488.4 423.4L488.7 422.0L489.5 420.8L499.5 410.5L500.7 409.6L502.1 409.4L503.5 409.6L504.6 410.4L514.7 420.6L515.4 421.8L515.7 423.2L515.4 424.6L514.6 425.8ZM485.7 455.1L484.6 456.0L483.2 456.2L481.8 456.0L480.6 455.2L470.6 445.0L469.8 443.8L469.6 442.4L469.9 441.0L470.6 439.8L480.7 429.5L481.9 428.7L483.3 428.4L484.7 428.7L485.8 429.5L495.9 439.6L496.6 440.8L496.9 442.2L496.6 443.6L495.8 444.8ZM542.0 435.8L540.8 436.6L539.5 436.9L538.1 436.7L536.9 435.9L526.9 425.7L526.1 424.5L525.8 423.1L526.1 421.7L526.9 420.5L537.0 410.2L538.2 409.4L539.5 409.1L540.9 409.4L542.1 410.1L552.1 420.3L552.9 421.5L553.2 422.9L552.9 424.3L552.1 425.5ZM523.2 454.9L522.1 455.7L520.7 456.0L519.3 455.7L518.1 454.9L508.1 444.7L507.3 443.6L507.0 442.2L507.3 440.7L508.1 439.6L518.2 429.2L519.4 428.4L520.8 428.1L522.1 428.4L523.3 429.2L533.3 439.4L534.1 440.6L534.4 442.0L534.1 443.4L533.3 444.6ZM579.5 435.6L578.3 436.4L576.9 436.7L575.6 436.4L574.4 435.6L564.4 425.4L563.6 424.2L563.3 422.8L563.6 421.4L564.4 420.2L574.4 409.9L575.6 409.1L577.0 408.8L578.4 409.1L579.5 409.9L589.6 420.1L590.4 421.2L590.6 422.6L590.4 424.1L589.6 425.2ZM560.7 454.6L559.5 455.4L558.1 455.7L556.8 455.4L555.6 454.7L545.6 444.5L544.8 443.3L544.5 441.9L544.8 440.5L545.6 439.3L555.7 429.0L556.8 428.2L558.2 427.9L559.6 428.1L560.8 428.9L570.8 439.1L571.6 440.3L571.9 441.7L571.6 443.1L570.8 444.3ZM616.9 435.3L615.8 436.1L614.4 436.4L613.0 436.1L611.8 435.3L601.8 425.2L601.0 424.0L600.8 422.6L601.0 421.2L601.8 420.0L611.9 409.7L613.1 408.8L614.5 408.6L615.8 408.8L617.0 409.6L627.0 419.8L627.8 421.0L628.1 422.4L627.8 423.8L627.0 425.0ZM598.2 454.4L597.0 455.2L595.6 455.4L594.2 455.2L593.1 454.4L583.0 444.2L582.3 443.0L582.0 441.6L582.3 440.2L583.0 439.0L593.1 428.7L594.3 427.9L595.7 427.6L597.1 427.9L598.2 428.7L608.3 438.8L609.0 440.0L609.3 441.4L609.0 442.8L608.3 444.0ZM646.1 431.8L639.3 424.9L638.5 423.7L638.2 422.3L638.5 420.9L639.3 419.7L646.1 412.7ZM635.7 454.1L634.5 454.9L633.1 455.2L631.7 454.9L630.5 454.1L620.5 443.9L619.7 442.8L619.5 441.4L619.7 440.0L620.5 438.8L630.6 428.4L631.8 427.6L633.1 427.3L634.5 427.6L635.7 428.4L645.7 438.6L646.0 439.1L646.0 443.3L645.7 443.8ZM170.9 472.4L171.1 454.5L177.2 460.8L178.0 462.0L178.3 463.4L178.0 464.8L177.2 466.0ZM204.5 476.1L203.4 476.9L202.0 477.1L200.6 476.9L199.4 476.1L189.4 465.9L188.7 464.7L188.4 463.3L188.7 461.9L189.5 460.7L199.6 450.4L200.8 449.6L202.2 449.3L203.6 449.6L204.7 450.4L214.7 460.5L215.5 461.7L215.8 463.1L215.5 464.5L214.7 465.7ZM185.6 495.1L184.5 495.9L183.1 496.2L181.7 495.9L180.5 495.1L170.8 485.3L170.9 479.5L180.7 469.5L181.9 468.7L183.3 468.4L184.7 468.6L185.8 469.4L195.8 479.6L196.6 480.8L196.9 482.2L196.6 483.6L195.8 484.8ZM242.0 475.8L240.8 476.6L239.5 476.9L238.1 476.6L236.9 475.8L226.9 465.7L226.2 464.5L225.9 463.1L226.2 461.7L227.0 460.5L237.1 450.1L238.3 449.3L239.7 449.1L241.0 449.3L242.2 450.1L252.2 460.3L253.0 461.5L253.2 462.9L252.9 464.3L252.2 465.5ZM223.1 494.8L222.0 495.6L220.6 495.9L219.2 495.7L218.0 494.9L208.0 484.7L207.3 483.5L207.0 482.1L207.3 480.7L208.1 479.5L218.2 469.2L219.4 468.4L220.8 468.1L222.2 468.4L223.3 469.2L233.3 479.3L234.1 480.5L234.4 481.9L234.1 483.3L233.3 484.5ZM279.5 475.5L278.3 476.3L276.9 476.6L275.6 476.3L274.4 475.6L264.4 465.4L263.6 464.2L263.4 462.8L263.7 461.4L264.4 460.2L274.6 449.9L275.8 449.1L277.1 448.8L278.5 449.1L279.7 449.8L289.7 460.0L290.4 461.2L290.7 462.6L290.4 464.0L289.6 465.2ZM260.6 494.6L259.5 495.4L258.1 495.7L256.7 495.4L255.5 494.6L245.5 484.4L244.8 483.3L244.5 481.8L244.8 480.4L245.6 479.2L255.7 468.9L256.9 468.1L258.3 467.8L259.6 468.1L260.8 468.9L270.8 479.1L271.6 480.3L271.8 481.7L271.6 483.1L270.8 484.3ZM317.0 475.3L315.8 476.1L314.4 476.4L313.1 476.1L311.9 475.3L301.9 465.1L301.1 463.9L300.9 462.5L301.1 461.1L301.9 459.9L312.0 449.6L313.2 448.8L314.6 448.5L316.0 448.8L317.1 449.6L327.1 459.8L327.9 460.9L328.2 462.3L327.9 463.7L327.1 464.9ZM298.1 494.3L297.0 495.1L295.6 495.4L294.2 495.1L293.0 494.3L283.0 484.2L282.3 483.0L282.0 481.6L282.3 480.2L283.1 479.0L293.2 468.7L294.4 467.9L295.7 467.6L297.1 467.8L298.3 468.6L308.3 478.8L309.1 480.0L309.3 481.4L309.0 482.8L308.3 484.0ZM354.5 475.0L353.3 475.8L351.9 476.1L350.5 475.8L349.4 475.0L339.4 464.9L338.6 463.7L338.3 462.3L338.6 460.9L339.4 459.7L349.5 449.4L350.7 448.5L352.1 448.3L353.5 448.5L354.6 449.3L364.6 459.5L365.4 460.7L365.7 462.1L365.4 463.5L364.6 464.7ZM335.6 494.0L334.4 494.8L333.1 495.1L331.7 494.9L330.5 494.1L320.5 483.9L319.7 482.7L319.5 481.3L319.8 479.9L320.5 478.7L330.7 468.4L331.8 467.6L333.2 467.3L334.6 467.6L335.8 468.4L345.8 478.5L346.6 479.7L346.8 481.1L346.5 482.5L345.7 483.7ZM392.0 474.7L390.8 475.5L389.4 475.8L388.0 475.6L386.9 474.8L376.9 464.6L376.1 463.4L375.8 462.0L376.1 460.6L376.9 459.4L387.0 449.1L388.2 448.3L389.5 448.0L390.9 448.3L392.1 449.1L402.1 459.2L402.9 460.4L403.1 461.8L402.9 463.2L402.1 464.4ZM373.1 493.8L371.9 494.6L370.6 494.9L369.2 494.6L368.0 493.8L358.0 483.6L357.2 482.5L357.0 481.1L357.2 479.6L358.0 478.5L368.2 468.1L369.3 467.3L370.7 467.0L372.1 467.3L373.3 468.1L383.3 478.3L384.0 479.5L384.3 480.9L384.0 482.3L383.2 483.5ZM429.4 474.5L428.3 475.3L426.9 475.6L425.5 475.3L424.3 474.5L414.3 464.3L413.6 463.1L413.3 461.7L413.6 460.3L414.4 459.1L424.5 448.8L425.6 448.0L427.0 447.7L428.4 448.0L429.6 448.8L439.6 459.0L440.4 460.1L440.6 461.5L440.3 463.0L439.6 464.1ZM410.6 493.5L409.4 494.3L408.1 494.6L406.7 494.3L405.5 493.5L395.5 483.4L394.7 482.2L394.5 480.8L394.7 479.4L395.5 478.2L405.6 467.9L406.8 467.1L408.2 466.8L409.6 467.0L410.7 467.8L420.8 478.0L421.5 479.2L421.8 480.6L421.5 482.0L420.7 483.2ZM466.9 474.2L465.8 475.0L464.4 475.3L463.0 475.0L461.8 474.2L451.8 464.1L451.0 462.9L450.8 461.5L451.0 460.1L451.8 458.9L461.9 448.6L463.1 447.8L464.5 447.5L465.9 447.7L467.0 448.5L477.1 458.7L477.8 459.9L478.1 461.3L477.8 462.7L477.0 463.9ZM448.1 493.2L446.9 494.1L445.6 494.3L444.2 494.1L443.0 493.3L433.0 483.1L432.2 481.9L431.9 480.5L432.2 479.1L433.0 477.9L443.1 467.6L444.3 466.8L445.7 466.5L447.1 466.8L448.2 467.6L458.2 477.7L459.0 478.9L459.3 480.3L459.0 481.7L458.2 482.9ZM504.4 473.9L503.2 474.7L501.9 475.0L500.5 474.8L499.3 474.0L489.3 463.8L488.5 462.6L488.2 461.2L488.5 459.8L489.3 458.6L499.4 448.3L500.6 447.5L502.0 447.2L503.3 447.5L504.5 448.3L514.5 458.4L515.3 459.6L515.6 461.0L515.3 462.4L514.5 463.6ZM485.6 493.0L484.4 493.8L483.0 494.1L481.7 493.8L480.5 493.0L470.5 482.8L469.7 481.7L469.4 480.3L469.7 478.9L470.5 477.7L480.6 467.3L481.8 466.5L483.2 466.2L484.5 466.5L485.7 467.3L495.7 477.5L496.5 478.7L496.8 480.1L496.5 481.5L495.7 482.7ZM541.9 473.7L540.7 474.5L539.4 474.8L538.0 474.5L536.8 473.7L526.8 463.5L526.0 462.3L525.7 460.9L526.0 459.5L526.8 458.3L536.9 448.0L538.1 447.2L539.4 446.9L540.8 447.2L542.0 448.0L552.0 458.2L552.8 459.3L553.1 460.8L552.8 462.2L552.0 463.4ZM523.1 492.7L521.9 493.5L520.5 493.8L519.2 493.5L518.0 492.8L508.0 482.6L507.2 481.4L506.9 480.0L507.2 478.6L508.0 477.4L518.1 467.1L519.3 466.3L520.6 466.0L522.0 466.3L523.2 467.0L533.2 477.2L534.0 478.4L534.3 479.8L534.0 481.2L533.2 482.4ZM579.4 473.4L578.2 474.2L576.8 474.5L575.5 474.2L574.3 473.4L564.3 463.3L563.5 462.1L563.2 460.7L563.5 459.3L564.3 458.1L574.4 447.8L575.5 447.0L576.9 446.7L578.3 446.9L579.5 447.7L589.5 457.9L590.3 459.1L590.5 460.5L590.3 461.9L589.5 463.1ZM560.6 492.5L559.4 493.3L558.0 493.5L556.7 493.3L555.5 492.5L545.5 482.3L544.7 481.1L544.4 479.7L544.7 478.3L545.5 477.1L555.6 466.8L556.7 466.0L558.1 465.7L559.5 466.0L560.7 466.8L570.7 476.9L571.5 478.1L571.8 479.5L571.5 480.9L570.7 482.1ZM616.9 473.1L615.7 473.9L614.3 474.2L612.9 474.0L611.8 473.2L601.7 463.0L601.0 461.8L600.7 460.4L601.0 459.0L601.7 457.8L611.8 447.5L613.0 446.7L614.4 446.4L615.8 446.7L616.9 447.5L627.0 457.6L627.7 458.8L628.0 460.2L627.7 461.6L627.0 462.8ZM598.1 492.2L596.9 493.0L595.5 493.3L594.2 493.0L593.0 492.2L582.9 482.1L582.2 480.9L581.9 479.5L582.2 478.1L583.0 476.9L593.0 466.5L594.2 465.7L595.6 465.5L597.0 465.7L598.1 466.5L608.2 476.7L609.0 477.9L609.2 479.3L609.0 480.7L608.2 481.9ZM646.0 469.6L639.2 462.7L638.4 461.6L638.2 460.1L638.4 458.7L639.2 457.5L646.0 450.6ZM635.6 491.9L634.4 492.7L633.0 493.0L631.7 492.8L630.5 492.0L620.4 481.8L619.7 480.6L619.4 479.2L619.7 477.8L620.4 476.6L630.5 466.3L631.7 465.5L633.1 465.2L634.5 465.5L635.6 466.2L645.7 476.4L646.0 476.9L646.0 481.1L645.7 481.6ZM170.6 510.2L170.8 492.4L176.9 498.6L177.7 499.8L178.0 501.2L177.7 502.6L176.9 503.8ZM204.2 513.9L203.1 514.7L201.7 515.0L200.3 514.7L199.1 513.9L189.2 503.8L188.4 502.6L188.1 501.2L188.4 499.8L189.2 498.6L199.3 488.2L200.5 487.4L201.9 487.2L203.3 487.4L204.4 488.2L214.4 498.4L215.2 499.6L215.5 501.0L215.2 502.4L214.4 503.6ZM185.3 532.9L184.2 533.7L182.8 534.0L181.4 533.8L180.2 533.0L170.5 523.1L170.6 517.3L180.4 507.3L181.6 506.5L183.0 506.2L184.4 506.5L185.5 507.3L195.5 517.4L196.3 518.6L196.6 520.0L196.3 521.4L195.5 522.6ZM241.8 513.6L240.6 514.4L239.2 514.7L237.8 514.4L236.6 513.7L226.7 503.5L225.9 502.3L225.6 500.9L225.9 499.5L226.7 498.3L236.8 488.0L238.0 487.2L239.4 486.9L240.8 487.2L241.9 487.9L251.9 498.1L252.7 499.3L253.0 500.7L252.7 502.1L251.9 503.3ZM222.9 532.7L221.7 533.5L220.3 533.8L218.9 533.5L217.8 532.7L207.8 522.5L207.0 521.4L206.7 519.9L207.0 518.5L207.8 517.3L217.9 507.0L219.1 506.2L220.5 505.9L221.9 506.2L223.0 507.0L233.0 517.2L233.8 518.4L234.1 519.8L233.8 521.2L233.0 522.4ZM279.3 513.4L278.1 514.2L276.7 514.5L275.3 514.2L274.2 513.4L264.2 503.2L263.4 502.0L263.1 500.6L263.4 499.2L264.2 498.0L274.3 487.7L275.5 486.9L276.9 486.6L278.3 486.9L279.4 487.7L289.4 497.9L290.2 499.0L290.5 500.4L290.2 501.8L289.4 503.0ZM260.4 532.4L259.2 533.2L257.8 533.5L256.4 533.2L255.3 532.4L245.3 522.3L244.5 521.1L244.2 519.7L244.5 518.3L245.3 517.1L255.4 506.8L256.6 506.0L258.0 505.7L259.4 505.9L260.5 506.7L270.5 516.9L271.3 518.1L271.6 519.5L271.3 520.9L270.5 522.1ZM316.8 513.1L315.6 513.9L314.2 514.2L312.8 513.9L311.7 513.1L301.7 503.0L300.9 501.8L300.6 500.4L300.9 499.0L301.7 497.8L311.8 487.5L313.0 486.6L314.4 486.4L315.8 486.6L316.9 487.4L326.9 497.6L327.7 498.8L328.0 500.2L327.7 501.6L326.9 502.8ZM297.9 532.1L296.7 532.9L295.3 533.2L293.9 533.0L292.8 532.2L282.8 522.0L282.0 520.8L281.7 519.4L282.0 518.0L282.8 516.8L292.9 506.5L294.1 505.7L295.5 505.4L296.9 505.7L298.1 506.5L308.1 516.6L308.8 517.8L309.1 519.2L308.8 520.6L308.0 521.8ZM354.3 512.8L353.1 513.6L351.7 513.9L350.3 513.7L349.2 512.9L339.2 502.7L338.4 501.5L338.1 500.1L338.4 498.7L339.2 497.5L349.3 487.2L350.5 486.4L351.9 486.1L353.2 486.4L354.4 487.2L364.4 497.3L365.2 498.5L365.5 499.9L365.2 501.3L364.4 502.5ZM335.4 531.9L334.2 532.7L332.8 533.0L331.5 532.7L330.3 531.9L320.3 521.7L319.5 520.6L319.2 519.2L319.5 517.7L320.3 516.6L330.4 506.2L331.6 505.4L333.0 505.1L334.4 505.4L335.6 506.2L345.6 516.4L346.3 517.6L346.6 519.0L346.3 520.4L345.5 521.6ZM391.8 512.6L390.6 513.4L389.2 513.7L387.8 513.4L386.7 512.6L376.7 502.4L375.9 501.2L375.6 499.8L375.9 498.4L376.7 497.2L386.8 486.9L388.0 486.1L389.4 485.8L390.7 486.1L391.9 486.9L401.9 497.1L402.7 498.2L403.0 499.6L402.7 501.1L401.9 502.3ZM372.9 531.6L371.7 532.4L370.4 532.7L369.0 532.4L367.8 531.7L357.8 521.5L357.0 520.3L356.8 518.9L357.0 517.5L357.8 516.3L367.9 506.0L369.1 505.2L370.5 504.9L371.9 505.2L373.1 505.9L383.1 516.1L383.8 517.3L384.1 518.7L383.8 520.1L383.0 521.3ZM429.3 512.3L428.1 513.1L426.7 513.4L425.3 513.1L424.2 512.3L414.2 502.2L413.4 501.0L413.1 499.6L413.4 498.2L414.2 497.0L424.3 486.7L425.5 485.9L426.8 485.6L428.2 485.8L429.4 486.6L439.4 496.8L440.2 498.0L440.5 499.4L440.2 500.8L439.4 502.0ZM410.4 531.4L409.3 532.2L407.9 532.4L406.5 532.2L405.3 531.4L395.3 521.2L394.5 520.0L394.3 518.6L394.5 517.2L395.3 516.0L405.5 505.7L406.6 504.9L408.0 504.6L409.4 504.9L410.6 505.7L420.6 515.8L421.4 517.0L421.6 518.4L421.3 519.8L420.6 521.0ZM466.8 512.0L465.6 512.8L464.2 513.1L462.8 512.9L461.7 512.1L451.7 501.9L450.9 500.7L450.6 499.3L450.9 497.9L451.7 496.7L461.8 486.4L463.0 485.6L464.3 485.3L465.7 485.6L466.9 486.4L476.9 496.5L477.7 497.7L478.0 499.1L477.7 500.5L476.9 501.7ZM447.9 531.1L446.8 531.9L445.4 532.2L444.0 531.9L442.8 531.1L432.8 521.0L432.0 519.8L431.8 518.4L432.1 517.0L432.8 515.8L443.0 505.4L444.1 504.6L445.5 504.4L446.9 504.6L448.1 505.4L458.1 515.6L458.9 516.8L459.1 518.2L458.8 519.6L458.1 520.8ZM504.3 511.8L503.1 512.6L501.7 512.9L500.3 512.6L499.2 511.8L489.2 501.6L488.4 500.5L488.1 499.0L488.4 497.6L489.2 496.4L499.3 486.1L500.4 485.3L501.8 485.0L503.2 485.3L504.4 486.1L514.4 496.3L515.2 497.5L515.5 498.9L515.2 500.3L514.4 501.5ZM485.5 530.8L484.3 531.6L482.9 531.9L481.5 531.6L480.4 530.9L470.3 520.7L469.5 519.5L469.3 518.1L469.6 516.7L470.3 515.5L480.5 505.2L481.6 504.4L483.0 504.1L484.4 504.4L485.6 505.1L495.6 515.3L496.4 516.5L496.6 517.9L496.4 519.3L495.6 520.5ZM541.8 511.5L540.6 512.3L539.2 512.6L537.9 512.3L536.7 511.5L526.7 501.4L525.9 500.2L525.6 498.8L525.9 497.4L526.7 496.2L536.8 485.9L537.9 485.1L539.3 484.8L540.7 485.0L541.9 485.8L551.9 496.0L552.7 497.2L553.0 498.6L552.7 500.0L551.9 501.2ZM523.0 530.6L521.8 531.4L520.4 531.7L519.0 531.4L517.9 530.6L507.8 520.4L507.1 519.2L506.8 517.8L507.1 516.4L507.9 515.2L518.0 504.9L519.1 504.1L520.5 503.8L521.9 504.1L523.1 504.9L533.1 515.1L533.9 516.2L534.1 517.6L533.9 519.1L533.1 520.2ZM579.3 511.2L578.1 512.0L576.7 512.3L575.4 512.1L574.2 511.3L564.1 501.1L563.4 499.9L563.1 498.5L563.4 497.1L564.2 495.9L574.3 485.6L575.4 484.8L576.8 484.5L578.2 484.8L579.4 485.6L589.4 495.7L590.2 496.9L590.5 498.3L590.2 499.7L589.4 500.9ZM560.5 530.3L559.3 531.1L557.9 531.4L556.6 531.1L555.4 530.3L545.3 520.2L544.6 519.0L544.3 517.6L544.6 516.2L545.4 515.0L555.5 504.7L556.6 503.8L558.0 503.6L559.4 503.8L560.6 504.6L570.6 514.8L571.4 516.0L571.7 517.4L571.4 518.8L570.6 520.0ZM616.8 511.0L615.6 511.8L614.2 512.1L612.9 511.8L611.7 511.0L601.6 500.8L600.9 499.7L600.6 498.3L600.9 496.8L601.7 495.7L611.7 485.3L612.9 484.5L614.3 484.2L615.7 484.5L616.9 485.3L626.9 495.5L627.7 496.7L628.0 498.1L627.7 499.5L626.9 500.7ZM598.0 530.0L596.8 530.8L595.5 531.1L594.1 530.9L592.9 530.1L582.9 519.9L582.1 518.7L581.8 517.3L582.1 515.9L582.9 514.7L593.0 504.4L594.1 503.6L595.5 503.3L596.9 503.6L598.1 504.4L608.1 514.5L608.9 515.7L609.2 517.1L608.9 518.5L608.1 519.7ZM645.9 507.5L639.1 500.6L638.4 499.4L638.1 498.0L638.4 496.6L639.2 495.4L646.0 488.4ZM635.5 529.8L634.4 530.6L633.0 530.9L631.6 530.6L630.4 529.8L620.4 519.6L619.6 518.4L619.3 517.0L619.6 515.6L620.4 514.4L630.5 504.1L631.6 503.3L633.0 503.0L634.4 503.3L635.6 504.1L645.6 514.3L645.9 514.7L645.9 519.0L645.6 519.5ZM170.3 548.0L170.5 530.2L176.6 536.5L177.4 537.7L177.7 539.1L177.4 540.5L176.6 541.7ZM204.0 551.7L202.8 552.5L201.4 552.8L200.0 552.5L198.8 551.8L188.9 541.6L188.1 540.4L187.8 539.0L188.1 537.6L188.9 536.4L199.0 526.1L200.2 525.3L201.6 525.0L203.0 525.3L204.2 526.0L214.1 536.2L214.9 537.4L215.2 538.8L214.9 540.2L214.1 541.4ZM172.2 553.2L180.1 545.1L181.3 544.3L182.7 544.0L184.1 544.3L185.2 545.1L193.0 553.0ZM241.5 551.5L240.3 552.3L238.9 552.5L237.5 552.3L236.4 551.5L226.4 541.3L225.6 540.1L225.3 538.7L225.6 537.3L226.4 536.1L236.6 525.8L237.7 525.0L239.1 524.7L240.5 525.0L241.7 525.8L251.7 536.0L252.4 537.1L252.7 538.5L252.4 539.9L251.6 541.1ZM209.8 552.9L217.7 544.9L218.8 544.1L220.2 543.8L221.6 544.0L222.8 544.8L230.5 552.7ZM279.0 551.2L277.8 552.0L276.4 552.3L275.1 552.0L273.9 551.2L263.9 541.1L263.1 539.9L262.9 538.5L263.1 537.1L263.9 535.9L274.1 525.6L275.2 524.7L276.6 524.5L278.0 524.7L279.2 525.5L289.2 535.7L290.0 536.9L290.2 538.3L289.9 539.7L289.1 540.9ZM247.3 552.6L255.2 544.6L256.4 543.8L257.7 543.5L259.1 543.8L260.3 544.6L268.1 552.5ZM316.5 550.9L315.4 551.7L314.0 552.0L312.6 551.8L311.4 551.0L301.4 540.8L300.6 539.6L300.4 538.2L300.7 536.8L301.4 535.6L311.6 525.3L312.8 524.5L314.1 524.2L315.5 524.5L316.7 525.3L326.7 535.4L327.5 536.6L327.7 538.0L327.5 539.4L326.7 540.6ZM284.8 552.4L292.7 544.3L293.9 543.5L295.3 543.2L296.6 543.5L297.8 544.3L305.6 552.2ZM354.1 550.7L352.9 551.5L351.5 551.8L350.1 551.5L348.9 550.7L338.9 540.5L338.2 539.3L337.9 537.9L338.2 536.5L339.0 535.3L349.1 525.0L350.3 524.2L351.7 523.9L353.0 524.2L354.2 525.0L364.2 535.2L365.0 536.3L365.3 537.7L365.0 539.2L364.2 540.4ZM322.3 552.1L330.2 544.1L331.4 543.3L332.8 543.0L334.2 543.3L335.3 544.0L343.1 552.0ZM391.6 550.4L390.4 551.2L389.0 551.5L387.6 551.2L386.5 550.4L376.5 540.3L375.7 539.1L375.4 537.7L375.7 536.3L376.5 535.1L386.6 524.8L387.8 524.0L389.2 523.7L390.5 523.9L391.7 524.7L401.7 534.9L402.5 536.1L402.8 537.5L402.5 538.9L401.7 540.1ZM359.9 551.8L367.7 543.8L368.9 543.0L370.3 542.7L371.7 543.0L372.9 543.8L380.6 551.7ZM429.1 550.1L427.9 550.9L426.5 551.2L425.2 551.0L424.0 550.2L414.0 540.0L413.2 538.8L412.9 537.4L413.2 536.0L414.0 534.8L424.1 524.5L425.3 523.7L426.7 523.4L428.1 523.7L429.2 524.5L439.2 534.6L440.0 535.8L440.3 537.2L440.0 538.6L439.2 539.8ZM397.4 551.6L405.3 543.5L406.4 542.7L407.8 542.5L409.2 542.7L410.4 543.5L418.2 551.4ZM466.6 549.9L465.5 550.7L464.1 551.0L462.7 550.7L461.5 549.9L451.5 539.7L450.7 538.6L450.4 537.2L450.7 535.7L451.5 534.5L461.6 524.2L462.8 523.4L464.2 523.1L465.6 523.4L466.7 524.2L476.8 534.4L477.5 535.6L477.8 537.0L477.5 538.4L476.7 539.6ZM434.9 551.3L442.8 543.3L444.0 542.5L445.3 542.2L446.7 542.5L447.9 543.2L455.7 551.2ZM504.2 549.6L503.0 550.4L501.6 550.7L500.2 550.4L499.0 549.6L489.0 539.5L488.2 538.3L488.0 536.9L488.2 535.5L489.0 534.3L499.1 524.0L500.3 523.2L501.7 522.9L503.1 523.1L504.2 523.9L514.3 534.1L515.1 535.3L515.3 536.7L515.0 538.1L514.3 539.3ZM472.4 551.0L480.3 543.0L481.5 542.2L482.9 541.9L484.2 542.2L485.4 543.0L493.2 550.9ZM541.7 549.3L540.5 550.2L539.1 550.4L537.7 550.2L536.6 549.4L526.5 539.2L525.8 538.0L525.5 536.6L525.8 535.2L526.5 534.0L536.6 523.7L537.8 522.9L539.2 522.6L540.6 522.9L541.8 523.7L551.8 533.8L552.6 535.0L552.8 536.4L552.6 537.8L551.8 539.0ZM510.0 550.8L517.8 542.8L519.0 542.0L520.4 541.7L521.8 541.9L522.9 542.7L530.8 550.6ZM579.2 549.1L578.0 549.9L576.6 550.2L575.3 549.9L574.1 549.1L564.0 538.9L563.3 537.8L563.0 536.4L563.3 535.0L564.1 533.8L574.2 523.4L575.3 522.6L576.7 522.3L578.1 522.6L579.3 523.4L589.3 533.6L590.1 534.8L590.4 536.2L590.1 537.6L589.3 538.8ZM547.5 550.5L555.4 542.5L556.5 541.7L557.9 541.4L559.3 541.7L560.5 542.5L568.3 550.4ZM616.7 548.8L615.6 549.6L614.2 549.9L612.8 549.6L611.6 548.9L601.6 538.7L600.8 537.5L600.5 536.1L600.8 534.7L601.6 533.5L611.7 523.2L612.8 522.4L614.2 522.1L615.6 522.4L616.8 523.1L626.8 533.3L627.6 534.5L627.9 535.9L627.6 537.3L626.8 538.5ZM585.0 550.3L592.9 542.2L594.0 541.4L595.4 541.1L596.8 541.4L598.0 542.2L605.8 550.1ZM645.9 545.3L639.1 538.4L638.3 537.2L638.0 535.8L638.3 534.4L639.1 533.2L645.9 526.3ZM622.5 550.0L630.4 542.0L631.6 541.2L633.0 540.9L634.3 541.1L635.5 541.9L643.3 549.8Z" fill="#bcbcbc" stroke="#111" stroke-width="1.2"/><g fill="#bcbcbc" stroke="#111" stroke-width="1.1"><rect x="210.4" y="62.5" width="27.0" height="3.6" rx="1.8"/><rect x="247.6" y="62.2" width="27.0" height="3.6" rx="1.8"/><rect x="284.9" y="61.9" width="27.0" height="3.6" rx="1.8"/><rect x="322.2" y="61.6" width="27.0" height="3.6" rx="1.8"/><rect x="359.4" y="61.4" width="27.0" height="3.6" rx="1.8"/><rect x="396.7" y="61.1" width="27.0" height="3.6" rx="1.8"/><rect x="434.0" y="60.8" width="27.0" height="3.6" rx="1.8"/><rect x="471.2" y="60.6" width="27.0" height="3.6" rx="1.8"/><rect x="508.5" y="60.3" width="27.0" height="3.6" rx="1.8"/><rect x="545.8" y="60.0" width="27.0" height="3.6" rx="1.8"/><rect x="583.1" y="59.7" width="27.0" height="3.6" rx="1.8"/><rect x="620.3" y="59.5" width="27.0" height="3.6" rx="1.8"/><rect x="172.3" y="62.7" width="14.0" height="3.6" rx="1.8"/><rect x="169.1" y="556.7" width="27.0" height="4.6" rx="2.3"/><rect x="206.6" y="556.4" width="27.0" height="4.6" rx="2.3"/><rect x="244.1" y="556.1" width="27.0" height="4.6" rx="2.3"/><rect x="281.6" y="555.9" width="27.0" height="4.6" rx="2.3"/><rect x="319.2" y="555.6" width="27.0" height="4.6" rx="2.3"/><rect x="356.7" y="555.4" width="27.0" height="4.6" rx="2.3"/><rect x="394.2" y="555.1" width="27.0" height="4.6" rx="2.3"/><rect x="431.7" y="554.8" width="27.0" height="4.6" rx="2.3"/><rect x="469.3" y="554.6" width="27.0" height="4.6" rx="2.3"/><rect x="506.8" y="554.3" width="27.0" height="4.6" rx="2.3"/><rect x="544.3" y="554.0" width="27.0" height="4.6" rx="2.3"/><rect x="581.9" y="553.8" width="27.0" height="4.6" rx="2.3"/><rect x="619.4" y="553.5" width="27.0" height="4.6" rx="2.3"/><rect x="177.3" y="54.2" width="32.0" height="4.0" rx="2.0"/></g><g fill="#bcbcbc" stroke="#1a1a1a" stroke-width="1"><rect x="164" y="75" width="4" height="66" rx="2"/><rect x="164" y="109" width="4" height="26" rx="2"/><rect x="164" y="147" width="4" height="32" rx="2"/><rect x="164" y="205" width="4" height="22" rx="2"/><rect x="164" y="250" width="4" height="25" rx="2"/><rect x="164" y="297" width="4" height="28" rx="2"/><rect x="164" y="345" width="4" height="30" rx="2"/><rect x="164" y="395" width="4" height="30" rx="2"/><rect x="164" y="445" width="4" height="30" rx="2"/><rect x="164" y="493" width="4" height="30" rx="2"/><rect x="164" y="533" width="4" height="22" rx="2"/><rect x="157" y="53" width="4" height="88" rx="2"/></g><g fill="#bcbcbc" stroke="#111" stroke-width="1"><ellipse cx="653" cy="69" rx="1.3" ry="1.3"/><ellipse cx="653" cy="89" rx="1.3" ry="1.5"/><ellipse cx="653" cy="181" rx="2" ry="2.8"/><ellipse cx="653" cy="243" rx="2" ry="2.5"/><ellipse cx="653" cy="281" rx="1.8" ry="1.5"/><ellipse cx="653" cy="333" rx="2" ry="1.6"/><ellipse cx="653" cy="372" rx="2" ry="2"/><ellipse cx="653" cy="411" rx="2" ry="2.5"/><ellipse cx="653" cy="485" rx="1.6" ry="1.6"/></g><path d="M154 53L158 50L365 49.5" fill="none" stroke="#2a2a2a" stroke-width="1.1"/><path d="M214 54.5L660 52M214 57L660 57" fill="none" stroke="#2a2a2a" stroke-width="1"/><path d="M157 51L156 561Q156 565 160 565" fill="none" stroke="#2a2a2a" stroke-width="1.1"/><path d="M159.5 55V567" stroke="#8a8a8a" stroke-width="1"/><path d="M159 561.5H660" stroke="#9a9a9a" stroke-width="1"/><path d="M157 564.5L660 565.5M463 561.5L660 561" fill="none" stroke="#2a2a2a" stroke-width="1"/><path d="M135.5 47V568" stroke="#6a6a6a" stroke-width="1"/><path d="M154 587.5H660" stroke="#6a6a6a" stroke-width="1"/><path d="M44 571V547" stroke="#3aa040" stroke-width="1.6"/><path d="M41 551L44 542L47 551Z" fill="#3aa040"/><path d="M44 571H67" stroke="#e01a60" stroke-width="1.6"/><path d="M65 568L74 571L65 574Z" fill="#e01a60"/><circle cx="44" cy="571" r="2.6" fill="#3a7ac8"/></svg>
<div class="t" style="left:1202px;top:365.42px;font-size:12.5px;line-height:12.5px;color:#111;letter-spacing:0.9px">4.1</div>
<div class="t" style="left:1194px;top:569.42px;font-size:12.5px;line-height:12.5px;color:#111;letter-spacing:0.9px">4.05</div>
<div class="t" style="left:1214px;top:774.42px;font-size:12.5px;line-height:12.5px;color:#111;letter-spacing:0.9px">4</div>
<div class="t" style="left:1160px;top:516.84px;font-size:12px;line-height:12px;color:#111;letter-spacing:0.3px">mm</div>
<div class="t" style="left:1252px;top:813.42px;font-size:12.5px;line-height:12.5px;color:#111;letter-spacing:0.9px">4</div>
<div class="t" style="left:1444px;top:812.42px;font-size:12.5px;line-height:12.5px;color:#111;letter-spacing:0.9px">4.05</div>
<div class="t" style="left:1651px;top:812.42px;font-size:12.5px;line-height:12.5px;color:#111;letter-spacing:0.9px">4.1</div>
<div class="t" style="left:1766px;top:807.42px;font-size:12.5px;line-height:12.5px;color:#111;">0</div>
<div class="t" style="left:1779px;top:819.84px;font-size:12px;line-height:12px;color:#111;letter-spacing:0.3px">mm</div>
<div class="t" style="left:1138px;top:740.42px;font-size:12.5px;line-height:12.5px;color:#111;">y</div>
<div class="t" style="left:1177px;top:779.42px;font-size:12.5px;line-height:12.5px;color:#111;">x</div>
<div class="t" style="left:1138px;top:780.69px;font-size:11px;line-height:11px;color:#111;">z</div>
<div class="a" style="left:1097px;top:865px;width:819px;height:1px;background:#d3d3d3;"></div>
<div class="a" style="left:1101px;top:842px;width:88px;height:24px;background:#f8fafd;border:1px solid #d3d3d3;border-bottom:none"></div>
<div class="t" style="left:1106px;top:849.00px;font-size:13px;line-height:13px;color:#2d5fa8;">Messages</div>
<svg style="left:1173px;top:850px" width="8" height="8" viewBox="0 0 8 8"><path d="M0.5 0.5L7.5 7.5M7.5 0.5L0.5 7.5" stroke="#aaa" stroke-width="1.1"/></svg>
<div class="a" style="left:1199px;top:843px;width:59px;height:22px;background:#ebecee;"></div>
<div class="t" style="left:1203px;top:848.00px;font-size:13px;line-height:13px;color:#222;">Progress</div>
<div class="a" style="left:1267px;top:843px;width:30px;height:22px;background:#ebecee;"></div>
<div class="t" style="left:1271px;top:848.00px;font-size:13px;line-height:13px;color:#222;">Log</div>
<div class="a" style="left:1305px;top:843px;width:62px;height:22px;background:#ebecee;"></div>
<div class="t" style="left:1307px;top:848.00px;font-size:13px;line-height:13px;color:#222;">Table</div>
<svg style="left:1348px;top:850px" width="8" height="8" viewBox="0 0 8 8"><path d="M0.5 0.5L7.5 7.5M7.5 0.5L0.5 7.5" stroke="#aaa" stroke-width="1.1"/></svg>
<svg style="left:1888px;top:852px" width="10" height="6" viewBox="0 0 10 6"><path d="M0 0H10L5 6Z" fill="#444"/></svg>
<svg style="left:1904px;top:849px" width="8" height="11" viewBox="0 0 8 11"><rect x="1.5" y="0" width="5" height="6" fill="#444"/><rect x="0" y="6" width="8" height="1.5" fill="#444"/><rect x="3.5" y="7" width="1" height="4" fill="#444"/></svg>
<svg style="left:1106px;top:873px" width="14" height="17" viewBox="0 0 14 17"><path d="M1 0L6 8" stroke="#666" stroke-width="1.6"/><path d="M4 7L8 6L13 14L8 16L5 15Z" fill="#f5b040"/><path d="M6 9L9 15" stroke="#e09030" stroke-width="0.8"/></svg>
<div class="a" style="left:1101px;top:894px;width:811px;height:110px;background:#f8fafd;border:1px solid #d3d3d3"></div>
<div class="a" style="left:1894px;top:895px;width:17px;height:108px;background:#f4f4f4;"></div>
<div class="a" style="left:1894px;top:912px;width:17px;height:15px;background:#ffffff;"></div>
<div class="a" style="left:1894px;top:927px;width:17px;height:59px;background:#e2e2e2;"></div>
<svg style="left:1899px;top:901px" width="8" height="5" viewBox="0 0 8 5"><path d="M0.5 4.5L4 1L7.5 4.5" fill="none" stroke="#c8c8c8" stroke-width="1"/></svg>
<svg style="left:1899px;top:992px" width="8" height="5" viewBox="0 0 8 5"><path d="M0.5 0.5L4 4L7.5 0.5" fill="none" stroke="#c8c8c8" stroke-width="1"/></svg>
<div class="t" style="left:1104px;top:899.84px;font-size:12px;line-height:12px;color:#111;letter-spacing:-0.27px">[Feb 22, 2022 3:25 PM] Finalized geometry has 1 boundary, 4 edges, and 4 vertices.</div>
<div class="t" style="left:1104px;top:914.84px;font-size:12px;line-height:12px;color:#111;letter-spacing:-0.27px">[Feb 22, 2022 3:38 PM] Formed union of 1 surface object and 1 mixed object.</div>
<div class="t" style="left:1104px;top:929.84px;font-size:12px;line-height:12px;color:#111;letter-spacing:-0.27px">[Feb 22, 2022 3:38 PM] Finalized geometry has 442 boundaries, 916 edges, and 908 vertices.</div>
<div class="t" style="left:1104px;top:944.84px;font-size:12px;line-height:12px;color:#111;letter-spacing:-0.27px">[Feb 22, 2022 3:38 PM] Finalized geometry is disconnected and has 8 components.</div>
<div class="t" style="left:1104px;top:959.84px;font-size:12px;line-height:12px;color:#111;letter-spacing:-0.27px">[Feb 22, 2022 3:50 PM] Finalized geometry has 432 boundaries, 874 edges, and 884 vertices.</div>
<div class="t" style="left:1104px;top:974.84px;font-size:12px;line-height:12px;color:#111;letter-spacing:-0.27px">[Feb 22, 2022 3:50 PM] Finalized geometry is disconnected and has 442 components.</div>
<div class="a" style="left:1102px;top:895px;width:790px;height:3px;overflow:hidden"><div class="t" style="left:2px;top:-10px;font-size:12px;line-height:12px;color:#111;letter-spacing:-0.27px">[Feb 22, 2022 3:25 PM] Finalized geometry has 4 boundaries, 4 edges, and 4 vertices.</div></div>
<div class="t" style="left:1581px;top:948.92px;font-size:19px;line-height:19px;color:#b8b8b8;letter-spacing:0.42px">Activate Windows</div>
<div class="t" style="left:1581px;top:973.15px;font-size:14px;line-height:14px;color:#b8b8b8;letter-spacing:0.4px">Go to PC settings to activate Windows.</div>
<div class="t" style="left:1240px;top:1021.84px;font-size:12px;line-height:12px;color:#111;letter-spacing:-0.6px">2.16 GB | 2.27 GB</div>
<svg style="left:11px;top:1047px" width="26" height="26" viewBox="0 0 26 26"><path d="M0 3.5L11 2V12H0ZM12.5 1.8L26 0V12H12.5ZM0 13.5H11V23.5L0 22ZM12.5 13.5H26V26L12.5 24.2Z" fill="#fff"/></svg>
<svg style="left:67px;top:1044px" width="32" height="32" viewBox="0 0 32 32"><circle cx="17" cy="15" r="14" fill="#1a8ad8"/><path d="M4 12A14 14 0 0 1 31 14C31 10 26 7 20 8C12 9 10 16 14 21C9 20 5 16 4 12Z" fill="#4cd080"/><path d="M30 18C28 26 20 30 14 28C20 27 24 24 25 20Z" fill="#0d5ab0"/><circle cx="10" cy="24" r="7" fill="#6a4a3a" stroke="#333" stroke-width="0.8"/><circle cx="10" cy="22" r="4" fill="#d8b8a0"/></svg>
<svg style="left:130px;top:1045px" width="27" height="30" viewBox="0 0 27 30"><rect x="3" y="2" width="22" height="26" rx="1" fill="#8ec0e8" stroke="#5a90c0"/><rect x="1" y="4" width="22" height="25" rx="1" fill="#b8d8f0" stroke="#6aa0d0"/><circle cx="12" cy="16" r="8" fill="#f08a30"/><path d="M9 11L17 16L9 21Z" fill="#fff"/></svg>
<svg style="left:192px;top:1045px" width="30" height="30" viewBox="0 0 30 30"><circle cx="15" cy="15" r="15" fill="#e04030"/><path d="M15 15L28 7.5A15 15 0 0 1 15 30Z" fill="#f5c020"/><path d="M15 15L15 30A15 15 0 0 1 2 7.5Z" fill="#20a050"/><circle cx="15" cy="15" r="7" fill="#fff"/><circle cx="15" cy="15" r="5.5" fill="#3a80e8"/></svg>
<svg style="left:253px;top:1046px" width="30" height="28" viewBox="0 0 30 28"><path d="M2 10L11 26L17 8" fill="none" stroke="#e8304a" stroke-width="5" stroke-linecap="round"/><path d="M15 6L28 3" stroke="#e8304a" stroke-width="4" stroke-linecap="round"/></svg>
<svg style="left:314px;top:1045px" width="34" height="30" viewBox="0 0 34 30"><circle cx="27" cy="7" r="4" fill="#7b83eb"/><circle cx="19" cy="6" r="5" fill="#7b83eb"/><rect x="14" y="11" width="12" height="18" rx="5" fill="#7b83eb"/><rect x="24" y="12" width="8" height="14" rx="4" fill="#6264a7"/><rect x="1" y="8" width="15" height="15" rx="1.5" fill="#4b53bc"/><path d="M4.5 11.5H12.5M8.5 11.5V20" stroke="#fff" stroke-width="2.2"/></svg>
<svg style="left:376px;top:1044px" width="32" height="32" viewBox="0 0 32 32"><ellipse cx="13" cy="23" rx="13" ry="7" fill="#d8d8e0"/><ellipse cx="13" cy="23" rx="3" ry="1.6" fill="#aaa"/><path d="M18 10L26 2V26L18 18H14V10Z" fill="#d8a020"/><ellipse cx="26" cy="14" rx="4" ry="12" fill="#e8b830"/></svg>
<svg style="left:440px;top:1045px" width="30" height="30" viewBox="0 0 30 30"><path d="M1 2L14 15L1 28Z" fill="#6a2ed0"/><path d="M29 2L14 15L29 28Z" fill="#a070f0"/></svg>
<svg style="left:501px;top:1045px" width="31" height="30" viewBox="0 0 31 30"><path d="M0 17L10 12L17 2L24 14L31 28L22 22L15 27Z" fill="#e0702a"/><path d="M0 17L10 12L15 18L8 22Z" fill="#3070c0"/><path d="M17 2L22 22L31 28L24 14Z" fill="#c04020"/></svg>
<div class="a" style="left:563px;top:1044px;width:32px;height:32px;background:#a01a32;"></div>
<svg style="left:567px;top:1050px" width="24" height="20" viewBox="0 0 24 20"><circle cx="12" cy="8" r="3" fill="#fff"/><circle cx="4" cy="12" r="3" fill="#fff"/><circle cx="20" cy="12" r="3" fill="#fff"/><circle cx="2.5" cy="17" r="2.5" fill="#fff"/><circle cx="21.5" cy="17" r="2.5" fill="#fff"/><path d="M4 12L12 8L20 12M4 12L2.5 17M20 12L21.5 17M12 8L9 14H15Z" stroke="#fff" stroke-width="2.2" fill="none"/></svg>
<svg style="left:625px;top:1044px" width="32" height="32" viewBox="0 0 32 32"><path d="M1 6H12L14 4H31V26H1Z" fill="#e8c060"/><rect x="2" y="9" width="28" height="17" fill="#f8e0a0"/><rect x="6" y="5" width="3" height="2" fill="#40b040"/><rect x="14" y="6" width="3" height="2" fill="#e04040"/><rect x="22" y="6" width="3" height="2" fill="#3a80e8"/><path d="M7 20H25V30H21V24H11V30H7Z" fill="#80c8f0"/></svg>
<svg style="left:687px;top:1045px" width="30" height="30" viewBox="0 0 30 30"><path d="M8 2L28 4L22 29L1 26Z" fill="#c0e0f0"/><path d="M8 2L28 4L22 29" fill="none" stroke="#8ab" stroke-width="1"/><path d="M10 1L26 3" stroke="#555" stroke-width="2" stroke-dasharray="1.5 1"/><path d="M4 20L20 23" stroke="#3a8090" stroke-width="2"/></svg>
<svg style="left:749px;top:1044px" width="32" height="32" viewBox="0 0 32 32"><circle cx="17" cy="15" r="14" fill="#1a8ad8"/><path d="M4 12A14 14 0 0 1 31 14C31 10 26 7 20 8C12 9 10 16 14 21C9 20 5 16 4 12Z" fill="#4cd080"/><path d="M30 18C28 26 20 30 14 28C20 27 24 24 25 20Z" fill="#0d5ab0"/><circle cx="10" cy="24" r="7" fill="#6a4a3a" stroke="#333" stroke-width="0.8"/><circle cx="10" cy="22" r="4" fill="#d8b8a0"/></svg>
<div class="a" style="left:812px;top:1045px;width:30px;height:30px;background:#f5c80a;border-radius:3px"></div>
<svg style="left:818px;top:1047px" width="18" height="18" viewBox="0 0 18 18"><circle cx="9" cy="9" r="8" fill="#fff"/><path d="M6.5 5L13 9L6.5 13Z" fill="#f5c80a"/></svg>
<div class="t" style="left:814px;top:1064.38px;font-size:9px;line-height:9px;color:#222;font-weight:bold">Player</div>
<div class="a" style="left:860px;top:1041px;width:58px;height:39px;background:#7a7256;border:1px solid #8a8468"></div>
<svg style="left:872px;top:1046px" width="32" height="28" viewBox="0 0 32 28"><path d="M3 6L26 1L31 22L8 27Z" fill="#e8e8e8" stroke="#ccc"/><rect x="7" y="7" width="20" height="14" rx="4" fill="#1b3f9a"/><path d="M10 10L19 14L10 18Z" fill="#f2e23a"/><rect x="17" y="9" width="8" height="10" fill="#3a78d8"/><path d="M18 9V19M21 9V19M24 9V19" stroke="#9cc0f0" stroke-width="0.8"/></svg>
<div class="a" style="left:921px;top:1041px;width:54px;height:39px;background:#c76f6f;border:1px solid #e0a0a0"></div>
<div class="a" style="left:975px;top:1041px;width:3px;height:39px;background:#cfc8b8;"></div>
<svg style="left:933px;top:1045px" width="30" height="31" viewBox="0 0 30 31"><ellipse cx="15" cy="15.5" rx="14" ry="15" fill="#e8202a"/><ellipse cx="15" cy="15.5" rx="6" ry="11" fill="#c77070"/></svg>
<svg style="left:1691px;top:1059px" width="8" height="5" viewBox="0 0 8 5"><path d="M0 5L4 0L8 5Z" fill="#fff"/></svg>
<svg style="left:1712px;top:1052px" width="14" height="12" viewBox="0 0 14 12"><rect x="0" y="10" width="2" height="2" fill="#fff"/><rect x="3.5" y="8" width="2" height="4" fill="#fff"/><rect x="7" y="5" width="2" height="7" fill="#fff"/><rect x="10.5" y="1" width="2" height="11" fill="#fff"/></svg>
<svg style="left:1734px;top:1053px" width="15" height="11" viewBox="0 0 15 11"><rect x="0" y="0" width="1.5" height="11" fill="#fff"/><path d="M1.5 0H8L9 2H14L12 7H8L7 5H1.5Z" fill="#fff"/></svg>
<svg style="left:1758px;top:1053px" width="15" height="11" viewBox="0 0 15 11"><rect x="0" y="3" width="5" height="6" fill="#fff"/><path d="M1 0V3M4 0V3" stroke="#fff"/><rect x="7.5" y="1.5" width="6" height="9.5" fill="none" stroke="#fff" stroke-width="1.4"/><rect x="9" y="0" width="3" height="2" fill="#fff"/></svg>
<svg style="left:1784px;top:1053px" width="13" height="11" viewBox="0 0 13 11"><path d="M0 5L6 0V11H0Z" fill="#fff"/><path d="M9 3A4 4 0 0 1 9 9" fill="none" stroke="#fff"/></svg>
<div class="t" style="left:1812px;top:1055.00px;font-size:13px;line-height:13px;color:#fff;transform:scaleX(0.82);transform-origin:left">ENG</div>
<div class="t" style="left:1855px;top:1046.84px;font-size:12px;line-height:12px;color:#fff;">4:39 PM</div>
<div class="a" style="left:1468px;top:1064px;width:452px;height:16px;background:linear-gradient(#454545,#6a6a6a 40%,#8c8c8c);"></div>
<div class="a" style="left:1470px;top:1073px;width:12px;height:7px;background:#2a3a6a;"></div>
<svg style="left:1472px;top:1073px" width="10" height="7" viewBox="0 0 10 7"><path d="M1 7L9 0" stroke="#fff" stroke-width="1.5"/></svg>
<svg style="left:1868px;top:1071px" width="12" height="9" viewBox="0 0 12 9"><circle cx="6" cy="6" r="4" fill="none" stroke="#fff" stroke-width="1.5"/></svg>
<svg style="left:1908px;top:1074px" width="10" height="6" viewBox="0 0 10 6"><path d="M0 0L5 5L10 0" fill="none" stroke="#fff" stroke-width="1.3"/></svg>
</body></html>
